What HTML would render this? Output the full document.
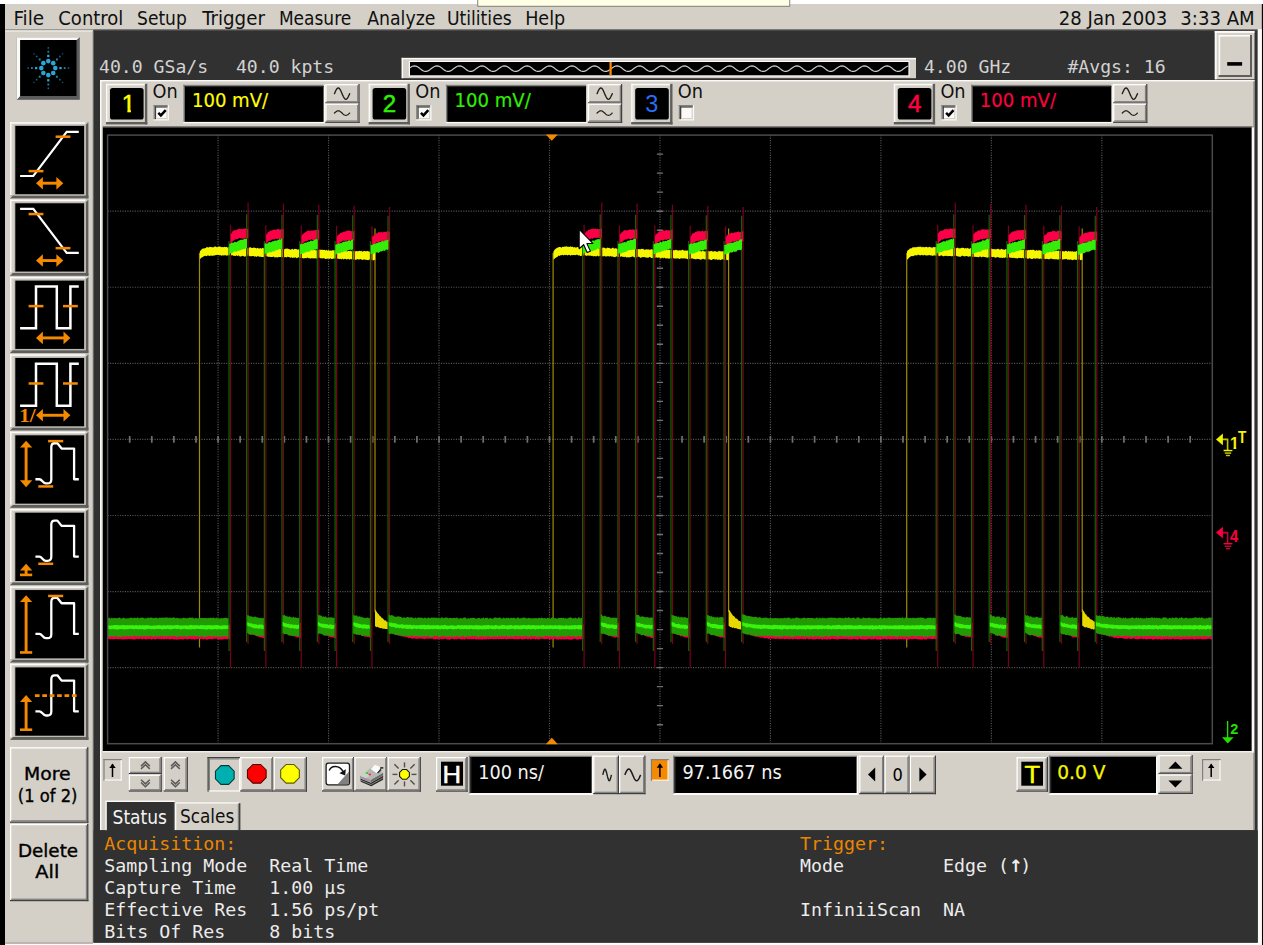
<!DOCTYPE html>
<html><head><meta charset="utf-8"><title>Infiniium</title>
<style>html,body{margin:0;padding:0;background:#fff;overflow:hidden}svg{display:block}</style>
</head><body>
<svg width="1263" height="945" viewBox="0 0 1263 945">
<g id="frame">
<rect x="0" y="0" width="1263" height="945" fill="#ffffff"/>
<rect x="0" y="4" width="5.2" height="941" fill="#000000"/>
<rect x="5.2" y="4" width="1256.6" height="25.3" fill="#d4d0c8"/>
<rect x="1261.8" y="4" width="1.2" height="941" fill="#000000"/>
<rect x="477.3" y="0" width="312.9" height="6.7" fill="#77776c"/>
<rect x="478.2" y="0" width="311.1" height="5.8" fill="#ffffe6"/>
<rect x="5.2" y="29.3" width="87.8" height="913.7" fill="#d4d0c8"/>
<rect x="5.2" y="30.1" width="87.8" height="1.5" fill="#f1f0ec"/>
<rect x="93" y="30.1" width="1164.8" height="912.6" fill="#313131"/>
<rect x="92.6" y="30.8" width="1" height="911.9" fill="#8c8a86"/>
<rect x="5.2" y="29.2" width="1252.6" height="1" fill="#8a8884"/>
<rect x="93.6" y="29.6" width="1164.2" height="1" fill="#454545"/>
<rect x="1257.8" y="29.3" width="4" height="915.7" fill="#fbfaf8"/>
<rect x="5.2" y="942.9" width="1252.6" height="2.1" fill="#ffffff"/>
<rect x="5.2" y="942.6" width="87.8" height="1" fill="#8c8a86"/>
</g>
<g id="menu">
<text x="13.44" y="25" font-family="'DejaVu Sans Condensed','Liberation Sans',sans-serif" font-size="20.1" fill="#101010" textLength="30.69" lengthAdjust="spacingAndGlyphs" xml:space="preserve">File</text>
<text x="58.29" y="25" font-family="'DejaVu Sans Condensed','Liberation Sans',sans-serif" font-size="20.1" fill="#101010" textLength="65.07" lengthAdjust="spacingAndGlyphs" xml:space="preserve">Control</text>
<text x="137.05" y="25" font-family="'DejaVu Sans Condensed','Liberation Sans',sans-serif" font-size="20.1" fill="#101010" textLength="49.73" lengthAdjust="spacingAndGlyphs" xml:space="preserve">Setup</text>
<text x="202.3" y="25" font-family="'DejaVu Sans Condensed','Liberation Sans',sans-serif" font-size="20.1" fill="#101010" textLength="62.61" lengthAdjust="spacingAndGlyphs" xml:space="preserve">Trigger</text>
<text x="278.88" y="25" font-family="'DejaVu Sans Condensed','Liberation Sans',sans-serif" font-size="20.1" fill="#101010" textLength="72.36" lengthAdjust="spacingAndGlyphs" xml:space="preserve">Measure</text>
<text x="367.21" y="25" font-family="'DejaVu Sans Condensed','Liberation Sans',sans-serif" font-size="20.1" fill="#101010" textLength="68.15" lengthAdjust="spacingAndGlyphs" xml:space="preserve">Analyze</text>
<text x="446.96" y="25" font-family="'DejaVu Sans Condensed','Liberation Sans',sans-serif" font-size="20.1" fill="#101010" textLength="64.73" lengthAdjust="spacingAndGlyphs" xml:space="preserve">Utilities</text>
<text x="525.13" y="25" font-family="'DejaVu Sans Condensed','Liberation Sans',sans-serif" font-size="20.1" fill="#101010" textLength="40.09" lengthAdjust="spacingAndGlyphs" xml:space="preserve">Help</text>
<text x="1167.2" y="25" font-family="'DejaVu Sans Condensed','Liberation Sans',sans-serif" font-size="20.1" fill="#101010" text-anchor="end" xml:space="preserve">28 Jan 2003</text>
<text x="1254.6" y="25" font-family="'DejaVu Sans Condensed','Liberation Sans',sans-serif" font-size="20.1" fill="#101010" text-anchor="end" xml:space="preserve">3:33 AM</text>
</g>
<g id="sidebar">
<rect x="16.8" y="37.2" width="63" height="62.6" fill="#5c5c5c"/>
<polygon points="16.8,37.2 79.8,37.2 76.5,40 20.2,40 20.2,96 16.8,99.8" fill="#fbfaf7"/>
<rect x="20.2" y="40" width="56.3" height="56" fill="#000"/>
<circle cx="55.3" cy="68.1" r="2.3" fill="#2aa6d6"/>
<rect x="59.35" y="66.95" width="2.3" height="2.3" fill="#2aa6d6" opacity="1"/>
<rect x="63.8" y="67.2" width="1.8" height="1.8" fill="#2aa6d6" opacity="0.8"/>
<rect x="67.75" y="67.35" width="1.5" height="1.5" fill="#2aa6d6" opacity="0.65"/>
<circle cx="53.25" cy="73.05" r="2.3" fill="#2aa6d6"/>
<rect x="55.95" y="75.75" width="1.95" height="1.95" fill="#2aa6d6" opacity="0.8"/>
<rect x="59.13" y="78.93" width="1.53" height="1.53" fill="#2aa6d6" opacity="0.6400000000000001"/>
<rect x="61.95" y="81.75" width="1.27" height="1.27" fill="#2aa6d6" opacity="0.52"/>
<circle cx="48.3" cy="75.1" r="2.3" fill="#2aa6d6"/>
<rect x="47.15" y="79.15" width="2.3" height="2.3" fill="#2aa6d6" opacity="1"/>
<rect x="47.4" y="83.6" width="1.8" height="1.8" fill="#2aa6d6" opacity="0.8"/>
<rect x="47.55" y="87.55" width="1.5" height="1.5" fill="#2aa6d6" opacity="0.65"/>
<circle cx="43.35" cy="73.05" r="2.3" fill="#2aa6d6"/>
<rect x="38.7" y="75.75" width="1.95" height="1.95" fill="#2aa6d6" opacity="0.8"/>
<rect x="35.94" y="78.93" width="1.53" height="1.53" fill="#2aa6d6" opacity="0.6400000000000001"/>
<rect x="33.38" y="81.75" width="1.27" height="1.27" fill="#2aa6d6" opacity="0.52"/>
<circle cx="41.3" cy="68.1" r="2.3" fill="#2aa6d6"/>
<rect x="34.95" y="66.95" width="2.3" height="2.3" fill="#2aa6d6" opacity="1"/>
<rect x="31" y="67.2" width="1.8" height="1.8" fill="#2aa6d6" opacity="0.8"/>
<rect x="27.35" y="67.35" width="1.5" height="1.5" fill="#2aa6d6" opacity="0.65"/>
<circle cx="43.35" cy="63.15" r="2.3" fill="#2aa6d6"/>
<rect x="38.7" y="58.5" width="1.95" height="1.95" fill="#2aa6d6" opacity="0.8"/>
<rect x="35.94" y="55.74" width="1.53" height="1.53" fill="#2aa6d6" opacity="0.6400000000000001"/>
<rect x="33.38" y="53.18" width="1.27" height="1.27" fill="#2aa6d6" opacity="0.52"/>
<circle cx="48.3" cy="61.1" r="2.3" fill="#2aa6d6"/>
<rect x="47.15" y="54.75" width="2.3" height="2.3" fill="#2aa6d6" opacity="1"/>
<rect x="47.4" y="50.8" width="1.8" height="1.8" fill="#2aa6d6" opacity="0.8"/>
<rect x="47.55" y="47.15" width="1.5" height="1.5" fill="#2aa6d6" opacity="0.65"/>
<circle cx="53.25" cy="63.15" r="2.3" fill="#2aa6d6"/>
<rect x="55.95" y="58.5" width="1.95" height="1.95" fill="#2aa6d6" opacity="0.8"/>
<rect x="59.13" y="55.74" width="1.53" height="1.53" fill="#2aa6d6" opacity="0.6400000000000001"/>
<rect x="61.95" y="53.18" width="1.27" height="1.27" fill="#2aa6d6" opacity="0.52"/>
<rect x="10" y="122.2" width="78.4" height="76.2" fill="#d4d0c8"/>
<rect x="10" y="122.2" width="77.2" height="1.5" fill="#fbfaf7"/>
<rect x="10" y="122.2" width="1.5" height="75" fill="#fbfaf7"/>
<rect x="10" y="195.5" width="78.4" height="2.9" fill="#5e5e5c"/>
<rect x="85.8" y="122.2" width="2.6" height="76.2" fill="#5e5e5c"/>
<polygon points="10,198.4 12.9,195.5 10,195.5" fill="#d4d0c8"/>
<polygon points="88.4,122.2 85.8,124.8 85.8,122.2" fill="#d4d0c8"/>
<rect x="14.1" y="124.7" width="71.2" height="70.7" fill="#bdb9b1"/>
<rect x="15.3" y="125.9" width="68.8" height="68.3" fill="#000"/>
<path d="M20.1,176 H33.3 L66.7,131.8 H78.8" stroke="#fff" fill="none" stroke-width="2.2"/>
<rect x="55.6" y="135.45" width="14.8" height="2.5" fill="#f58a00"/>
<rect x="28.6" y="169.85" width="14.8" height="2.5" fill="#f58a00"/>
<rect x="41.9" y="181.75" width="15.5" height="2.9" fill="#f58a00"/>
<polygon points="36,183.2 42.9,176.9 42.9,189.5" fill="#f58a00"/>
<polygon points="63.3,183.2 56.4,176.9 56.4,189.5" fill="#f58a00"/>
<rect x="10" y="199.56" width="78.4" height="76.2" fill="#d4d0c8"/>
<rect x="10" y="199.56" width="77.2" height="1.5" fill="#fbfaf7"/>
<rect x="10" y="199.56" width="1.5" height="75" fill="#fbfaf7"/>
<rect x="10" y="272.86" width="78.4" height="2.9" fill="#5e5e5c"/>
<rect x="85.8" y="199.56" width="2.6" height="76.2" fill="#5e5e5c"/>
<polygon points="10,275.76 12.9,272.86 10,272.86" fill="#d4d0c8"/>
<polygon points="88.4,199.56 85.8,202.16 85.8,199.56" fill="#d4d0c8"/>
<rect x="14.1" y="202.06" width="71.2" height="70.7" fill="#bdb9b1"/>
<rect x="15.3" y="203.26" width="68.8" height="68.3" fill="#000"/>
<path d="M20.1,208.86 H33.3 L66.7,252.96 H78.8" stroke="#fff" fill="none" stroke-width="2.2"/>
<rect x="28.6" y="212.81" width="14.8" height="2.5" fill="#f58a00"/>
<rect x="55.6" y="246.91" width="14.8" height="2.5" fill="#f58a00"/>
<rect x="41.9" y="259.11" width="15.5" height="2.9" fill="#f58a00"/>
<polygon points="36,260.56 42.9,254.26 42.9,266.86" fill="#f58a00"/>
<polygon points="63.3,260.56 56.4,254.26 56.4,266.86" fill="#f58a00"/>
<rect x="10" y="276.92" width="78.4" height="76.2" fill="#d4d0c8"/>
<rect x="10" y="276.92" width="77.2" height="1.5" fill="#fbfaf7"/>
<rect x="10" y="276.92" width="1.5" height="75" fill="#fbfaf7"/>
<rect x="10" y="350.22" width="78.4" height="2.9" fill="#5e5e5c"/>
<rect x="85.8" y="276.92" width="2.6" height="76.2" fill="#5e5e5c"/>
<polygon points="10,353.12 12.9,350.22 10,350.22" fill="#d4d0c8"/>
<polygon points="88.4,276.92 85.8,279.52 85.8,276.92" fill="#d4d0c8"/>
<rect x="14.1" y="279.42" width="71.2" height="70.7" fill="#bdb9b1"/>
<rect x="15.3" y="280.62" width="68.8" height="68.3" fill="#000"/>
<path d="M20.1,328.32 H36 V286.42 H56.8 V328.32 H70.4 V286.42 H78.8" stroke="#fff" fill="none" stroke-width="2.5"/>
<rect x="28.6" y="304.87" width="14.8" height="2.5" fill="#f58a00"/>
<rect x="63" y="304.87" width="14.8" height="2.5" fill="#f58a00"/>
<rect x="41.9" y="336.47" width="22.6" height="2.9" fill="#f58a00"/>
<polygon points="36,337.92 42.9,331.62 42.9,344.22" fill="#f58a00"/>
<polygon points="70.4,337.92 63.5,331.62 63.5,344.22" fill="#f58a00"/>
<rect x="10" y="354.28" width="78.4" height="76.2" fill="#d4d0c8"/>
<rect x="10" y="354.28" width="77.2" height="1.5" fill="#fbfaf7"/>
<rect x="10" y="354.28" width="1.5" height="75" fill="#fbfaf7"/>
<rect x="10" y="427.58" width="78.4" height="2.9" fill="#5e5e5c"/>
<rect x="85.8" y="354.28" width="2.6" height="76.2" fill="#5e5e5c"/>
<polygon points="10,430.48 12.9,427.58 10,427.58" fill="#d4d0c8"/>
<polygon points="88.4,354.28 85.8,356.88 85.8,354.28" fill="#d4d0c8"/>
<rect x="14.1" y="356.78" width="71.2" height="70.7" fill="#bdb9b1"/>
<rect x="15.3" y="357.98" width="68.8" height="68.3" fill="#000"/>
<path d="M20.1,405.68 H36 V363.78 H56.8 V405.68 H70.4 V363.78 H78.8" stroke="#fff" fill="none" stroke-width="2.5"/>
<rect x="28.6" y="382.23" width="14.8" height="2.5" fill="#f58a00"/>
<rect x="63" y="382.23" width="14.8" height="2.5" fill="#f58a00"/>
<rect x="41.9" y="413.83" width="22.6" height="2.9" fill="#f58a00"/>
<polygon points="36,415.28 42.9,408.98 42.9,421.58" fill="#f58a00"/>
<polygon points="70.4,415.28 63.5,408.98 63.5,421.58" fill="#f58a00"/>
<text x="19.2" y="421.58" font-family="'Liberation Serif',serif" font-size="19.5" fill="#f58a00" font-weight="bold" textLength="16.5" lengthAdjust="spacingAndGlyphs" xml:space="preserve">1/</text>
<rect x="10" y="431.64" width="78.4" height="76.2" fill="#d4d0c8"/>
<rect x="10" y="431.64" width="77.2" height="1.5" fill="#fbfaf7"/>
<rect x="10" y="431.64" width="1.5" height="75" fill="#fbfaf7"/>
<rect x="10" y="504.94" width="78.4" height="2.9" fill="#5e5e5c"/>
<rect x="85.8" y="431.64" width="2.6" height="76.2" fill="#5e5e5c"/>
<polygon points="10,507.84 12.9,504.94 10,504.94" fill="#d4d0c8"/>
<polygon points="88.4,431.64 85.8,434.24 85.8,431.64" fill="#d4d0c8"/>
<rect x="14.1" y="434.14" width="71.2" height="70.7" fill="#bdb9b1"/>
<rect x="15.3" y="435.34" width="68.8" height="68.3" fill="#000"/>
<path d="M35.4,479.24 H39.4 C42,479.24 43,483.44 45.8,483.44 H47.6 C50.2,483.44 51.3,482.24 51.3,479.44 V447.24 C51.3,444.44 52.4,443.24 54.6,443.24 H57.4 L61.6,448.54 H74.1 V479.24 H78.8" stroke="#fff" fill="none" stroke-width="2.3" stroke-linejoin="round"/>
<rect x="48.1" y="439.89" width="15.1" height="2.5" fill="#f58a00"/>
<rect x="38.3" y="485.19" width="14.9" height="2.5" fill="#f58a00"/>
<rect x="24.65" y="446.34" width="2.9" height="35" fill="#f58a00"/>
<polygon points="26.1,440.64 20,447.44 32.2,447.44" fill="#f58a00"/>
<polygon points="26.1,487.14 20,480.34 32.2,480.34" fill="#f58a00"/>
<rect x="10" y="509" width="78.4" height="76.2" fill="#d4d0c8"/>
<rect x="10" y="509" width="77.2" height="1.5" fill="#fbfaf7"/>
<rect x="10" y="509" width="1.5" height="75" fill="#fbfaf7"/>
<rect x="10" y="582.3" width="78.4" height="2.9" fill="#5e5e5c"/>
<rect x="85.8" y="509" width="2.6" height="76.2" fill="#5e5e5c"/>
<polygon points="10,585.2 12.9,582.3 10,582.3" fill="#d4d0c8"/>
<polygon points="88.4,509 85.8,511.6 85.8,509" fill="#d4d0c8"/>
<rect x="14.1" y="511.5" width="71.2" height="70.7" fill="#bdb9b1"/>
<rect x="15.3" y="512.7" width="68.8" height="68.3" fill="#000"/>
<path d="M35.4,556.6 H39.4 C42,556.6 43,560.8 45.8,560.8 H47.6 C50.2,560.8 51.3,559.6 51.3,556.8 V524.6 C51.3,521.8 52.4,520.6 54.6,520.6 H57.4 L61.6,525.9 H74.1 V556.6 H78.8" stroke="#fff" fill="none" stroke-width="2.3" stroke-linejoin="round"/>
<rect x="38.3" y="562.55" width="14.9" height="2.5" fill="#f58a00"/>
<rect x="24.65" y="569.6" width="2.9" height="5.3" fill="#f58a00"/>
<polygon points="26.1,563.8 20,570.6 32.2,570.6" fill="#f58a00"/>
<rect x="20" y="573.6" width="12.2" height="2.6" fill="#f58a00"/>
<rect x="10" y="586.36" width="78.4" height="76.2" fill="#d4d0c8"/>
<rect x="10" y="586.36" width="77.2" height="1.5" fill="#fbfaf7"/>
<rect x="10" y="586.36" width="1.5" height="75" fill="#fbfaf7"/>
<rect x="10" y="659.66" width="78.4" height="2.9" fill="#5e5e5c"/>
<rect x="85.8" y="586.36" width="2.6" height="76.2" fill="#5e5e5c"/>
<polygon points="10,662.56 12.9,659.66 10,659.66" fill="#d4d0c8"/>
<polygon points="88.4,586.36 85.8,588.96 85.8,586.36" fill="#d4d0c8"/>
<rect x="14.1" y="588.86" width="71.2" height="70.7" fill="#bdb9b1"/>
<rect x="15.3" y="590.06" width="68.8" height="68.3" fill="#000"/>
<path d="M35.4,633.96 H39.4 C42,633.96 43,638.16 45.8,638.16 H47.6 C50.2,638.16 51.3,636.96 51.3,634.16 V601.96 C51.3,599.16 52.4,597.96 54.6,597.96 H57.4 L61.6,603.26 H74.1 V633.96 H78.8" stroke="#fff" fill="none" stroke-width="2.3" stroke-linejoin="round"/>
<rect x="48.1" y="594.71" width="15.1" height="2.5" fill="#f58a00"/>
<rect x="24.65" y="601.06" width="2.9" height="51.4" fill="#f58a00"/>
<polygon points="26.1,595.26 20,602.06 32.2,602.06" fill="#f58a00"/>
<rect x="20" y="651.16" width="12.2" height="2.6" fill="#f58a00"/>
<rect x="10" y="663.72" width="78.4" height="76.2" fill="#d4d0c8"/>
<rect x="10" y="663.72" width="77.2" height="1.5" fill="#fbfaf7"/>
<rect x="10" y="663.72" width="1.5" height="75" fill="#fbfaf7"/>
<rect x="10" y="737.02" width="78.4" height="2.9" fill="#5e5e5c"/>
<rect x="85.8" y="663.72" width="2.6" height="76.2" fill="#5e5e5c"/>
<polygon points="10,739.92 12.9,737.02 10,737.02" fill="#d4d0c8"/>
<polygon points="88.4,663.72 85.8,666.32 85.8,663.72" fill="#d4d0c8"/>
<rect x="14.1" y="666.22" width="71.2" height="70.7" fill="#bdb9b1"/>
<rect x="15.3" y="667.42" width="68.8" height="68.3" fill="#000"/>
<path d="M35.4,711.32 H39.4 C42,711.32 43,715.52 45.8,715.52 H47.6 C50.2,715.52 51.3,714.32 51.3,711.52 V679.32 C51.3,676.52 52.4,675.32 54.6,675.32 H57.4 L61.6,680.62 H74.1 V711.32 H78.8" stroke="#fff" fill="none" stroke-width="2.3" stroke-linejoin="round"/>
<line x1="34.9" y1="695.62" x2="76.9" y2="695.62" stroke="#f58a00" stroke-width="2.7" stroke-dasharray="4.7 2.7"/>
<rect x="24.65" y="700.92" width="2.9" height="28.8" fill="#f58a00"/>
<polygon points="26.1,695.12 20,701.92 32.2,701.92" fill="#f58a00"/>
<rect x="20" y="728.42" width="12.2" height="2.6" fill="#f58a00"/>
<rect x="10" y="747.2" width="78.4" height="75.6" fill="#d4d0c8"/>
<rect x="10" y="747.2" width="77.1" height="1.3" fill="#ffffff"/>
<rect x="10" y="747.2" width="1.3" height="74.3" fill="#ffffff"/>
<rect x="10" y="821.5" width="78.4" height="1.3" fill="#404040"/>
<rect x="87.1" y="747.2" width="1.3" height="75.6" fill="#404040"/>
<rect x="11.3" y="820.2" width="75.8" height="1.3" fill="#808080"/>
<rect x="85.8" y="748.5" width="1.3" height="73" fill="#808080"/>
<rect x="10" y="823.9" width="78.4" height="77.3" fill="#d4d0c8"/>
<rect x="10" y="823.9" width="77.1" height="1.3" fill="#ffffff"/>
<rect x="10" y="823.9" width="1.3" height="76" fill="#ffffff"/>
<rect x="10" y="899.9" width="78.4" height="1.3" fill="#404040"/>
<rect x="87.1" y="823.9" width="1.3" height="77.3" fill="#404040"/>
<rect x="11.3" y="898.6" width="75.8" height="1.3" fill="#808080"/>
<rect x="85.8" y="825.2" width="1.3" height="74.7" fill="#808080"/>
<text x="47.4" y="779.8" font-family="'DejaVu Sans','Liberation Sans',sans-serif" font-size="18.3" fill="#000" text-anchor="middle" textLength="46.6" lengthAdjust="spacingAndGlyphs" stroke="#000" stroke-width="0.4" xml:space="preserve">More</text>
<text x="47.6" y="802" font-family="'DejaVu Sans','Liberation Sans',sans-serif" font-size="18.3" fill="#000" text-anchor="middle" textLength="59.6" lengthAdjust="spacingAndGlyphs" stroke="#000" stroke-width="0.4" xml:space="preserve">(1 of 2)</text>
<text x="48" y="856.8" font-family="'DejaVu Sans','Liberation Sans',sans-serif" font-size="18.3" fill="#000" text-anchor="middle" textLength="60.2" lengthAdjust="spacingAndGlyphs" stroke="#000" stroke-width="0.4" xml:space="preserve">Delete</text>
<text x="47.3" y="878.4" font-family="'DejaVu Sans','Liberation Sans',sans-serif" font-size="18.3" fill="#000" text-anchor="middle" textLength="24" lengthAdjust="spacingAndGlyphs" stroke="#000" stroke-width="0.4" xml:space="preserve">All</text>
</g>
<g id="toprow">
<text x="99" y="73" font-family="'DejaVu Sans Mono','Liberation Mono',monospace" font-size="18.15" fill="#d2d2d2" xml:space="preserve">40.0 GSa/s</text>
<text x="235.9" y="73" font-family="'DejaVu Sans Mono','Liberation Mono',monospace" font-size="18.15" fill="#d2d2d2" xml:space="preserve">40.0 kpts</text>
<text x="923.9" y="73" font-family="'DejaVu Sans Mono','Liberation Mono',monospace" font-size="18.15" fill="#d2d2d2" xml:space="preserve">4.00 GHz</text>
<text x="1067.4" y="73" font-family="'DejaVu Sans Mono','Liberation Mono',monospace" font-size="18.15" fill="#d2d2d2" xml:space="preserve">#Avgs: 16</text>
<rect x="401.7" y="57.9" width="514.3" height="20.3" fill="#d4d0c8"/>
<rect x="401.7" y="57.9" width="514.3" height="1.4" fill="#fbfaf7"/>
<rect x="401.7" y="57.9" width="1.4" height="20.3" fill="#fbfaf7"/>
<rect x="408.8" y="60.8" width="500.8" height="15.7" fill="#fbfaf7"/>
<rect x="410" y="62" width="498.4" height="13.3" fill="#000"/>
<path d="M410,67.69 L411.5,66.68 L413,66.02 L414.5,65.8 L416,66.08 L417.5,66.8 L419,67.85 L420.5,69.03 L422,70.14 L423.5,71 L425,71.45 L426.5,71.42 L428,70.91 L429.5,70.01 L431,68.87 L432.5,67.69 L434,66.68 L435.5,66.02 L437,65.8 L438.5,66.08 L440,66.8 L441.5,67.85 L443,69.03 L444.5,70.14 L446,71 L447.5,71.45 L449,71.42 L450.5,70.91 L452,70.01 L453.5,68.87 L455,67.69 L456.5,66.68 L458,66.02 L459.5,65.8 L461,66.08 L462.5,66.8 L464,67.85 L465.5,69.03 L467,70.14 L468.5,71 L470,71.45 L471.5,71.42 L473,70.91 L474.5,70.01 L476,68.87 L477.5,67.69 L479,66.68 L480.5,66.02 L482,65.8 L483.5,66.08 L485,66.8 L486.5,67.85 L488,69.03 L489.5,70.14 L491,71 L492.5,71.45 L494,71.42 L495.5,70.91 L497,70.01 L498.5,68.87 L500,67.69 L501.5,66.68 L503,66.02 L504.5,65.8 L506,66.08 L507.5,66.8 L509,67.85 L510.5,69.03 L512,70.14 L513.5,71 L515,71.45 L516.5,71.42 L518,70.91 L519.5,70.01 L521,68.87 L522.5,67.69 L524,66.68 L525.5,66.02 L527,65.8 L528.5,66.08 L530,66.8 L531.5,67.85 L533,69.03 L534.5,70.14 L536,71 L537.5,71.45 L539,71.42 L540.5,70.91 L542,70.01 L543.5,68.87 L545,67.69 L546.5,66.68 L548,66.02 L549.5,65.8 L551,66.08 L552.5,66.8 L554,67.85 L555.5,69.03 L557,70.14 L558.5,71 L560,71.45 L561.5,71.42 L563,70.91 L564.5,70.01 L566,68.87 L567.5,67.69 L569,66.68 L570.5,66.02 L572,65.8 L573.5,66.08 L575,66.8 L576.5,67.85 L578,69.03 L579.5,70.14 L581,71 L582.5,71.45 L584,71.42 L585.5,70.91 L587,70.01 L588.5,68.87 L590,67.69 L591.5,66.68 L593,66.02 L594.5,65.8 L596,66.08 L597.5,66.8 L599,67.85 L600.5,69.03 L602,70.14 L603.5,71 L605,71.45 L606.5,71.42 L608,70.91 L609.5,70.01 L611,68.87 L612.5,67.69 L614,66.68 L615.5,66.02 L617,65.8 L618.5,66.08 L620,66.8 L621.5,67.85 L623,69.03 L624.5,70.14 L626,71 L627.5,71.45 L629,71.42 L630.5,70.91 L632,70.01 L633.5,68.87 L635,67.69 L636.5,66.68 L638,66.02 L639.5,65.8 L641,66.08 L642.5,66.8 L644,67.85 L645.5,69.03 L647,70.14 L648.5,71 L650,71.45 L651.5,71.42 L653,70.91 L654.5,70.01 L656,68.87 L657.5,67.69 L659,66.68 L660.5,66.02 L662,65.8 L663.5,66.08 L665,66.8 L666.5,67.85 L668,69.03 L669.5,70.14 L671,71 L672.5,71.45 L674,71.42 L675.5,70.91 L677,70.01 L678.5,68.87 L680,67.69 L681.5,66.68 L683,66.02 L684.5,65.8 L686,66.08 L687.5,66.8 L689,67.85 L690.5,69.03 L692,70.14 L693.5,71 L695,71.45 L696.5,71.42 L698,70.91 L699.5,70.01 L701,68.87 L702.5,67.69 L704,66.68 L705.5,66.02 L707,65.8 L708.5,66.08 L710,66.8 L711.5,67.85 L713,69.03 L714.5,70.14 L716,71 L717.5,71.45 L719,71.42 L720.5,70.91 L722,70.01 L723.5,68.87 L725,67.69 L726.5,66.68 L728,66.02 L729.5,65.8 L731,66.08 L732.5,66.8 L734,67.85 L735.5,69.03 L737,70.14 L738.5,71 L740,71.45 L741.5,71.42 L743,70.91 L744.5,70.01 L746,68.87 L747.5,67.69 L749,66.68 L750.5,66.02 L752,65.8 L753.5,66.08 L755,66.8 L756.5,67.85 L758,69.03 L759.5,70.14 L761,71 L762.5,71.45 L764,71.42 L765.5,70.91 L767,70.01 L768.5,68.87 L770,67.69 L771.5,66.68 L773,66.02 L774.5,65.8 L776,66.08 L777.5,66.8 L779,67.85 L780.5,69.03 L782,70.14 L783.5,71 L785,71.45 L786.5,71.42 L788,70.91 L789.5,70.01 L791,68.87 L792.5,67.69 L794,66.68 L795.5,66.02 L797,65.8 L798.5,66.08 L800,66.8 L801.5,67.85 L803,69.03 L804.5,70.14 L806,71 L807.5,71.45 L809,71.42 L810.5,70.91 L812,70.01 L813.5,68.87 L815,67.69 L816.5,66.68 L818,66.02 L819.5,65.8 L821,66.08 L822.5,66.8 L824,67.85 L825.5,69.03 L827,70.14 L828.5,71 L830,71.45 L831.5,71.42 L833,70.91 L834.5,70.01 L836,68.87 L837.5,67.69 L839,66.68 L840.5,66.02 L842,65.8 L843.5,66.08 L845,66.8 L846.5,67.85 L848,69.03 L849.5,70.14 L851,71 L852.5,71.45 L854,71.42 L855.5,70.91 L857,70.01 L858.5,68.87 L860,67.69 L861.5,66.68 L863,66.02 L864.5,65.8 L866,66.08 L867.5,66.8 L869,67.85 L870.5,69.03 L872,70.14 L873.5,71 L875,71.45 L876.5,71.42 L878,70.91 L879.5,70.01 L881,68.87 L882.5,67.69 L884,66.68 L885.5,66.02 L887,65.8 L888.5,66.08 L890,66.8 L891.5,67.85 L893,69.03 L894.5,70.14 L896,71 L897.5,71.45 L899,71.42 L900.5,70.91 L902,70.01 L903.5,68.87 L905,67.69 L906.5,66.68 L908,66.02" stroke="#c6c6c6" fill="none" stroke-width="1.25"/>
<rect x="609.5" y="62" width="2.2" height="13.3" fill="#ff8a00"/>
<rect x="1214.8" y="31" width="39.7" height="48.3" fill="#d4d0c8"/>
<rect x="1214.8" y="31" width="39.7" height="1.9" fill="#fbfaf7"/>
<rect x="1214.8" y="31" width="1.9" height="48.3" fill="#fbfaf7"/>
<rect x="1218.6" y="35" width="33.4" height="42" fill="#d4d0c8"/>
<rect x="1218.6" y="35" width="31.4" height="1.6" fill="#fbfaf7"/>
<rect x="1218.6" y="35" width="1.6" height="40" fill="#fbfaf7"/>
<rect x="1218.6" y="75" width="33.4" height="2" fill="#5e5e5c"/>
<rect x="1250" y="35" width="2" height="42" fill="#5e5e5c"/>
<rect x="1227.2" y="62.1" width="14.9" height="3.6" fill="#000"/>
</g>
<g id="panel">
<rect x="100" y="80" width="1154.5" height="750.2" fill="#d4d0c8"/>
<rect x="100" y="80" width="1154.5" height="1.4" fill="#fbfaf7"/>
<rect x="100" y="80" width="1.5" height="750.2" fill="#fbfaf7"/>
<rect x="1253.3" y="81.4" width="1.2" height="748.8" fill="#8c8a86"/>
</g>
<g id="chanbar">
<rect x="106" y="83.8" width="41.3" height="40.6" fill="#d4d0c8"/>
<rect x="106" y="83.8" width="40.1" height="1.5" fill="#fbfaf7"/>
<rect x="106" y="83.8" width="1.5" height="39.4" fill="#fbfaf7"/>
<rect x="106" y="122" width="41.3" height="2.4" fill="#5e5e5c"/>
<rect x="144.9" y="83.8" width="2.4" height="40.6" fill="#5e5e5c"/>
<rect x="107.5" y="85.3" width="1.2" height="36.7" fill="#e6e3de"/>
<rect x="110" y="88" width="33.6" height="31.5" rx="2.6" fill="#000"/>
<text x="128.4" y="112.4" font-family="'Liberation Sans',sans-serif" font-size="24" fill="#ffff00" text-anchor="middle" stroke="#ffff00" stroke-width="0.5" xml:space="preserve">1</text>
<rect x="122" y="109.3" width="5.35" height="3.9" fill="#000"/>
<rect x="130.9" y="109.3" width="5.1" height="3.9" fill="#000"/>
<text x="152.6" y="98" font-family="'DejaVu Sans Condensed','Liberation Sans',sans-serif" font-size="19.7" fill="#101010" xml:space="preserve">On</text>
<rect x="153.5" y="105" width="15.4" height="15.5" fill="#fbfaf7"/>
<rect x="153.5" y="105" width="14.2" height="1.3" fill="#808080"/>
<rect x="153.5" y="105" width="1.3" height="14.3" fill="#808080"/>
<rect x="154.8" y="106.3" width="12.8" height="1.3" fill="#404040"/>
<rect x="154.8" y="106.3" width="1.3" height="12.9" fill="#404040"/>
<rect x="156.1" y="118" width="11.5" height="1.2" fill="#d4d0c8"/>
<rect x="166.4" y="107.6" width="1.2" height="11.6" fill="#d4d0c8"/>
<path d="M158.3,112.8 L160.9,115.4 L165.7,110.2" stroke="#000" fill="none" stroke-width="2.5"/>
<rect x="183.3" y="84.7" width="141.7" height="38.6" fill="#fbfaf7"/>
<rect x="183.3" y="84.7" width="140.3" height="1.3" fill="#808080"/>
<rect x="183.3" y="84.7" width="1.3" height="37.2" fill="#808080"/>
<rect x="184.6" y="86" width="139" height="35.9" fill="#000"/>
<rect x="184.6" y="86" width="139" height="1.1" fill="#2a2a2a"/>
<text x="191.9" y="107.3" font-family="'DejaVu Sans Condensed','Liberation Sans',sans-serif" font-size="19.7" fill="#ffff00" textLength="76.3" lengthAdjust="spacingAndGlyphs" stroke="#ffff00" stroke-width="0.15" xml:space="preserve">100 mV/</text>
<rect x="325.3" y="84.1" width="34.3" height="19.5" fill="#d4d0c8"/>
<rect x="325.3" y="84.1" width="33.05" height="1.25" fill="#ffffff"/>
<rect x="325.3" y="84.1" width="1.25" height="18.25" fill="#ffffff"/>
<rect x="325.3" y="102.35" width="34.3" height="1.25" fill="#404040"/>
<rect x="358.35" y="84.1" width="1.25" height="19.5" fill="#404040"/>
<rect x="326.55" y="101.1" width="31.8" height="1.25" fill="#808080"/>
<rect x="357.1" y="85.35" width="1.25" height="17" fill="#808080"/>
<path d="M334.45,93.65 L335.08,92.17 L335.72,90.8 L336.35,89.62 L336.98,88.71 L337.62,88.14 L338.25,87.95 L338.88,88.14 L339.52,88.71 L340.15,89.62 L340.78,90.8 L341.42,92.17 L342.05,93.65 L342.68,95.13 L343.32,96.5 L343.95,97.68 L344.58,98.59 L345.22,99.16 L345.85,99.35 L346.48,99.16 L347.12,98.59 L347.75,97.68 L348.38,96.5 L349.02,95.13 L349.65,93.65" stroke="#1c1c1c" fill="none" stroke-width="1.35" stroke-linecap="round"/>
<rect x="325.3" y="103.6" width="34.3" height="19.3" fill="#d4d0c8"/>
<rect x="325.3" y="103.6" width="33.05" height="1.25" fill="#ffffff"/>
<rect x="325.3" y="103.6" width="1.25" height="18.05" fill="#ffffff"/>
<rect x="325.3" y="121.65" width="34.3" height="1.25" fill="#404040"/>
<rect x="358.35" y="103.6" width="1.25" height="19.3" fill="#404040"/>
<rect x="326.55" y="120.4" width="31.8" height="1.25" fill="#808080"/>
<rect x="357.1" y="104.85" width="1.25" height="16.8" fill="#808080"/>
<path d="M334.45,113.05 L335.08,112.45 L335.72,111.9 L336.35,111.42 L336.98,111.06 L337.62,110.83 L338.25,110.75 L338.88,110.83 L339.52,111.06 L340.15,111.42 L340.78,111.9 L341.42,112.45 L342.05,113.05 L342.68,113.65 L343.32,114.2 L343.95,114.68 L344.58,115.04 L345.22,115.27 L345.85,115.35 L346.48,115.27 L347.12,115.04 L347.75,114.68 L348.38,114.2 L349.02,113.65 L349.65,113.05" stroke="#1c1c1c" fill="none" stroke-width="1.2" stroke-linecap="round"/>
<rect x="368.6" y="83.8" width="41.3" height="40.6" fill="#d4d0c8"/>
<rect x="368.6" y="83.8" width="40.1" height="1.5" fill="#fbfaf7"/>
<rect x="368.6" y="83.8" width="1.5" height="39.4" fill="#fbfaf7"/>
<rect x="368.6" y="122" width="41.3" height="2.4" fill="#5e5e5c"/>
<rect x="407.5" y="83.8" width="2.4" height="40.6" fill="#5e5e5c"/>
<rect x="370.1" y="85.3" width="1.2" height="36.7" fill="#e6e3de"/>
<rect x="372.6" y="88" width="33.6" height="31.5" rx="2.6" fill="#000"/>
<text x="389.4" y="112.4" font-family="'Liberation Sans',sans-serif" font-size="24" fill="#2ff000" text-anchor="middle" stroke="#2ff000" stroke-width="0.5" xml:space="preserve">2</text>
<text x="415.2" y="98" font-family="'DejaVu Sans Condensed','Liberation Sans',sans-serif" font-size="19.7" fill="#101010" xml:space="preserve">On</text>
<rect x="416.1" y="105" width="15.4" height="15.5" fill="#fbfaf7"/>
<rect x="416.1" y="105" width="14.2" height="1.3" fill="#808080"/>
<rect x="416.1" y="105" width="1.3" height="14.3" fill="#808080"/>
<rect x="417.4" y="106.3" width="12.8" height="1.3" fill="#404040"/>
<rect x="417.4" y="106.3" width="1.3" height="12.9" fill="#404040"/>
<rect x="418.7" y="118" width="11.5" height="1.2" fill="#d4d0c8"/>
<rect x="429" y="107.6" width="1.2" height="11.6" fill="#d4d0c8"/>
<path d="M420.9,112.8 L423.5,115.4 L428.3,110.2" stroke="#000" fill="none" stroke-width="2.5"/>
<rect x="445.9" y="84.7" width="141.7" height="38.6" fill="#fbfaf7"/>
<rect x="445.9" y="84.7" width="140.3" height="1.3" fill="#808080"/>
<rect x="445.9" y="84.7" width="1.3" height="37.2" fill="#808080"/>
<rect x="447.2" y="86" width="139" height="35.9" fill="#000"/>
<rect x="447.2" y="86" width="139" height="1.1" fill="#2a2a2a"/>
<text x="454.5" y="107.3" font-family="'DejaVu Sans Condensed','Liberation Sans',sans-serif" font-size="19.7" fill="#2ff000" textLength="76.3" lengthAdjust="spacingAndGlyphs" stroke="#2ff000" stroke-width="0.15" xml:space="preserve">100 mV/</text>
<rect x="587.9" y="84.1" width="34.3" height="19.5" fill="#d4d0c8"/>
<rect x="587.9" y="84.1" width="33.05" height="1.25" fill="#ffffff"/>
<rect x="587.9" y="84.1" width="1.25" height="18.25" fill="#ffffff"/>
<rect x="587.9" y="102.35" width="34.3" height="1.25" fill="#404040"/>
<rect x="620.95" y="84.1" width="1.25" height="19.5" fill="#404040"/>
<rect x="589.15" y="101.1" width="31.8" height="1.25" fill="#808080"/>
<rect x="619.7" y="85.35" width="1.25" height="17" fill="#808080"/>
<path d="M597.05,93.65 L597.68,92.17 L598.32,90.8 L598.95,89.62 L599.58,88.71 L600.22,88.14 L600.85,87.95 L601.48,88.14 L602.12,88.71 L602.75,89.62 L603.38,90.8 L604.02,92.17 L604.65,93.65 L605.28,95.13 L605.92,96.5 L606.55,97.68 L607.18,98.59 L607.82,99.16 L608.45,99.35 L609.08,99.16 L609.72,98.59 L610.35,97.68 L610.98,96.5 L611.62,95.13 L612.25,93.65" stroke="#1c1c1c" fill="none" stroke-width="1.35" stroke-linecap="round"/>
<rect x="587.9" y="103.6" width="34.3" height="19.3" fill="#d4d0c8"/>
<rect x="587.9" y="103.6" width="33.05" height="1.25" fill="#ffffff"/>
<rect x="587.9" y="103.6" width="1.25" height="18.05" fill="#ffffff"/>
<rect x="587.9" y="121.65" width="34.3" height="1.25" fill="#404040"/>
<rect x="620.95" y="103.6" width="1.25" height="19.3" fill="#404040"/>
<rect x="589.15" y="120.4" width="31.8" height="1.25" fill="#808080"/>
<rect x="619.7" y="104.85" width="1.25" height="16.8" fill="#808080"/>
<path d="M597.05,113.05 L597.68,112.45 L598.32,111.9 L598.95,111.42 L599.58,111.06 L600.22,110.83 L600.85,110.75 L601.48,110.83 L602.12,111.06 L602.75,111.42 L603.38,111.9 L604.02,112.45 L604.65,113.05 L605.28,113.65 L605.92,114.2 L606.55,114.68 L607.18,115.04 L607.82,115.27 L608.45,115.35 L609.08,115.27 L609.72,115.04 L610.35,114.68 L610.98,114.2 L611.62,113.65 L612.25,113.05" stroke="#1c1c1c" fill="none" stroke-width="1.2" stroke-linecap="round"/>
<rect x="631.2" y="83.8" width="41.3" height="40.6" fill="#d4d0c8"/>
<rect x="631.2" y="83.8" width="40.1" height="1.5" fill="#fbfaf7"/>
<rect x="631.2" y="83.8" width="1.5" height="39.4" fill="#fbfaf7"/>
<rect x="631.2" y="122" width="41.3" height="2.4" fill="#5e5e5c"/>
<rect x="670.1" y="83.8" width="2.4" height="40.6" fill="#5e5e5c"/>
<rect x="632.7" y="85.3" width="1.2" height="36.7" fill="#e6e3de"/>
<rect x="635.2" y="88" width="33.6" height="31.5" rx="2.6" fill="#000"/>
<text x="651.8" y="112.3" font-family="'Liberation Sans',sans-serif" font-size="23.5" fill="#2a6cf8" text-anchor="middle" xml:space="preserve">3</text>
<text x="677.8" y="98" font-family="'DejaVu Sans Condensed','Liberation Sans',sans-serif" font-size="19.7" fill="#101010" xml:space="preserve">On</text>
<rect x="678.7" y="105" width="15.4" height="15.5" fill="#fbfaf7"/>
<rect x="678.7" y="105" width="14.2" height="1.3" fill="#808080"/>
<rect x="678.7" y="105" width="1.3" height="14.3" fill="#808080"/>
<rect x="680" y="106.3" width="12.8" height="1.3" fill="#404040"/>
<rect x="680" y="106.3" width="1.3" height="12.9" fill="#404040"/>
<rect x="681.3" y="118" width="11.5" height="1.2" fill="#d4d0c8"/>
<rect x="691.6" y="107.6" width="1.2" height="11.6" fill="#d4d0c8"/>
<rect x="893.8" y="83.8" width="41.3" height="40.6" fill="#d4d0c8"/>
<rect x="893.8" y="83.8" width="40.1" height="1.5" fill="#fbfaf7"/>
<rect x="893.8" y="83.8" width="1.5" height="39.4" fill="#fbfaf7"/>
<rect x="893.8" y="122" width="41.3" height="2.4" fill="#5e5e5c"/>
<rect x="932.7" y="83.8" width="2.4" height="40.6" fill="#5e5e5c"/>
<rect x="895.3" y="85.3" width="1.2" height="36.7" fill="#e6e3de"/>
<rect x="897.8" y="88" width="33.6" height="31.5" rx="2.6" fill="#000"/>
<text x="914.6" y="112.4" font-family="'Liberation Sans',sans-serif" font-size="24" fill="#ff0040" text-anchor="middle" stroke="#ff0040" stroke-width="0.5" xml:space="preserve">4</text>
<text x="940.4" y="98" font-family="'DejaVu Sans Condensed','Liberation Sans',sans-serif" font-size="19.7" fill="#101010" xml:space="preserve">On</text>
<rect x="941.3" y="105" width="15.4" height="15.5" fill="#fbfaf7"/>
<rect x="941.3" y="105" width="14.2" height="1.3" fill="#808080"/>
<rect x="941.3" y="105" width="1.3" height="14.3" fill="#808080"/>
<rect x="942.6" y="106.3" width="12.8" height="1.3" fill="#404040"/>
<rect x="942.6" y="106.3" width="1.3" height="12.9" fill="#404040"/>
<rect x="943.9" y="118" width="11.5" height="1.2" fill="#d4d0c8"/>
<rect x="954.2" y="107.6" width="1.2" height="11.6" fill="#d4d0c8"/>
<path d="M946.1,112.8 L948.7,115.4 L953.5,110.2" stroke="#000" fill="none" stroke-width="2.5"/>
<rect x="971.1" y="84.7" width="141.7" height="38.6" fill="#fbfaf7"/>
<rect x="971.1" y="84.7" width="140.3" height="1.3" fill="#808080"/>
<rect x="971.1" y="84.7" width="1.3" height="37.2" fill="#808080"/>
<rect x="972.4" y="86" width="139" height="35.9" fill="#000"/>
<rect x="972.4" y="86" width="139" height="1.1" fill="#2a2a2a"/>
<text x="979.7" y="107.3" font-family="'DejaVu Sans Condensed','Liberation Sans',sans-serif" font-size="19.7" fill="#ff0040" textLength="76.3" lengthAdjust="spacingAndGlyphs" stroke="#ff0040" stroke-width="0.15" xml:space="preserve">100 mV/</text>
<rect x="1113.1" y="84.1" width="34.3" height="19.5" fill="#d4d0c8"/>
<rect x="1113.1" y="84.1" width="33.05" height="1.25" fill="#ffffff"/>
<rect x="1113.1" y="84.1" width="1.25" height="18.25" fill="#ffffff"/>
<rect x="1113.1" y="102.35" width="34.3" height="1.25" fill="#404040"/>
<rect x="1146.15" y="84.1" width="1.25" height="19.5" fill="#404040"/>
<rect x="1114.35" y="101.1" width="31.8" height="1.25" fill="#808080"/>
<rect x="1144.9" y="85.35" width="1.25" height="17" fill="#808080"/>
<path d="M1122.25,93.65 L1122.88,92.17 L1123.52,90.8 L1124.15,89.62 L1124.78,88.71 L1125.42,88.14 L1126.05,87.95 L1126.68,88.14 L1127.32,88.71 L1127.95,89.62 L1128.58,90.8 L1129.22,92.17 L1129.85,93.65 L1130.48,95.13 L1131.12,96.5 L1131.75,97.68 L1132.38,98.59 L1133.02,99.16 L1133.65,99.35 L1134.28,99.16 L1134.92,98.59 L1135.55,97.68 L1136.18,96.5 L1136.82,95.13 L1137.45,93.65" stroke="#1c1c1c" fill="none" stroke-width="1.35" stroke-linecap="round"/>
<rect x="1113.1" y="103.6" width="34.3" height="19.3" fill="#d4d0c8"/>
<rect x="1113.1" y="103.6" width="33.05" height="1.25" fill="#ffffff"/>
<rect x="1113.1" y="103.6" width="1.25" height="18.05" fill="#ffffff"/>
<rect x="1113.1" y="121.65" width="34.3" height="1.25" fill="#404040"/>
<rect x="1146.15" y="103.6" width="1.25" height="19.3" fill="#404040"/>
<rect x="1114.35" y="120.4" width="31.8" height="1.25" fill="#808080"/>
<rect x="1144.9" y="104.85" width="1.25" height="16.8" fill="#808080"/>
<path d="M1122.25,113.05 L1122.88,112.45 L1123.52,111.9 L1124.15,111.42 L1124.78,111.06 L1125.42,110.83 L1126.05,110.75 L1126.68,110.83 L1127.32,111.06 L1127.95,111.42 L1128.58,111.9 L1129.22,112.45 L1129.85,113.05 L1130.48,113.65 L1131.12,114.2 L1131.75,114.68 L1132.38,115.04 L1133.02,115.27 L1133.65,115.35 L1134.28,115.27 L1134.92,115.04 L1135.55,114.68 L1136.18,114.2 L1136.82,113.65 L1137.45,113.05" stroke="#1c1c1c" fill="none" stroke-width="1.2" stroke-linecap="round"/>
</g>
<g id="scope">
<rect x="1251.6" y="127.4" width="2.4" height="625.1" fill="#fbfaf7"/>
<rect x="102.8" y="751" width="1151.2" height="1.4" fill="#f1efeb"/>
<rect x="102.6" y="126.2" width="1150" height="1.2" fill="#6a6a68"/>
<rect x="102.8" y="127.4" width="1148.8" height="623.6" fill="#000"/>
<clipPath id="gclip"><rect x="107.6" y="135.1" width="1104.7" height="608.6"/></clipPath>
<path d="M218.07,135.1V743.7M328.54,135.1V743.7M439.01,135.1V743.7M549.48,135.1V743.7M659.95,135.1V743.7M770.42,135.1V743.7M880.89,135.1V743.7M991.36,135.1V743.7M1101.83,135.1V743.7M107.6,211.18H1212.3M107.6,287.25H1212.3M107.6,363.33H1212.3M107.6,439.4H1212.3M107.6,515.48H1212.3M107.6,591.55H1212.3M107.6,667.62H1212.3" stroke="#a4a4a4" fill="none" stroke-width="1.15" stroke-dasharray="1.1 1.37" opacity="0.52"/>
<path d="M656.85,154.12h6.2M656.85,173.14h6.2M656.85,192.16h6.2M656.85,211.18h6.2M656.85,230.19h6.2M656.85,249.21h6.2M656.85,268.23h6.2M656.85,287.25h6.2M656.85,306.27h6.2M656.85,325.29h6.2M656.85,344.31h6.2M656.85,363.33h6.2M656.85,382.34h6.2M656.85,401.36h6.2M656.85,420.38h6.2M656.85,458.42h6.2M656.85,477.44h6.2M656.85,496.46h6.2M656.85,515.48h6.2M656.85,534.49h6.2M656.85,553.51h6.2M656.85,572.53h6.2M656.85,591.55h6.2M656.85,610.57h6.2M656.85,629.59h6.2M656.85,648.61h6.2M656.85,667.62h6.2M656.85,686.64h6.2M656.85,705.66h6.2M656.85,724.68h6.2" stroke="#707070" fill="none" stroke-width="1.4"/>
<path d="M129.69,436.1v6.6M151.79,436.1v6.6M173.88,436.1v6.6M195.98,436.1v6.6M218.07,436.1v6.6M240.16,436.1v6.6M262.26,436.1v6.6M284.35,436.1v6.6M306.45,436.1v6.6M328.54,436.1v6.6M350.63,436.1v6.6M372.73,436.1v6.6M394.82,436.1v6.6M416.92,436.1v6.6M439.01,436.1v6.6M461.1,436.1v6.6M483.2,436.1v6.6M505.29,436.1v6.6M527.39,436.1v6.6M549.48,436.1v6.6M571.57,436.1v6.6M593.67,436.1v6.6M615.76,436.1v6.6M637.86,436.1v6.6M682.04,436.1v6.6M704.14,436.1v6.6M726.23,436.1v6.6M748.33,436.1v6.6M770.42,436.1v6.6M792.51,436.1v6.6M814.61,436.1v6.6M836.7,436.1v6.6M858.8,436.1v6.6M880.89,436.1v6.6M902.98,436.1v6.6M925.08,436.1v6.6M947.17,436.1v6.6M969.27,436.1v6.6M991.36,436.1v6.6M1013.45,436.1v6.6M1035.55,436.1v6.6M1057.64,436.1v6.6M1079.74,436.1v6.6M1101.83,436.1v6.6M1123.92,436.1v6.6M1146.02,436.1v6.6M1168.11,436.1v6.6M1190.21,436.1v6.6" stroke="#707070" fill="none" stroke-width="1.7"/>
<g clip-path="url(#gclip)">
<path d="M-154.1,647.6V253M21.4,228.5V612M199.5,647.6V253M375,228.5V612M553.1,647.6V253M728.6,228.5V612M906.7,647.6V253M1082.2,228.5V612M1260.3,647.6V253M1435.8,228.5V612" stroke="#a08c00" fill="none" stroke-width="1.2"/>
<path d="M-153.8,250.95 -152.8,250.57 -151.81,249.25 -150.81,248.91 -149.81,248.72 -148.81,247.82 -147.82,247.5 -146.82,246.79 -145.82,246.89 -144.83,247.07 -143.83,247.22 -142.83,247.32 -141.83,246.79 -140.84,246.4 -139.84,246.67 -138.84,247.42 -137.85,246.6 -136.85,246.9 -135.85,247.49 -134.85,246.43 -133.86,247.14 -132.86,247.59 -131.86,246.75 -130.87,247.16 -129.87,247.62 -128.87,246.72 -127.87,247.22 -126.88,247.52 -125.88,247.45 -124.88,247.24 -123.89,246.95 -122.89,247.33 -121.89,247.21 -120.89,247.37 -119.9,247.27 -118.9,247.86 -117.9,247.81 -116.91,247.29 -115.91,247.63 -114.91,247.31 -113.91,247.55 -112.92,247.46 -111.92,247.85 -110.92,247.54 -109.93,247.68 -108.93,248.02 -107.93,247.68 -106.93,248.3 -105.94,247.46 -104.94,248.16 -103.94,247.81 -102.94,247.85 -101.95,248.13 -100.95,248.02 -99.95,247.92 -98.96,247.46 -97.96,247.59 -96.96,248.37 -95.96,248.17 -94.97,248.41 -93.97,248.75 -92.97,248.45 -91.98,247.73 -90.98,248.06 -89.98,248.43 -88.98,248.04 -87.99,248.94 -86.99,248.95 -85.99,248.86 -85,248.44 -84,248.91 -83,248.09 -82,248.33 -81.01,248.55 -80.01,248.91 -79.01,248.64 -78.02,248.25 -77.02,248.52 -76.02,248.53 -75.02,248.53 -74.03,248.4 -73.03,248.73 -72.03,248.8 -71.04,249.22 -70.04,249.28 -69.04,248.98 -68.04,248.93 -67.05,249.35 -66.05,249.51 -65.05,249.28 -64.06,249.46 -63.06,249.66 -62.06,248.61 -61.06,249.64 -60.07,248.95 -59.07,249.22 -58.07,249.64 -57.08,249.57 -56.08,248.92 -55.08,249.56 -54.08,248.88 -53.09,249.26 -52.09,249.84 -51.09,249.4 -50.1,249.64 -49.1,249.82 -48.1,249.97 -47.1,249.92 -46.11,249.05 -45.11,249.57 -44.11,249.66 -43.12,249.2 -42.12,249.81 -41.12,249.92 -40.12,250.21 -39.13,250.38 -38.13,249.43 -37.13,249.59 -36.14,250.13 -35.14,249.53 -34.14,249.67 -33.14,250.12 -32.15,249.66 -31.15,250.43 -30.15,250.55 -29.16,249.59 -28.16,250.22 -27.16,250.56 -26.16,250.81 -25.17,250 -24.17,249.9 -23.17,250.78 -22.18,250.85 -21.18,250.02 -20.18,250.35 -19.18,250.71 -18.19,250.89 -17.19,250.11 -16.19,250.74 -15.19,250.94 -14.2,250.66 -13.2,250.22 -12.2,250.1 -11.21,250.42 -10.21,251.09 -9.21,250.2 -8.21,250.19 -7.22,250.64 -6.22,250.31 -5.22,250.45 -4.23,250.32 -3.23,250.96 -2.23,251.19 -1.23,250.9 -0.24,250.58 0.76,250.84 1.76,251.18 2.75,251.63 3.75,251.73 4.75,250.86 5.75,250.61 6.74,251.62 7.74,251.77 8.74,251.24 9.73,251.64 10.73,251.78 11.73,251.51 12.73,251.85 13.72,250.86 14.72,251.19 15.72,251.23 16.71,251.07 17.71,252.05 18.71,251.02 19.71,251.82 20.7,251.13 21.7,251.51 21.7,260.33 20.7,259.96 19.71,259.35 18.71,260.17 17.71,259.59 16.71,259.88 15.72,259.38 14.72,260.26 13.72,260.14 12.73,259.24 11.73,259.96 10.73,259.83 9.73,259.6 8.74,260.13 7.74,259.37 6.74,259.12 5.75,259.7 4.75,258.88 3.75,259.83 2.75,258.87 1.76,259.73 0.76,258.79 -0.24,259.35 -1.23,259.76 -2.23,259.04 -3.23,259.75 -4.23,258.85 -5.22,258.69 -6.22,259.11 -7.22,258.74 -8.21,259.41 -9.21,258.9 -10.21,259.21 -11.21,258.67 -12.2,259.36 -13.2,258.93 -14.2,258.88 -15.19,258.63 -16.19,258.35 -17.19,259.07 -18.19,259.22 -19.18,259.19 -20.18,259.12 -21.18,258.57 -22.18,258.79 -23.17,259.02 -24.17,259.07 -25.17,258.61 -26.16,258.41 -27.16,257.97 -28.16,259.08 -29.16,257.86 -30.15,258.38 -31.15,258.91 -32.15,258.67 -33.14,257.99 -34.14,257.84 -35.14,258.28 -36.14,257.75 -37.13,258.75 -38.13,257.64 -39.13,257.61 -40.12,257.71 -41.12,257.67 -42.12,257.59 -43.12,257.54 -44.11,258.03 -45.11,258.25 -46.11,257.77 -47.1,258.43 -48.1,257.33 -49.1,257.89 -50.1,258.37 -51.09,257.35 -52.09,258.09 -53.09,257.33 -54.08,258.18 -55.08,257.43 -56.08,257.23 -57.08,257.5 -58.07,258.14 -59.07,257.25 -60.07,256.99 -61.06,257.29 -62.06,257.63 -63.06,257.9 -64.06,257.19 -65.05,257.82 -66.05,257.18 -67.05,257.16 -68.04,257.56 -69.04,256.71 -70.04,256.76 -71.04,257.77 -72.03,256.97 -73.03,257.25 -74.03,257.58 -75.02,257.15 -76.02,257.35 -77.02,256.45 -78.02,256.78 -79.01,257.02 -80.01,256.39 -81.01,257.37 -82,256.81 -83,256.88 -84,257.11 -85,256.55 -85.99,256.92 -86.99,256.23 -87.99,257.09 -88.98,257.12 -89.98,256.53 -90.98,257.01 -91.98,256.27 -92.97,256.69 -93.97,256.52 -94.97,256.22 -95.96,256.54 -96.96,256.81 -97.96,255.96 -98.96,256.7 -99.95,256.01 -100.95,256.45 -101.95,256.64 -102.94,256.46 -103.94,255.73 -104.94,256.11 -105.94,256.1 -106.93,256.59 -107.93,255.6 -108.93,256.17 -109.93,255.72 -110.92,255.76 -111.92,255.59 -112.92,256.25 -113.91,256.07 -114.91,256.26 -115.91,256.43 -116.91,255.26 -117.9,255.9 -118.9,255.67 -119.9,256.27 -120.89,256.26 -121.89,255.24 -122.89,255.82 -123.89,255.86 -124.88,255.78 -125.88,255.29 -126.88,255.64 -127.87,256.03 -128.87,255.75 -129.87,254.91 -130.87,255.71 -131.86,255.49 -132.86,255.53 -133.86,255.18 -134.85,255.81 -135.85,255.28 -136.85,254.99 -137.85,255.18 -138.84,254.91 -139.84,255.06 -140.84,254.75 -141.83,255.63 -142.83,255.76 -143.83,254.95 -144.83,255.22 -145.82,255.29 -146.82,255.24 -147.82,255.39 -148.81,256.36 -149.81,256.22 -150.81,256.99 -151.81,257.65 -152.8,258.15 -153.8,259.66ZM199.8,251.49 200.8,250.27 201.79,249.14 202.79,248.57 203.79,248.59 204.79,248.28 205.78,247.98 206.78,246.99 207.78,247.33 208.77,247.39 209.77,246.79 210.77,246.93 211.77,247.36 212.76,247.17 213.76,247.19 214.76,246.42 215.75,246.4 216.75,247.18 217.75,247.06 218.75,246.61 219.74,246.43 220.74,246.73 221.74,247.22 222.73,246.94 223.73,247.31 224.73,246.74 225.73,247.37 226.72,246.75 227.72,247.72 228.72,246.99 229.71,246.71 230.71,247.7 231.71,247.15 232.71,247.29 233.7,247 234.7,247.1 235.7,247.36 236.69,247.27 237.69,247.55 238.69,247.3 239.69,247.53 240.68,247.07 241.68,247.67 242.68,247.82 243.68,248.2 244.67,248.01 245.67,247.28 246.67,247.65 247.66,248.16 248.66,248.14 249.66,247.37 250.66,247.37 251.65,247.96 252.65,247.93 253.65,247.59 254.64,247.77 255.64,247.9 256.64,248.46 257.64,247.86 258.63,248.54 259.63,248.61 260.63,247.93 261.62,248.69 262.62,247.79 263.62,248.18 264.62,247.87 265.61,248.17 266.61,248.15 267.61,248.76 268.6,248.87 269.6,248.3 270.6,248.34 271.6,249.12 272.59,248.19 273.59,248.59 274.59,248.76 275.58,248.87 276.58,248.3 277.58,248.52 278.58,248.35 279.57,249.11 280.57,249.11 281.57,249.25 282.56,248.81 283.56,248.34 284.56,249.43 285.56,248.51 286.55,248.68 287.55,248.48 288.55,248.95 289.54,249.33 290.54,249.65 291.54,249.22 292.54,248.7 293.53,249.68 294.53,248.77 295.53,248.93 296.52,248.97 297.52,249.8 298.52,249.26 299.52,249.81 300.51,249.5 301.51,249.43 302.51,249.83 303.5,249.17 304.5,249.28 305.5,250.07 306.5,249.73 307.49,249.5 308.49,249.82 309.49,250 310.48,249.98 311.48,249.77 312.48,249.94 313.48,249.5 314.47,249.83 315.47,250.34 316.47,250.41 317.46,249.37 318.46,249.67 319.46,249.71 320.46,249.82 321.45,249.82 322.45,249.83 323.45,250.09 324.44,249.84 325.44,250.45 326.44,249.64 327.44,250.79 328.43,249.89 329.43,250.77 330.43,250.54 331.43,250.82 332.42,250.31 333.42,250.21 334.42,250.58 335.41,250.11 336.41,250.41 337.41,250.59 338.41,250.12 339.4,250.96 340.4,250.58 341.4,250.7 342.39,250.9 343.39,251.19 344.39,250.31 345.39,250.41 346.38,250.35 347.38,251.39 348.38,250.78 349.37,251.16 350.37,250.53 351.37,251.47 352.37,250.54 353.36,251.23 354.36,250.48 355.36,251.51 356.35,250.97 357.35,251.29 358.35,251.28 359.35,250.84 360.34,251.17 361.34,250.66 362.34,251.63 363.33,251.26 364.33,251.08 365.33,251.25 366.33,251.29 367.32,251.03 368.32,251.3 369.32,251.71 370.31,251.6 371.31,252.14 372.31,251.88 373.31,252.01 374.3,251.22 375.3,251.7 375.3,260.37 374.3,259.75 373.31,260.39 372.31,260.32 371.31,259.63 370.31,259.54 369.32,259.54 368.32,260.19 367.32,260.05 366.33,259.78 365.33,259.65 364.33,259.52 363.33,259.55 362.34,259.92 361.34,259.48 360.34,259.09 359.35,259.49 358.35,259.53 357.35,259.06 356.35,259.73 355.36,259.77 354.36,259.61 353.36,259.61 352.37,259.5 351.37,259.34 350.37,258.95 349.37,259.64 348.38,258.68 347.38,259.2 346.38,259.56 345.39,258.74 344.39,259.1 343.39,259.41 342.39,258.56 341.4,259.42 340.4,258.74 339.4,258.92 338.41,258.67 337.41,258.64 336.41,258.21 335.41,258.36 334.42,258.74 333.42,258.57 332.42,258.94 331.43,258.99 330.43,258.14 329.43,259.06 328.43,258.59 327.44,258.78 326.44,258.81 325.44,259.03 324.44,258.51 323.45,257.9 322.45,258.46 321.45,258.31 320.46,258.17 319.46,257.75 318.46,257.79 317.46,258.23 316.47,258.78 315.47,258.16 314.47,258.27 313.48,258.45 312.48,258.23 311.48,258.37 310.48,258.56 309.49,258.28 308.49,258.32 307.49,257.41 306.5,258.23 305.5,258.08 304.5,258.34 303.5,258.38 302.51,258.03 301.51,258.16 300.51,257.69 299.52,258.07 298.52,257.17 297.52,257.82 296.52,258.18 295.53,257.34 294.53,257.79 293.53,257.62 292.54,257.88 291.54,257.16 290.54,257.82 289.54,257.28 288.55,257.02 287.55,256.83 286.55,257.58 285.56,256.89 284.56,257.36 283.56,257.37 282.56,257.21 281.57,256.98 280.57,257.1 279.57,257.01 278.58,256.95 277.58,257.56 276.58,257.32 275.58,257.31 274.59,257.38 273.59,256.55 272.59,256.96 271.6,256.98 270.6,257.08 269.6,256.85 268.6,257.03 267.61,256.38 266.61,256.27 265.61,256.18 264.62,256.12 263.62,257.01 262.62,256.9 261.62,256.93 260.63,256.76 259.63,256.67 258.63,256.51 257.64,256.04 256.64,256.98 255.64,256.22 254.64,256.82 253.65,256.09 252.65,255.92 251.65,256.25 250.66,256.19 249.66,256.36 248.66,255.62 247.66,255.58 246.67,256.31 245.67,256.35 244.67,256.65 243.68,256.2 242.68,255.77 241.68,256.33 240.68,256.46 239.69,256.45 238.69,255.33 237.69,256.18 236.69,255.31 235.7,255.97 234.7,255.75 233.7,255.88 232.71,255.17 231.71,255.28 230.71,255.82 229.71,255.31 228.72,255.6 227.72,255.3 226.72,255.85 225.73,255.16 224.73,255.29 223.73,255.58 222.73,255.17 221.74,255.68 220.74,255.27 219.74,255.36 218.75,254.96 217.75,254.74 216.75,254.88 215.75,254.91 214.76,255.49 213.76,255.6 212.76,255.82 211.77,255.81 210.77,255.4 209.77,255.89 208.77,255.87 207.78,255.37 206.78,256.19 205.78,255.64 204.79,255.95 203.79,256.34 202.79,257.03 201.79,257.42 200.8,258.22 199.8,259.45ZM553.4,251.7 554.4,250.06 555.39,249.05 556.39,248.3 557.39,247.65 558.39,247.32 559.38,247.11 560.38,247.06 561.38,247.71 562.37,246.65 563.37,246.93 564.37,246.59 565.37,246.84 566.36,246.36 567.36,246.65 568.36,246.63 569.35,246.98 570.35,246.37 571.35,246.97 572.35,246.51 573.34,247.47 574.34,246.96 575.34,247.39 576.33,247.5 577.33,246.91 578.33,247.53 579.33,247.24 580.32,247.6 581.32,247.61 582.32,246.87 583.31,247.49 584.31,247.23 585.31,246.8 586.31,247.08 587.3,247.08 588.3,247.52 589.3,247.31 590.29,247.13 591.29,247.89 592.29,247.17 593.29,247.9 594.28,247.89 595.28,247.27 596.28,247.93 597.27,247.95 598.27,247.96 599.27,248.34 600.27,248.33 601.26,247.78 602.26,247.65 603.26,247.44 604.26,247.73 605.25,248.14 606.25,248.4 607.25,247.6 608.24,248.08 609.24,247.67 610.24,248.56 611.24,248.64 612.23,247.68 613.23,247.7 614.23,248.64 615.22,248.19 616.22,248.13 617.22,248.9 618.22,248.84 619.21,248.07 620.21,248.13 621.21,248.95 622.2,248.99 623.2,248.43 624.2,248.44 625.2,248.9 626.19,248.15 627.19,248.4 628.19,248.15 629.18,248.27 630.18,248.28 631.18,248.54 632.18,249.08 633.17,249.32 634.17,248.47 635.17,248.47 636.16,248.95 637.16,249.12 638.16,249.28 639.16,249.03 640.15,249.49 641.15,248.64 642.15,249.03 643.14,248.66 644.14,249.71 645.14,249.75 646.14,249.34 647.13,249.59 648.13,249.33 649.13,249.83 650.12,249.64 651.12,249.37 652.12,249.33 653.12,249.64 654.11,249.01 655.11,249.36 656.11,248.99 657.1,249.4 658.1,250.05 659.1,249.59 660.1,249.89 661.09,249.15 662.09,249.12 663.09,249.36 664.08,250.09 665.08,249.42 666.08,249.36 667.08,250.1 668.07,249.93 669.07,249.47 670.07,249.92 671.06,249.62 672.06,249.83 673.06,250.03 674.06,250.6 675.05,249.92 676.05,249.67 677.05,250.32 678.04,250.56 679.04,250.56 680.04,249.91 681.04,250.72 682.03,249.83 683.03,249.86 684.03,250.64 685.03,250.62 686.02,250.41 687.02,250.66 688.02,250.19 689.01,251.01 690.01,250.39 691.01,250.86 692.01,251.03 693,250.61 694,250.03 695,250.98 695.99,251.23 696.99,250.39 697.99,251.33 698.99,250.24 699.98,251.08 700.98,251.33 701.98,251.41 702.97,250.34 703.97,251.44 704.97,251.24 705.97,251.41 706.96,251.12 707.96,250.72 708.96,251.26 709.95,251.38 710.95,250.87 711.95,251.2 712.95,251.57 713.94,251.56 714.94,251.1 715.94,251.53 716.93,251.77 717.93,251.77 718.93,250.87 719.93,251.18 720.92,251.15 721.92,251.42 722.92,251.13 723.91,251.12 724.91,251.86 725.91,251.51 726.91,251.31 727.9,251.22 728.9,251.49 728.9,259.84 727.9,259.9 726.91,260.34 725.91,259.49 724.91,259.39 723.91,259.96 722.92,259.25 721.92,259.2 720.92,260.04 719.93,259.95 718.93,259.34 717.93,260.13 716.93,259.32 715.94,259.61 714.94,259.55 713.94,259.05 712.95,259.03 711.95,259.99 710.95,259.88 709.95,259.45 708.96,258.93 707.96,259.71 706.96,259.81 705.97,259.13 704.97,259.62 703.97,259.16 702.97,258.82 701.98,259.13 700.98,259.63 699.98,259.57 698.99,258.93 697.99,259.09 696.99,258.86 695.99,259.52 695,258.96 694,259.07 693,258.8 692.01,258.35 691.01,258.82 690.01,258.94 689.01,258.71 688.02,259.01 687.02,259.22 686.02,258.33 685.03,258.69 684.03,258.05 683.03,258.87 682.03,258.2 681.04,258.33 680.04,258.65 679.04,258.95 678.04,258.14 677.05,258.61 676.05,258.59 675.05,258.61 674.06,258.59 673.06,258.04 672.06,258.78 671.06,258.36 670.07,258.27 669.07,258.7 668.07,258.52 667.08,258.13 666.08,258.49 665.08,258.33 664.08,257.51 663.09,258.44 662.09,257.53 661.09,258.45 660.1,258.21 659.1,257.37 658.1,257.79 657.1,257.85 656.11,257.29 655.11,257.88 654.11,257.41 653.12,257.89 652.12,258.08 651.12,257.99 650.12,257.05 649.13,257.05 648.13,257.95 647.13,257.42 646.14,257.63 645.14,257.24 644.14,257.04 643.14,257.15 642.15,256.94 641.15,257.63 640.15,257.83 639.16,256.81 638.16,256.84 637.16,257.14 636.16,257.49 635.17,257.29 634.17,257.48 633.17,256.61 632.18,256.49 631.18,257.05 630.18,257.03 629.18,257.5 628.19,257.23 627.19,257.17 626.19,257.4 625.2,256.6 624.2,257.15 623.2,256.71 622.2,256.7 621.21,256.17 620.21,256.95 619.21,256.68 618.22,257.01 617.22,256.87 616.22,256.26 615.22,257.13 614.23,257.06 613.23,256.66 612.23,256.58 611.24,256.59 610.24,255.88 609.24,256.87 608.24,255.9 607.25,256.16 606.25,256.54 605.25,256.4 604.26,255.86 603.26,256.62 602.26,256.32 601.26,256.24 600.27,256.1 599.27,255.99 598.27,256.4 597.27,255.53 596.28,256.54 595.28,256.33 594.28,256.07 593.29,256.44 592.29,255.68 591.29,256.04 590.29,255.41 589.3,255.75 588.3,255.49 587.3,255.61 586.31,255.98 585.31,255.16 584.31,255.35 583.31,255.74 582.32,254.99 581.32,256.1 580.32,256.06 579.33,255.33 578.33,255.57 577.33,254.84 576.33,254.86 575.34,255.32 574.34,255 573.34,254.94 572.35,255.2 571.35,254.96 570.35,255.78 569.35,254.72 568.36,255.02 567.36,255.54 566.36,254.84 565.37,255.31 564.37,254.71 563.37,255.61 562.37,254.86 561.38,255.15 560.38,255.25 559.38,256.05 558.39,255.52 557.39,257.03 556.39,257.3 555.39,258.01 554.4,258.68 553.4,260.12ZM907,251.52 908,250.1 908.99,249.67 909.99,248.32 910.99,248.6 911.99,248.01 912.98,246.97 913.98,247.56 914.98,247.05 915.97,247.5 916.97,246.82 917.97,247.31 918.97,246.42 919.96,247.03 920.96,246.46 921.96,247.39 922.95,246.69 923.95,247.31 924.95,247.29 925.95,246.73 926.94,246.89 927.94,247.62 928.94,247.05 929.93,246.63 930.93,247.58 931.93,247.43 932.93,247.48 933.92,246.81 934.92,247.26 935.92,247.02 936.91,247.57 937.91,246.99 938.91,247.91 939.91,247.07 940.9,247.59 941.9,247.43 942.9,248.01 943.89,247.76 944.89,247.49 945.89,247.48 946.89,247.37 947.88,247.98 948.88,247.45 949.88,248.03 950.88,247.35 951.87,248.03 952.87,248.22 953.87,248.09 954.86,247.56 955.86,248.21 956.86,248.05 957.86,247.59 958.85,248.48 959.85,248.16 960.85,248.21 961.84,247.74 962.84,247.64 963.84,248.04 964.84,248.56 965.83,247.96 966.83,248.55 967.83,247.67 968.82,248.66 969.82,248.74 970.82,247.76 971.82,248.46 972.81,248.39 973.81,248.83 974.81,248.29 975.8,248.32 976.8,248.2 977.8,248.09 978.8,248.46 979.79,248.62 980.79,248.94 981.79,248.86 982.78,249.05 983.78,248.57 984.78,249.15 985.78,248.29 986.77,249.26 987.77,248.42 988.77,248.72 989.76,248.3 990.76,248.79 991.76,248.44 992.76,249.27 993.75,248.92 994.75,249.27 995.75,249.31 996.74,249.14 997.74,248.7 998.74,248.88 999.74,249.74 1000.73,249.28 1001.73,248.82 1002.73,249.61 1003.72,249.44 1004.72,249.85 1005.72,249.07 1006.72,248.95 1007.71,249.37 1008.71,249.14 1009.71,250.05 1010.7,249.67 1011.7,250.13 1012.7,249.65 1013.7,249.9 1014.69,250.17 1015.69,250.15 1016.69,250.27 1017.68,249.29 1018.68,249.21 1019.68,249.34 1020.68,249.97 1021.67,250.11 1022.67,249.72 1023.67,249.58 1024.66,250.29 1025.66,250.25 1026.66,250.01 1027.66,250.56 1028.65,249.76 1029.65,250.35 1030.65,249.7 1031.64,250.06 1032.64,249.66 1033.64,249.81 1034.64,250.4 1035.63,250.69 1036.63,250.12 1037.63,250.82 1038.62,250.33 1039.62,250.29 1040.62,250.62 1041.62,251.01 1042.61,250.75 1043.61,250.73 1044.61,250.93 1045.61,250.29 1046.6,250.69 1047.6,250.39 1048.6,250.7 1049.59,250.51 1050.59,250.75 1051.59,250.6 1052.59,250.74 1053.58,251.12 1054.58,251.17 1055.58,251.07 1056.57,250.87 1057.57,250.89 1058.57,250.51 1059.57,250.99 1060.56,251.1 1061.56,251.03 1062.56,251.15 1063.55,251.32 1064.55,251.45 1065.55,250.79 1066.55,250.98 1067.54,251.76 1068.54,250.67 1069.54,251.6 1070.53,251.23 1071.53,251.42 1072.53,251.3 1073.53,251.7 1074.52,251.4 1075.52,251.84 1076.52,251.11 1077.51,251.2 1078.51,252.01 1079.51,251.92 1080.51,251.63 1081.5,251.67 1082.5,251.26 1082.5,259.79 1081.5,259.87 1080.51,260.36 1079.51,259.59 1078.51,259.49 1077.51,259.28 1076.52,260.01 1075.52,259.83 1074.52,259.62 1073.53,259.81 1072.53,260.21 1071.53,259.71 1070.53,259.56 1069.54,259.79 1068.54,259.62 1067.54,259.76 1066.55,259.07 1065.55,259.05 1064.55,259.27 1063.55,259.18 1062.56,259.53 1061.56,259.69 1060.56,258.75 1059.57,259.18 1058.57,259.5 1057.57,259.54 1056.57,259.24 1055.58,259.33 1054.58,259.17 1053.58,259.25 1052.59,259.09 1051.59,258.71 1050.59,258.46 1049.59,259.28 1048.6,259.36 1047.6,259.12 1046.6,258.86 1045.61,259.31 1044.61,258.83 1043.61,258.93 1042.61,258.33 1041.62,259.08 1040.62,258.61 1039.62,258.89 1038.62,258.46 1037.63,258.38 1036.63,258.19 1035.63,258.69 1034.64,258.59 1033.64,258.2 1032.64,258.91 1031.64,258.94 1030.65,258.71 1029.65,257.97 1028.65,258.82 1027.66,258.64 1026.66,258.13 1025.66,258.05 1024.66,257.72 1023.67,258.45 1022.67,257.75 1021.67,258.29 1020.68,257.9 1019.68,257.9 1018.68,257.78 1017.68,258.53 1016.69,258.3 1015.69,258.2 1014.69,257.93 1013.7,257.86 1012.7,257.99 1011.7,257.67 1010.7,257.82 1009.71,257.4 1008.71,257.52 1007.71,258.28 1006.72,257.61 1005.72,257.34 1004.72,257.9 1003.72,257.5 1002.73,257.96 1001.73,257.63 1000.73,257.82 999.74,257.81 998.74,257.53 997.74,256.91 996.74,257.22 995.75,257.87 994.75,257.58 993.75,256.74 992.76,257.26 991.76,256.85 990.76,256.95 989.76,257.55 988.77,256.96 987.77,257.72 986.77,257.41 985.78,257.27 984.78,257.05 983.78,256.99 982.78,256.42 981.79,257.42 980.79,256.7 979.79,256.44 978.8,257.21 977.8,256.92 976.8,257.07 975.8,256.81 974.81,256.95 973.81,256.56 972.81,257.04 971.82,256.95 970.82,256.48 969.82,256.34 968.82,256.66 967.83,256.6 966.83,256.12 965.83,256.04 964.84,256.56 963.84,256.15 962.84,255.8 961.84,255.79 960.85,256.63 959.85,256.66 958.85,256.62 957.86,256.39 956.86,255.96 955.86,255.86 954.86,255.63 953.87,255.63 952.87,256.05 951.87,256.59 950.88,255.9 949.88,256.09 948.88,256.05 947.88,256.28 946.89,255.7 945.89,256.1 944.89,255.66 943.89,256.21 942.9,256.15 941.9,255.47 940.9,255.3 939.91,256.13 938.91,256.03 937.91,255.17 936.91,255.71 935.92,255.76 934.92,255.44 933.92,255.37 932.93,255.98 931.93,255.58 930.93,255.42 929.93,255.2 928.94,254.97 927.94,255.53 926.94,255.34 925.95,255.71 924.95,254.7 923.95,255.18 922.95,255.57 921.96,254.86 920.96,255.29 919.96,255.62 918.97,254.7 917.97,254.74 916.97,255.59 915.97,255.34 914.98,255.22 913.98,255.73 912.98,256.15 911.99,255.96 910.99,256.15 909.99,256.95 908.99,257.73 908,259.07 907,259.75ZM1260.6,251.02 1261.6,250.37 1262.59,249.32 1263.59,248.59 1264.59,248.12 1265.59,247.28 1266.58,247.63 1267.58,246.85 1268.58,247.24 1269.57,246.66 1270.57,247.46 1271.57,246.82 1272.57,247.31 1273.56,246.35 1274.56,247.44 1275.56,246.77 1276.55,247.54 1277.55,247.39 1278.55,246.64 1279.55,246.53 1280.54,246.73 1281.54,246.89 1282.54,246.86 1283.53,247.66 1284.53,247.22 1285.53,247.47 1286.53,247.27 1287.52,247.29 1288.52,246.81 1289.52,247.38 1290.51,247.75 1291.51,247.23 1292.51,247.81 1293.51,247.37 1294.5,247.56 1295.5,246.89 1296.5,247.74 1297.49,247.87 1298.49,247.89 1299.49,248.04 1300.49,247.53 1301.48,248.18 1302.48,247.45 1303.48,248.07 1304.48,247.86 1305.47,248.35 1306.47,247.79 1307.47,247.88 1308.46,247.61 1309.46,247.75 1310.46,248.49 1311.46,248.23 1312.45,248.14 1313.45,248.57 1314.45,248.21 1315.44,247.62 1316.44,247.56 1317.44,247.54 1318.44,248.65 1319.43,248.64 1320.43,248.7 1321.43,247.77 1322.42,248.64 1323.42,248.14 1324.42,247.9 1325.42,248.21 1326.41,247.92 1327.41,248.14 1328.41,248.02 1329.4,248.4 1330.4,248.26 1331.4,248.51 1332.4,248.12 1333.39,248.98 1334.39,249.03 1335.39,248.16 1336.38,249.16 1337.38,248.21 1338.38,248.25 1339.38,248.67 1340.37,249.36 1341.37,248.64 1342.37,248.97 1343.36,248.7 1344.36,249.46 1345.36,248.77 1346.36,248.84 1347.35,249.19 1348.35,248.78 1349.35,248.81 1350.34,248.64 1351.34,249.15 1352.34,249.37 1353.34,249.09 1354.33,249.7 1355.33,248.96 1356.33,249.5 1357.32,249.47 1358.32,249.43 1359.32,249.04 1360.32,249.71 1361.31,249.64 1362.31,250.05 1363.31,249.74 1364.3,249.24 1365.3,249.12 1366.3,249.75 1367.3,250.18 1368.29,249.17 1369.29,249.42 1370.29,249.15 1371.28,249.31 1372.28,249.22 1373.28,249.57 1374.28,249.45 1375.27,249.27 1376.27,249.38 1377.27,250.12 1378.26,249.76 1379.26,249.57 1380.26,250.44 1381.26,249.95 1382.25,250.62 1383.25,250.37 1384.25,249.93 1385.24,250.11 1386.24,250.24 1387.24,250.31 1388.24,250.61 1389.23,249.77 1390.23,250.81 1391.23,249.82 1392.23,250.68 1393.22,250.79 1394.22,249.98 1395.22,250.94 1396.21,250.75 1397.21,250.52 1398.21,250.73 1399.21,250.26 1400.2,250.71 1401.2,250.66 1402.2,250.98 1403.19,250.67 1404.19,250.31 1405.19,250.94 1406.19,251.01 1407.18,250.61 1408.18,250.74 1409.18,250.46 1410.17,251.48 1411.17,250.35 1412.17,250.85 1413.17,251.19 1414.16,251.21 1415.16,251.1 1416.16,251.2 1417.15,251.34 1418.15,251.34 1419.15,251.09 1420.15,251.29 1421.14,251.77 1422.14,251.74 1423.14,250.8 1424.13,251.19 1425.13,251.28 1426.13,250.99 1427.13,251.79 1428.12,250.97 1429.12,251.03 1430.12,251.61 1431.11,251.32 1432.11,251.07 1433.11,251.82 1434.11,252.06 1435.1,251.36 1436.1,252.2 1436.1,259.67 1435.1,260.4 1434.11,260.29 1433.11,259.58 1432.11,259.44 1431.11,260.13 1430.12,259.45 1429.12,260.17 1428.12,260.04 1427.13,259.21 1426.13,259.09 1425.13,259.13 1424.13,259.06 1423.14,259.8 1422.14,259.43 1421.14,259.73 1420.15,259.71 1419.15,259.77 1418.15,259.92 1417.15,259.44 1416.16,259.03 1415.16,259.94 1414.16,259.85 1413.17,259.16 1412.17,259.18 1411.17,259.62 1410.17,259.5 1409.18,259.73 1408.18,259.19 1407.18,258.81 1406.19,259.18 1405.19,258.45 1404.19,258.94 1403.19,258.84 1402.2,258.72 1401.2,259.01 1400.2,259.21 1399.21,259.1 1398.21,259.33 1397.21,258.29 1396.21,258.36 1395.22,258.86 1394.22,258.48 1393.22,259.03 1392.23,258.65 1391.23,258.29 1390.23,258.19 1389.23,258.82 1388.24,258.16 1387.24,258.09 1386.24,258.51 1385.24,258.54 1384.25,258.45 1383.25,258.07 1382.25,258.55 1381.26,258.47 1380.26,258.15 1379.26,258.1 1378.26,258.17 1377.27,258.59 1376.27,257.86 1375.27,258.43 1374.28,258.06 1373.28,258.11 1372.28,258.43 1371.28,257.89 1370.29,258.2 1369.29,257.9 1368.29,258.23 1367.3,258.02 1366.3,257.46 1365.3,257.43 1364.3,257.94 1363.31,257.91 1362.31,257.24 1361.31,257.45 1360.32,257.22 1359.32,257.18 1358.32,257.95 1357.32,257.2 1356.33,257.74 1355.33,257.33 1354.33,257.31 1353.34,258.02 1352.34,256.91 1351.34,257.41 1350.34,257.06 1349.35,257.77 1348.35,257.9 1347.35,257.65 1346.36,256.81 1345.36,257 1344.36,257.69 1343.36,257.29 1342.37,257.45 1341.37,256.99 1340.37,256.78 1339.38,256.6 1338.38,257.53 1337.38,256.5 1336.38,257.43 1335.39,256.4 1334.39,257.13 1333.39,257.05 1332.4,256.67 1331.4,257.12 1330.4,257.36 1329.4,256.26 1328.41,256.26 1327.41,257.22 1326.41,256.87 1325.42,256.74 1324.42,256.97 1323.42,256.73 1322.42,256.83 1321.43,256.19 1320.43,255.94 1319.43,256.69 1318.44,256.85 1317.44,256.68 1316.44,256.72 1315.44,256.4 1314.45,255.99 1313.45,256.62 1312.45,256.47 1311.46,256.67 1310.46,255.77 1309.46,256.1 1308.46,256.44 1307.47,255.65 1306.47,256.6 1305.47,256.6 1304.48,255.5 1303.48,255.46 1302.48,255.43 1301.48,255.41 1300.49,255.98 1299.49,255.78 1298.49,255.27 1297.49,255.82 1296.5,256.29 1295.5,256.33 1294.5,255.77 1293.51,256.26 1292.51,256 1291.51,255.47 1290.51,255.75 1289.52,256.13 1288.52,255.26 1287.52,256.01 1286.53,255.85 1285.53,255.28 1284.53,255.34 1283.53,255.45 1282.54,255.3 1281.54,255.62 1280.54,255.48 1279.55,254.85 1278.55,254.89 1277.55,255.77 1276.55,254.95 1275.56,255.43 1274.56,255.27 1273.56,255.08 1272.57,255.26 1271.57,255.67 1270.57,254.71 1269.57,255.58 1268.58,254.9 1267.58,255.04 1266.58,255.33 1265.59,256.03 1264.59,256.91 1263.59,256.87 1262.59,257.87 1261.6,258.15 1260.6,259.44Z" stroke="none" fill="#f6f600" stroke-width="1"/>
<path d="M21.4,609.23 22.19,609.93 22.99,611.89 23.78,612.44 24.58,614.07 25.37,614.75 26.16,615.34 26.96,616.77 27.75,617.64 28.55,618.28 29.34,619.23 30.14,619.17 30.93,619.75 31.72,620.21 32.52,621.12 33.31,621.47 34.11,621.87 34.9,622.39 34.9,629.66 34.11,629.91 33.31,629.17 32.52,629.52 31.72,629.26 30.93,628.74 30.14,629.21 29.34,628.54 28.55,628.17 27.75,628.34 26.96,628.12 26.16,627.44 25.37,627.94 24.58,627.2 23.78,626.75 22.99,626.64 22.19,625.85 21.4,625.77ZM375,609.04 375.79,610.78 376.59,611.62 377.38,613.1 378.18,613.82 378.97,614.61 379.76,616.03 380.56,616.37 381.35,617.62 382.15,618.11 382.94,618.59 383.74,619.39 384.53,620.42 385.32,620.36 386.12,620.67 386.91,621.97 387.71,621.63 388.5,622.16 388.5,629.21 387.71,629.21 386.91,628.97 386.12,629.02 385.32,628.91 384.53,628.66 383.74,628.45 382.94,628.95 382.15,628.18 381.35,628.06 380.56,628.35 379.76,627.82 378.97,628.01 378.18,626.99 377.38,626.66 376.59,627.15 375.79,626.63 375,625.98ZM728.6,609.43 729.39,610.26 730.19,611.26 730.98,612.63 731.78,613.75 732.57,615.07 733.36,616.01 734.16,616.24 734.95,617.27 735.75,618.52 736.54,618.48 737.34,619.11 738.13,619.93 738.92,620.99 739.72,620.9 740.51,621.61 741.31,621.74 742.1,622.08 742.1,629.32 741.31,629.35 740.51,629.62 739.72,629.38 738.92,628.87 738.13,629.25 737.34,628.84 736.54,628.16 735.75,628.26 734.95,627.96 734.16,628.19 733.36,627.35 732.57,627.94 731.78,627.55 730.98,626.9 730.19,626.92 729.39,626.3 728.6,625.83ZM1082.2,608.87 1082.99,610.19 1083.79,611.34 1084.58,612.38 1085.38,614.25 1086.17,614.34 1086.96,615.95 1087.76,616.65 1088.55,616.96 1089.35,617.69 1090.14,619.17 1090.94,619.32 1091.73,619.7 1092.52,620.21 1093.32,620.71 1094.11,621.79 1094.91,621.61 1095.7,622.65 1095.7,629.95 1094.91,629.17 1094.11,629.13 1093.32,629.66 1092.52,628.87 1091.73,629.34 1090.94,629.1 1090.14,628.17 1089.35,628.34 1088.55,627.97 1087.76,627.64 1086.96,627.54 1086.17,627.08 1085.38,627.43 1084.58,627.24 1083.79,626.72 1082.99,626.06 1082.2,625.78ZM1435.8,608.54 1436.59,610.71 1437.39,612.01 1438.18,612.67 1438.98,613.29 1439.77,614.66 1440.56,615.25 1441.36,616.22 1442.15,617.71 1442.95,617.78 1443.74,619.14 1444.54,618.91 1445.33,620.49 1446.12,620.35 1446.92,620.68 1447.71,621.16 1448.51,621.87 1449.3,622.53 1449.3,629.83 1448.51,629.77 1447.71,629.2 1446.92,628.93 1446.12,629.46 1445.33,628.57 1444.54,628.95 1443.74,628.75 1442.95,628.88 1442.15,628.34 1441.36,628.34 1440.56,628.19 1439.77,627.03 1438.98,627.49 1438.18,626.63 1437.39,626.47 1436.59,626 1435.8,625.72Z" stroke="none" fill="#e6d800" stroke-width="1"/>
<path d="M-105.4,615.91 -104.38,616.62 -103.37,617.61 -102.35,618.67 -101.34,619.58 -100.32,619.22 -99.31,620.54 -98.29,620.93 -97.28,621.26 -96.26,621.05 -95.25,621.29 -94.23,622.26 -93.22,622.42 -92.2,622.37 -91.19,622.55 -90.17,622.42 -89.16,623.54 -88.14,623.53 -88.14,637.72 -89.16,638.19 -90.17,637.76 -91.19,637.01 -92.2,637.06 -93.22,636.87 -94.23,636.92 -95.25,636.93 -96.26,636.15 -97.28,636.24 -98.29,635.36 -99.31,634.76 -100.32,634.7 -101.34,633.66 -102.35,633.68 -103.37,632.6 -104.38,632.17 -105.4,631.45ZM-70.04,615.87 -69.02,616.84 -68.01,617.93 -66.99,618.59 -65.98,619.47 -64.96,619.94 -63.95,619.93 -62.93,620.56 -61.92,621.34 -60.9,621.38 -59.89,621.46 -58.87,622.46 -57.86,622.23 -56.84,622.31 -55.83,622.72 -54.81,622.69 -53.8,622.82 -52.78,623.35 -52.78,638.03 -53.8,637.6 -54.81,638.11 -55.83,637.59 -56.84,636.98 -57.86,636.82 -58.87,637.07 -59.89,636.74 -60.9,635.76 -61.92,635.57 -62.93,635.74 -63.95,634.76 -64.96,634.46 -65.98,633.87 -66.99,633.31 -68.01,632.3 -69.02,631.76 -70.04,631.27ZM-34.68,616.57 -33.66,616.7 -32.65,617.46 -31.63,618.29 -30.62,619.18 -29.6,620.17 -28.59,620.58 -27.57,620.49 -26.56,620.6 -25.54,621.52 -24.53,621.81 -23.51,621.76 -22.5,622.38 -21.48,622.98 -20.47,622.35 -19.45,622.7 -18.44,623.4 -17.42,622.85 -17.42,637.79 -18.44,638.33 -19.45,637.33 -20.47,637.2 -21.48,637.35 -22.5,636.95 -23.51,636.76 -24.53,636.19 -25.54,636.64 -26.56,635.8 -27.57,635.72 -28.59,635.29 -29.6,634.65 -30.62,633.56 -31.63,632.97 -32.65,632.91 -33.66,631.53 -34.68,630.61ZM0.68,616.39 1.7,617.15 2.71,617.68 3.73,618.28 4.74,618.73 5.76,620.04 6.77,620.28 7.79,620.46 8.8,620.69 9.82,621.21 10.83,622 11.85,621.74 12.86,621.83 13.88,622.38 14.89,622.54 15.91,623.08 16.92,623.1 17.94,623.16 17.94,637.91 16.92,638.26 15.91,638.16 14.89,637.72 13.88,637.48 12.86,637.2 11.85,636.55 10.83,636.59 9.82,636.63 8.8,635.66 7.79,635.74 6.77,635.28 5.76,634.09 4.74,633.88 3.73,633.09 2.71,632.27 1.7,632.2 0.68,631.45ZM36.04,615.78 37.04,616.83 38.04,617.81 39.04,618.46 40.04,618.67 41.04,618.75 42.04,619.33 43.04,619.55 44.04,620.07 45.04,620.31 46.04,621.27 47.04,621.56 48.04,621.57 49.04,622.24 50.04,621.73 51.04,621.98 52.04,622.58 53.05,622.67 54.05,622.41 55.05,623.34 56.05,623.18 57.05,623.28 58.05,623.15 59.05,623.48 60.05,623.04 61.05,623.35 62.05,623.76 63.05,623.79 64.05,623.78 65.05,623.36 66.05,623.68 67.05,624.39 68.05,624.39 69.05,624.31 70.05,623.59 71.05,623.63 72.05,623.8 73.05,624.44 74.05,623.84 75.05,623.89 76.05,623.94 77.05,624.43 78.05,624.25 79.05,624.59 80.05,623.82 81.05,623.81 82.05,624.62 83.05,623.89 84.05,624.51 85.06,624.41 86.06,624.02 87.06,624.08 88.06,624.57 89.06,623.85 90.06,624.79 91.06,623.89 92.06,624.01 93.06,624.49 94.06,623.97 95.06,624.86 96.06,624.3 97.06,623.94 98.06,624.04 99.06,624.42 100.06,624.75 101.06,624.13 102.06,624.28 103.06,624.45 104.06,624.53 105.06,624.61 106.06,624.21 107.06,624.26 108.06,624.76 109.06,624.8 110.06,624.31 111.06,624.89 112.06,624.07 113.06,624.72 114.06,624.8 115.06,624.46 116.06,624.59 117.07,623.95 118.07,624.74 119.07,624.58 120.07,624.47 121.07,624.48 122.07,624.06 123.07,624.74 124.07,624.43 125.07,624.51 126.07,624.07 127.07,624.53 128.07,624.14 129.07,624.66 130.07,623.93 131.07,624.02 132.07,624.11 133.07,624.3 134.07,624.77 135.07,623.91 136.07,624.46 137.07,623.94 138.07,624.28 139.07,624.2 140.07,624.06 141.07,624.38 142.07,624.24 143.07,624.16 144.07,624.51 145.07,624.14 146.07,624.87 147.07,624.15 148.07,624.89 149.07,624.06 150.08,624.85 151.08,623.96 152.08,623.91 153.08,624 154.08,624.61 155.08,624.13 156.08,624.18 157.08,624.57 158.08,623.93 159.08,624.44 160.08,624.3 161.08,624.06 162.08,624.81 163.08,624.26 164.08,624.19 165.08,624.59 166.08,624.76 167.08,624.13 168.08,624.03 169.08,624.86 170.08,624.33 171.08,624.43 172.08,624.36 173.08,624.73 174.08,624.33 175.08,624.66 176.08,624.42 177.08,623.98 178.08,624.41 179.08,624.76 180.08,624.43 181.08,624.29 182.09,623.93 183.09,624.6 184.09,624.29 185.09,624.22 186.09,624.27 187.09,624.32 188.09,624.24 189.09,624.19 190.09,624.36 191.09,623.95 192.09,624.13 193.09,624.34 194.09,624.78 195.09,624.33 196.09,624.46 197.09,624.79 198.09,624.71 199.09,624.61 200.09,624.52 201.09,624.5 202.09,624.09 203.09,624.04 204.09,623.96 205.09,623.99 206.09,624.51 207.09,624.51 208.09,623.94 209.09,624.74 210.09,624.34 211.09,624.44 212.09,623.97 213.09,624.76 214.1,623.98 215.1,624.11 216.1,624.37 217.1,624.4 218.1,624.43 219.1,624.84 220.1,623.93 221.1,624.58 222.1,624.33 223.1,624.71 224.1,624.57 225.1,624.71 226.1,624.76 227.1,624.68 228.1,624.03 229.1,624.44 230.1,624.67 230.1,638.98 229.1,639.15 228.1,638.98 227.1,639.54 226.1,639.32 225.1,638.99 224.1,638.86 223.1,639.41 222.1,639.32 221.1,639.64 220.1,639.28 219.1,639.38 218.1,639.61 217.1,638.79 216.1,638.87 215.1,638.72 214.1,638.83 213.09,638.99 212.09,639.59 211.09,639.11 210.09,639.3 209.09,639.01 208.09,639.16 207.09,639.67 206.09,639.57 205.09,639.05 204.09,639.15 203.09,639.39 202.09,638.72 201.09,639.06 200.09,638.92 199.09,638.84 198.09,639.1 197.09,639.42 196.09,638.79 195.09,639.68 194.09,639.6 193.09,638.93 192.09,639.55 191.09,639.26 190.09,638.95 189.09,638.77 188.09,639.39 187.09,639.32 186.09,639.3 185.09,638.87 184.09,639.21 183.09,639.41 182.09,639.53 181.08,639.03 180.08,639.55 179.08,639.01 178.08,639.49 177.08,639.47 176.08,639.64 175.08,639.37 174.08,639.64 173.08,639.01 172.08,639.13 171.08,638.9 170.08,639.4 169.08,639.5 168.08,638.8 167.08,639.21 166.08,639.21 165.08,638.91 164.08,639.47 163.08,639.02 162.08,639.22 161.08,639.54 160.08,638.75 159.08,639.16 158.08,638.77 157.08,638.85 156.08,639.34 155.08,639.53 154.08,639.27 153.08,638.74 152.08,639.64 151.08,639.43 150.08,638.77 149.07,639.21 148.07,638.83 147.07,639.16 146.07,639.4 145.07,639.21 144.07,638.76 143.07,639.05 142.07,639.7 141.07,638.8 140.07,638.82 139.07,639.27 138.07,638.9 137.07,638.73 136.07,638.91 135.07,639.49 134.07,639.5 133.07,639.59 132.07,639.36 131.07,638.94 130.07,639.23 129.07,638.94 128.07,639.11 127.07,639.25 126.07,639.31 125.07,639.24 124.07,639.23 123.07,639.67 122.07,639.36 121.07,639.23 120.07,639.29 119.07,639.12 118.07,639.31 117.07,638.98 116.06,639.05 115.06,638.91 114.06,639.21 113.06,639.16 112.06,639.3 111.06,638.95 110.06,639.64 109.06,638.78 108.06,639.36 107.06,638.8 106.06,639.51 105.06,639.55 104.06,639.03 103.06,638.77 102.06,639.63 101.06,639.26 100.06,639.1 99.06,638.98 98.06,638.68 97.06,638.76 96.06,639.05 95.06,639.03 94.06,639.22 93.06,639.06 92.06,638.78 91.06,639.47 90.06,639.6 89.06,639.38 88.06,638.74 87.06,639.56 86.06,639.57 85.06,638.92 84.05,639.55 83.05,639.55 82.05,638.72 81.05,639.4 80.05,639.25 79.05,638.69 78.05,639.21 77.05,639.14 76.05,639.2 75.05,638.74 74.05,639.27 73.05,638.89 72.05,638.48 71.05,639.28 70.05,638.42 69.05,638.61 68.05,639.24 67.05,638.43 66.05,639.15 65.05,638.78 64.05,638.72 63.05,638.67 62.05,638.91 61.05,638.13 60.05,638.68 59.05,637.69 58.05,637.78 57.05,638.1 56.05,637.44 55.05,637.94 54.05,637.35 53.05,637.91 52.04,637.29 51.04,637.22 50.04,637.16 49.04,637.06 48.04,636.07 47.04,635.98 46.04,635.49 45.04,635.68 44.04,635.06 43.04,634.37 42.04,634.56 41.04,633.73 40.04,633.68 39.04,632.41 38.04,632.22 37.04,632.07 36.04,631.2ZM248.2,616.24 249.22,617.28 250.23,617.37 251.25,618.22 252.26,619.23 253.28,620.02 254.29,620.08 255.31,620.92 256.32,620.57 257.34,620.97 258.35,621.93 259.37,622.51 260.38,622.09 261.4,622.34 262.41,622.55 263.43,622.97 264.44,622.94 265.46,623.06 265.46,638.08 264.44,638.25 263.43,638.07 262.41,637.73 261.4,637.79 260.38,637.07 259.37,637.13 258.35,636.39 257.34,636.32 256.32,636.15 255.31,635.26 254.29,635.32 253.28,634.86 252.26,634.42 251.25,633.58 250.23,633.01 249.22,631.36 248.2,631.25ZM283.56,615.78 284.58,617.2 285.59,617.39 286.61,618.53 287.62,619.5 288.64,619.41 289.65,620.37 290.67,620.57 291.68,620.68 292.7,621.81 293.71,621.96 294.73,621.79 295.74,621.98 296.76,622.36 297.77,622.92 298.79,623.3 299.8,623.06 300.82,622.7 300.82,637.98 299.8,637.58 298.79,637.29 297.77,637.79 296.76,637.16 295.74,636.83 294.73,636.55 293.71,636.22 292.7,635.74 291.68,636.05 290.67,635.63 289.65,634.84 288.64,634.05 287.62,634.04 286.61,633.01 285.59,632.92 284.58,631.6 283.56,630.49ZM318.92,616.25 319.94,616.93 320.95,618 321.97,618.47 322.98,619.11 324,619.62 325.01,620.3 326.03,620.17 327.04,621.17 328.06,621.04 329.07,621.47 330.09,622.34 331.1,622 332.12,622.62 333.13,622.46 334.15,623.38 335.16,623.53 336.18,623.02 336.18,638.41 335.16,637.92 334.15,637.94 333.13,637.24 332.12,637.49 331.1,636.94 330.09,637.27 329.07,636.57 328.06,635.92 327.04,635.82 326.03,635.47 325.01,635.05 324,634.25 322.98,633.65 321.97,633.21 320.95,632.34 319.94,632.27 318.92,631.39ZM354.28,616.66 355.3,617 356.31,618.16 357.33,618.59 358.34,619.44 359.36,619.29 360.37,620.22 361.39,620.92 362.4,620.98 363.42,621.64 364.43,622.07 365.45,622.34 366.46,621.98 367.48,622.91 368.49,622.79 369.51,622.57 370.52,623.34 371.54,622.95 371.54,637.5 370.52,637.99 369.51,637.26 368.49,637.33 367.48,636.83 366.46,636.79 365.45,636.57 364.43,636.81 363.42,635.84 362.4,635.42 361.39,635.94 360.37,634.83 359.36,634.84 358.34,634.31 357.33,633.01 356.31,632.64 355.3,631.77 354.28,630.81ZM389.64,616.56 390.64,616.51 391.64,617.73 392.64,617.86 393.64,618.74 394.64,619.1 395.64,619.67 396.64,619.66 397.64,620.77 398.64,621.24 399.64,621.07 400.64,621.26 401.64,621.91 402.64,621.53 403.64,621.65 404.64,622.5 405.64,622.52 406.65,622.77 407.65,622.32 408.65,623.29 409.65,623.23 410.65,622.79 411.65,623.44 412.65,623.86 413.65,623.22 414.65,623.99 415.65,624.08 416.65,624.03 417.65,623.74 418.65,623.75 419.65,623.72 420.65,624.19 421.65,623.6 422.65,624.02 423.65,624.07 424.65,624.49 425.65,624.5 426.65,624.1 427.65,624.24 428.65,624.37 429.65,624.23 430.65,623.98 431.65,623.88 432.65,624.3 433.65,624.19 434.65,624.03 435.65,624.12 436.65,623.83 437.65,624.35 438.66,623.88 439.66,623.92 440.66,624.59 441.66,623.94 442.66,624.53 443.66,624.33 444.66,624.09 445.66,624.42 446.66,624.38 447.66,624.77 448.66,624.83 449.66,624.33 450.66,624.23 451.66,624.46 452.66,623.99 453.66,624.4 454.66,623.98 455.66,624.15 456.66,624.64 457.66,624.65 458.66,624.36 459.66,624.85 460.66,624.04 461.66,624.2 462.66,624.48 463.66,624.34 464.66,624.54 465.66,623.98 466.66,624.61 467.66,624.06 468.66,624.16 469.66,624.07 470.67,624.62 471.67,623.93 472.67,624.87 473.67,624.27 474.67,624.13 475.67,624.22 476.67,624.39 477.67,624.13 478.67,624.66 479.67,624.65 480.67,624.53 481.67,624.8 482.67,624.62 483.67,624.06 484.67,624.16 485.67,624.38 486.67,624.21 487.67,624.3 488.67,624.37 489.67,624.68 490.67,624.44 491.67,624.74 492.67,624.51 493.67,623.91 494.67,624.89 495.67,624.05 496.67,624.3 497.67,623.92 498.67,624.42 499.67,624.58 500.67,624.19 501.67,624.83 502.67,624.05 503.68,624.85 504.68,624.69 505.68,624.05 506.68,624 507.68,623.97 508.68,624.48 509.68,624.15 510.68,624.87 511.68,624.02 512.68,624.71 513.68,624.28 514.68,623.91 515.68,624.64 516.68,624.49 517.68,624.13 518.68,624.26 519.68,624.05 520.68,624.03 521.68,624.47 522.68,624.44 523.68,624.1 524.68,624.2 525.68,624.9 526.68,624.25 527.68,624.39 528.68,624.06 529.68,623.92 530.68,624.51 531.68,624.14 532.68,624.64 533.68,624.13 534.68,624.27 535.69,624.55 536.69,624.59 537.69,624.24 538.69,624.63 539.69,624.46 540.69,624.72 541.69,624.66 542.69,624.72 543.69,624.16 544.69,623.98 545.69,623.9 546.69,624.23 547.69,624.31 548.69,624.17 549.69,624.06 550.69,624.33 551.69,624.21 552.69,623.93 553.69,624.74 554.69,624.42 555.69,624.08 556.69,624.23 557.69,624.48 558.69,624 559.69,624.42 560.69,624.64 561.69,624.06 562.69,624.41 563.69,624.8 564.69,624.6 565.69,624.35 566.69,623.93 567.7,624.83 568.7,624.88 569.7,624.68 570.7,624.13 571.7,624.48 572.7,624.7 573.7,624.43 574.7,624.87 575.7,624.5 576.7,623.91 577.7,624.2 578.7,624.9 579.7,624.88 580.7,624.82 581.7,624.11 582.7,624.15 583.7,624.51 583.7,639.17 582.7,638.87 581.7,639.25 580.7,639.38 579.7,638.83 578.7,639.54 577.7,639.51 576.7,639.42 575.7,639.12 574.7,638.79 573.7,638.82 572.7,639.62 571.7,639.46 570.7,639.64 569.7,639.61 568.7,639.53 567.7,639.11 566.69,639.43 565.69,638.9 564.69,639.66 563.69,639.52 562.69,639.37 561.69,639.44 560.69,639.43 559.69,639.01 558.69,639.68 557.69,639.57 556.69,639.5 555.69,638.7 554.69,638.75 553.69,639.15 552.69,639.39 551.69,639.2 550.69,639.5 549.69,639.34 548.69,638.77 547.69,638.78 546.69,639.01 545.69,639.06 544.69,639.32 543.69,639.37 542.69,638.87 541.69,638.77 540.69,638.75 539.69,639.27 538.69,639.54 537.69,639.2 536.69,639.09 535.69,639.58 534.68,638.85 533.68,639.07 532.68,638.77 531.68,639.26 530.68,639.67 529.68,638.84 528.68,639.29 527.68,639.57 526.68,639.11 525.68,638.81 524.68,639.14 523.68,638.88 522.68,639.67 521.68,639.61 520.68,638.76 519.68,639.35 518.68,639 517.68,639.51 516.68,639 515.68,639.15 514.68,639.16 513.68,639.37 512.68,639.06 511.68,639 510.68,639.34 509.68,638.83 508.68,639.3 507.68,638.89 506.68,639.46 505.68,639.33 504.68,638.86 503.68,638.96 502.67,639.08 501.67,639.21 500.67,639.12 499.67,638.98 498.67,639.39 497.67,638.81 496.67,639.35 495.67,639.36 494.67,639.11 493.67,639.39 492.67,639.04 491.67,638.88 490.67,639.37 489.67,638.94 488.67,639.44 487.67,638.72 486.67,639.69 485.67,639.17 484.67,639.4 483.67,639.28 482.67,639.67 481.67,639.38 480.67,639.55 479.67,639.5 478.67,639.53 477.67,639.28 476.67,639.52 475.67,639.61 474.67,638.71 473.67,639.49 472.67,638.98 471.67,639.58 470.67,638.72 469.66,639.56 468.66,639.03 467.66,639.17 466.66,638.75 465.66,638.75 464.66,639.68 463.66,639.01 462.66,639.55 461.66,639.59 460.66,639.13 459.66,638.93 458.66,638.86 457.66,638.75 456.66,639.42 455.66,638.7 454.66,639.63 453.66,639.09 452.66,638.96 451.66,638.74 450.66,639.52 449.66,639.66 448.66,639.46 447.66,639.43 446.66,639.54 445.66,638.72 444.66,638.83 443.66,639.2 442.66,638.88 441.66,639.38 440.66,638.87 439.66,638.98 438.66,638.74 437.65,639.56 436.65,639.07 435.65,639.47 434.65,638.93 433.65,639.49 432.65,638.56 431.65,638.69 430.65,638.81 429.65,638.51 428.65,639.08 427.65,638.61 426.65,638.54 425.65,638.64 424.65,639.15 423.65,638.78 422.65,638.79 421.65,638.77 420.65,638.5 419.65,638.43 418.65,638.58 417.65,638.7 416.65,638.78 415.65,638.81 414.65,638.15 413.65,638.54 412.65,638.67 411.65,638.53 410.65,637.89 409.65,638.01 408.65,638.2 407.65,637.44 406.65,636.94 405.64,637.21 404.64,636.63 403.64,636.59 402.64,636.49 401.64,636.37 400.64,636.37 399.64,636.09 398.64,635.47 397.64,635.22 396.64,634.57 395.64,634.81 394.64,633.81 393.64,633.56 392.64,633.13 391.64,632.29 390.64,632.04 389.64,630.46ZM601.8,616.33 602.82,617.33 603.83,617.67 604.85,619.01 605.86,618.73 606.88,619.23 607.89,620.37 608.91,621.06 609.92,620.93 610.94,621.54 611.95,622.11 612.97,621.97 613.98,622.32 615,622.92 616.01,623.09 617.03,622.75 618.04,622.68 619.06,623.14 619.06,638.39 618.04,637.37 617.03,637.23 616.01,637.19 615,637.66 613.98,637.55 612.97,636.54 611.95,636.87 610.94,636.26 609.92,635.81 608.91,635.38 607.89,635.04 606.88,635.02 605.86,634.23 604.85,633.37 603.83,632.38 602.82,632.18 601.8,630.88ZM637.16,615.74 638.18,617.05 639.19,617.51 640.21,618.42 641.22,619.26 642.24,620.14 643.25,620.61 644.27,620.81 645.28,620.6 646.3,621.69 647.31,621.74 648.33,621.89 649.34,622.69 650.36,622.36 651.37,623.02 652.39,623.19 653.4,622.94 654.42,623.27 654.42,637.71 653.4,637.71 652.39,638.06 651.37,637.91 650.36,637.6 649.34,636.86 648.33,637.01 647.31,636.6 646.3,636.7 645.28,635.78 644.27,635.21 643.25,634.91 642.24,634.76 641.22,634.15 640.21,633.56 639.19,632.52 638.18,631.69 637.16,631.17ZM672.52,616.03 673.54,616.8 674.55,618.19 675.57,618.36 676.58,618.73 677.6,619.9 678.61,620.38 679.63,620.46 680.64,621.45 681.66,620.96 682.67,622.22 683.69,622.05 684.7,621.84 685.72,622.34 686.73,622.88 687.75,623.29 688.76,623.11 689.78,623.55 689.78,637.75 688.76,638 687.75,637.66 686.73,637.31 685.72,637.66 684.7,637.37 683.69,636.81 682.67,636.14 681.66,636.4 680.64,636.28 679.63,635.58 678.61,634.59 677.6,634.49 676.58,633.95 675.57,633.43 674.55,632.16 673.54,631.63 672.52,631.1ZM707.88,616.64 708.9,616.84 709.91,618.31 710.93,618.26 711.94,618.88 712.96,620.19 713.97,620.4 714.99,621.07 716,621.51 717.02,620.99 718.03,621.44 719.05,621.66 720.06,622.07 721.08,622.19 722.09,622.46 723.11,622.72 724.12,622.7 725.14,623.03 725.14,637.71 724.12,638.22 723.11,637.22 722.09,637.48 721.08,637.51 720.06,637.44 719.05,636.74 718.03,636.5 717.02,635.76 716,635.58 714.99,635.49 713.97,635 712.96,634.96 711.94,633.84 710.93,633.12 709.91,632.22 708.9,632.05 707.88,631.27ZM743.24,616.2 744.24,617.28 745.24,617.92 746.24,617.91 747.24,618.34 748.24,619.36 749.24,619.51 750.24,620.4 751.24,619.91 752.24,620.43 753.24,620.71 754.24,620.93 755.24,621.15 756.24,621.37 757.24,621.67 758.24,621.82 759.24,622.39 760.25,622.64 761.25,622.59 762.25,622.93 763.25,622.65 764.25,623.65 765.25,623.05 766.25,623.65 767.25,623.27 768.25,624.03 769.25,623.34 770.25,623.22 771.25,623.58 772.25,623.37 773.25,624.36 774.25,624.39 775.25,623.7 776.25,623.54 777.25,624.34 778.25,624.49 779.25,624.53 780.25,624.48 781.25,624.15 782.25,623.84 783.25,624.13 784.25,623.86 785.25,624.44 786.25,624.39 787.25,624.21 788.25,624.55 789.25,624.45 790.25,623.95 791.25,624.19 792.26,624.5 793.26,624.28 794.26,624.63 795.26,624.79 796.26,624.81 797.26,624.34 798.26,624.26 799.26,624.41 800.26,624.52 801.26,624.84 802.26,624.5 803.26,624.66 804.26,624.84 805.26,624.5 806.26,624.71 807.26,624.32 808.26,624.34 809.26,624.26 810.26,624.04 811.26,624.12 812.26,624.85 813.26,624.18 814.26,624.13 815.26,624.61 816.26,624.51 817.26,624.29 818.26,624.23 819.26,624.06 820.26,623.97 821.26,623.95 822.26,624.18 823.26,624.41 824.27,624.39 825.27,624.59 826.27,624.77 827.27,624.43 828.27,624.21 829.27,624.85 830.27,624.07 831.27,624.53 832.27,624.09 833.27,624.47 834.27,624.88 835.27,624.03 836.27,624.78 837.27,624.05 838.27,624.66 839.27,624.28 840.27,624.41 841.27,624.3 842.27,624.82 843.27,624.4 844.27,624.5 845.27,624.44 846.27,624.34 847.27,624.13 848.27,624.23 849.27,624.73 850.27,624.39 851.27,624.36 852.27,624.58 853.27,624.83 854.27,624.14 855.27,624.75 856.27,624.74 857.28,624.14 858.28,624.07 859.28,624.86 860.28,624.18 861.28,623.96 862.28,624.04 863.28,624.21 864.28,623.94 865.28,624.27 866.28,624.47 867.28,624.68 868.28,624.76 869.28,624.77 870.28,624.83 871.28,624.32 872.28,624.69 873.28,624.53 874.28,623.94 875.28,624.09 876.28,624.11 877.28,624.12 878.28,624.12 879.28,624.22 880.28,624.1 881.28,624.14 882.28,624.13 883.28,624.54 884.28,624.19 885.28,624.02 886.28,624.81 887.28,624.3 888.28,624.88 889.29,624.57 890.29,624.11 891.29,624.03 892.29,624.76 893.29,624.19 894.29,623.96 895.29,624.57 896.29,623.92 897.29,623.97 898.29,624.66 899.29,624.19 900.29,624.66 901.29,624.49 902.29,623.96 903.29,624.83 904.29,624.23 905.29,624.61 906.29,624.54 907.29,624.29 908.29,624.77 909.29,623.96 910.29,624.2 911.29,624.82 912.29,624.1 913.29,624.33 914.29,624.75 915.29,624.16 916.29,624.2 917.29,624.13 918.29,624.63 919.29,624.42 920.29,624.33 921.3,624.79 922.3,624.57 923.3,624.03 924.3,624.87 925.3,624.57 926.3,624.73 927.3,624.46 928.3,624.88 929.3,624.27 930.3,624.35 931.3,624.43 932.3,624.22 933.3,624.42 934.3,624.82 935.3,624.65 936.3,624.1 937.3,624.68 937.3,639.69 936.3,638.84 935.3,639.46 934.3,638.83 933.3,639.11 932.3,639.27 931.3,638.94 930.3,638.7 929.3,638.71 928.3,638.8 927.3,638.74 926.3,639.64 925.3,639.45 924.3,639.57 923.3,638.86 922.3,639.64 921.3,639.41 920.29,639.61 919.29,639.24 918.29,639.56 917.29,639.32 916.29,639.03 915.29,638.9 914.29,639.06 913.29,638.72 912.29,639.61 911.29,638.99 910.29,638.79 909.29,639.41 908.29,639.18 907.29,639.66 906.29,638.92 905.29,639.34 904.29,639.22 903.29,639.43 902.29,638.75 901.29,639.64 900.29,639.04 899.29,639.26 898.29,639.07 897.29,639.48 896.29,639.24 895.29,639.05 894.29,639.48 893.29,639.37 892.29,639.2 891.29,639.2 890.29,639.66 889.29,638.7 888.28,638.88 887.28,639.52 886.28,639.5 885.28,639.03 884.28,638.73 883.28,639.45 882.28,638.96 881.28,638.94 880.28,639.64 879.28,639.46 878.28,639.28 877.28,639.67 876.28,639.14 875.28,638.79 874.28,639.14 873.28,639.3 872.28,639.57 871.28,639.39 870.28,639.25 869.28,638.73 868.28,639.06 867.28,639.38 866.28,639.46 865.28,639.55 864.28,639.67 863.28,639.3 862.28,639.55 861.28,639.38 860.28,638.89 859.28,638.71 858.28,639.28 857.28,639.68 856.27,639.13 855.27,639.27 854.27,638.91 853.27,639.14 852.27,639.05 851.27,639.67 850.27,639.31 849.27,639.54 848.27,639.5 847.27,638.79 846.27,639.36 845.27,638.8 844.27,639.35 843.27,638.86 842.27,639.14 841.27,638.91 840.27,638.98 839.27,639.06 838.27,639.5 837.27,639.41 836.27,639.25 835.27,639.24 834.27,638.97 833.27,638.71 832.27,639.12 831.27,639.1 830.27,639.53 829.27,639.5 828.27,638.89 827.27,639.66 826.27,639.52 825.27,639.13 824.27,639.13 823.26,639.22 822.26,639.64 821.26,639.62 820.26,638.81 819.26,639.5 818.26,638.96 817.26,639.07 816.26,639.08 815.26,639.6 814.26,639.36 813.26,639.44 812.26,639.38 811.26,638.82 810.26,639.18 809.26,639.23 808.26,639.2 807.26,638.87 806.26,638.7 805.26,639.67 804.26,638.77 803.26,639.55 802.26,639.12 801.26,638.96 800.26,638.74 799.26,639.46 798.26,639.08 797.26,639.41 796.26,638.83 795.26,639.25 794.26,638.86 793.26,639.28 792.26,639.44 791.25,638.79 790.25,639.06 789.25,639.48 788.25,638.76 787.25,639 786.25,638.67 785.25,639.06 784.25,639.36 783.25,638.5 782.25,638.89 781.25,639.08 780.25,638.79 779.25,639.17 778.25,638.48 777.25,638.87 776.25,638.88 775.25,639.02 774.25,638.47 773.25,638.71 772.25,638.68 771.25,638.61 770.25,638.24 769.25,638.92 768.25,638.74 767.25,638.29 766.25,638.12 765.25,638.44 764.25,638.36 763.25,637.84 762.25,637.29 761.25,637.69 760.25,637.4 759.24,637.22 758.24,636.69 757.24,636.8 756.24,636.8 755.24,636.59 754.24,636.51 753.24,635.65 752.24,636 751.24,635.04 750.24,635.26 749.24,634.49 748.24,634.04 747.24,633.1 746.24,633.04 745.24,632.2 744.24,631.32 743.24,630.51ZM955.4,616.1 956.42,617.46 957.43,618.04 958.45,618.28 959.46,619.37 960.48,620.06 961.49,620.11 962.51,620.63 963.52,621.26 964.54,621.24 965.55,621.55 966.57,622.22 967.58,622.61 968.6,622.56 969.61,622.55 970.63,623.1 971.64,622.84 972.66,622.75 972.66,637.51 971.64,637.6 970.63,637.23 969.61,637.28 968.6,637.36 967.58,636.77 966.57,636.86 965.55,637.03 964.54,636.26 963.52,635.75 962.51,635.81 961.49,635.17 960.48,634.31 959.46,634.01 958.45,633.24 957.43,632.79 956.42,631.36 955.4,631.1ZM990.76,615.98 991.78,617.32 992.79,617.64 993.81,618.39 994.82,619.22 995.84,619.67 996.85,620.15 997.87,620.67 998.88,620.77 999.9,621.85 1000.91,621.55 1001.93,621.93 1002.94,622.05 1003.96,622.8 1004.97,622.96 1005.99,622.59 1007,622.95 1008.02,623.4 1008.02,637.64 1007,637.78 1005.99,637.86 1004.97,637.69 1003.96,637.65 1002.94,637.55 1001.93,637.1 1000.91,636.48 999.9,636.28 998.88,635.45 997.87,635.92 996.85,635.45 995.84,634.91 994.82,634.06 993.81,633.31 992.79,632.25 991.78,631.55 990.76,630.52ZM1026.12,615.69 1027.14,617.15 1028.15,618.12 1029.17,618.32 1030.18,618.75 1031.2,619.8 1032.21,620.64 1033.23,620.5 1034.24,621.46 1035.26,621.03 1036.27,622.09 1037.29,622.06 1038.3,622.38 1039.32,622.55 1040.33,622.68 1041.35,622.44 1042.36,622.7 1043.38,622.85 1043.38,638.12 1042.36,638.09 1041.35,638.13 1040.33,637.37 1039.32,637.78 1038.3,637.19 1037.29,637.21 1036.27,636.54 1035.26,636.27 1034.24,636.31 1033.23,635.64 1032.21,634.8 1031.2,634.77 1030.18,633.47 1029.17,633.11 1028.15,633.09 1027.14,631.97 1026.12,630.51ZM1061.48,616.25 1062.5,617.07 1063.51,618.11 1064.53,618.06 1065.54,618.72 1066.56,619.7 1067.57,620.13 1068.59,620.55 1069.6,620.81 1070.62,621.54 1071.63,621.74 1072.65,621.84 1073.66,622.53 1074.68,622.49 1075.69,622.84 1076.71,622.7 1077.72,623.09 1078.74,623.11 1078.74,637.73 1077.72,638.1 1076.71,637.44 1075.69,637.28 1074.68,637.59 1073.66,637.24 1072.65,637.28 1071.63,636.57 1070.62,635.75 1069.6,635.54 1068.59,635.11 1067.57,634.53 1066.56,634.86 1065.54,634.01 1064.53,633.45 1063.51,632.26 1062.5,631.41 1061.48,630.51ZM1096.84,615.8 1097.84,617.31 1098.84,617.17 1099.84,618.26 1100.84,619.01 1101.84,618.67 1102.84,619.35 1103.84,619.65 1104.84,619.94 1105.84,620.87 1106.84,620.62 1107.84,621.21 1108.84,622.01 1109.84,622.14 1110.84,622.18 1111.84,622.54 1112.84,622.78 1113.85,622.34 1114.85,622.6 1115.85,623.25 1116.85,623.4 1117.85,623.58 1118.85,623.15 1119.85,623.35 1120.85,623.5 1121.85,623.83 1122.85,623.49 1123.85,623.81 1124.85,623.31 1125.85,623.35 1126.85,624.11 1127.85,623.46 1128.85,624.44 1129.85,623.7 1130.85,624.04 1131.85,623.93 1132.85,624.18 1133.85,623.7 1134.85,624.41 1135.85,623.92 1136.85,623.91 1137.85,624.64 1138.85,624.02 1139.85,623.79 1140.85,623.96 1141.85,624.61 1142.85,624.65 1143.85,624.62 1144.85,624.58 1145.86,623.83 1146.86,624.63 1147.86,624.23 1148.86,624.8 1149.86,624.22 1150.86,624.46 1151.86,624.79 1152.86,624.53 1153.86,624.4 1154.86,624.18 1155.86,624.51 1156.86,624.32 1157.86,624.24 1158.86,624.35 1159.86,624.36 1160.86,624.16 1161.86,624.15 1162.86,624.81 1163.86,624.57 1164.86,624.34 1165.86,624.51 1166.86,624.74 1167.86,623.92 1168.86,624.05 1169.86,623.92 1170.86,624.57 1171.86,623.97 1172.86,624.32 1173.86,624.75 1174.86,624.32 1175.86,624.37 1176.86,624.89 1177.87,624.44 1178.87,624.3 1179.87,624.8 1180.87,624.87 1181.87,624.13 1182.87,624.49 1183.87,624.47 1184.87,624.44 1185.87,624.58 1186.87,624.18 1187.87,624.55 1188.87,624.12 1189.87,624.77 1190.87,623.91 1191.87,624.62 1192.87,624.24 1193.87,624.72 1194.87,623.99 1195.87,624.29 1196.87,623.97 1197.87,624.04 1198.87,624.41 1199.87,624.62 1200.87,624.26 1201.87,624.04 1202.87,624.56 1203.87,624.23 1204.87,624.45 1205.87,624.74 1206.87,624.11 1207.87,624.46 1208.87,624.39 1209.87,624.67 1210.88,624.36 1211.88,624.56 1212.88,624.74 1213.88,624.59 1214.88,624.35 1215.88,624.82 1216.88,624.52 1217.88,624.74 1218.88,624.01 1219.88,624.41 1220.88,624.41 1221.88,624.73 1222.88,624.35 1223.88,624.87 1224.88,623.96 1225.88,624.82 1226.88,624.83 1227.88,624.69 1228.88,624.07 1229.88,624.73 1230.88,624.42 1231.88,624.44 1232.88,624.57 1233.88,624.8 1234.88,624.11 1235.88,624.85 1236.88,624.11 1237.88,624.64 1238.88,624.34 1239.88,624.85 1240.88,624.03 1241.88,624.18 1242.89,624.01 1243.89,624.04 1244.89,624.65 1245.89,624.06 1246.89,624.88 1247.89,624.7 1248.89,623.97 1249.89,624.42 1250.89,624.56 1251.89,624.85 1252.89,624.7 1253.89,624.38 1254.89,624.08 1255.89,624.34 1256.89,624.87 1257.89,624.08 1258.89,624.01 1259.89,624.46 1260.89,624.62 1261.89,624.72 1262.89,624.79 1263.89,624.17 1264.89,624.05 1265.89,624.1 1266.89,623.98 1267.89,624.85 1268.89,624 1269.89,624.89 1270.89,624.34 1271.89,624.35 1272.89,624.62 1273.89,624.35 1274.9,624.38 1275.9,624.05 1276.9,624.66 1277.9,624.07 1278.9,624.35 1279.9,623.98 1280.9,624.45 1281.9,624.9 1282.9,624.05 1283.9,624.68 1284.9,624.88 1285.9,623.92 1286.9,624 1287.9,624.12 1288.9,624.73 1289.9,624.67 1290.9,624.61 1290.9,639.46 1289.9,638.84 1288.9,638.88 1287.9,639.08 1286.9,639.48 1285.9,638.86 1284.9,639.2 1283.9,639.23 1282.9,638.95 1281.9,639.35 1280.9,639.68 1279.9,639.61 1278.9,638.9 1277.9,638.83 1276.9,639.46 1275.9,639.22 1274.9,638.82 1273.89,638.9 1272.89,638.73 1271.89,639.17 1270.89,639.44 1269.89,639.05 1268.89,639.63 1267.89,639.47 1266.89,638.72 1265.89,639.42 1264.89,638.95 1263.89,639.61 1262.89,639.33 1261.89,639.26 1260.89,639.48 1259.89,639.23 1258.89,638.7 1257.89,639.61 1256.89,639.6 1255.89,639.69 1254.89,638.91 1253.89,638.85 1252.89,639.5 1251.89,638.72 1250.89,639.41 1249.89,638.94 1248.89,639.34 1247.89,638.94 1246.89,639.7 1245.89,639.56 1244.89,638.93 1243.89,639.59 1242.89,639.53 1241.88,638.8 1240.88,639.11 1239.88,639 1238.88,638.83 1237.88,638.78 1236.88,639.26 1235.88,638.88 1234.88,639.55 1233.88,638.72 1232.88,639.56 1231.88,638.95 1230.88,639.03 1229.88,639.66 1228.88,639.69 1227.88,639.28 1226.88,639.45 1225.88,639.62 1224.88,639.57 1223.88,639.46 1222.88,639.05 1221.88,638.71 1220.88,638.98 1219.88,639.49 1218.88,638.74 1217.88,638.75 1216.88,639.05 1215.88,639.32 1214.88,639.62 1213.88,639.24 1212.88,639.55 1211.88,639.47 1210.88,639.55 1209.87,638.74 1208.87,638.79 1207.87,638.81 1206.87,639.35 1205.87,639.61 1204.87,638.82 1203.87,639.7 1202.87,638.97 1201.87,639.41 1200.87,638.87 1199.87,639.29 1198.87,638.74 1197.87,639.6 1196.87,638.72 1195.87,639.16 1194.87,639.43 1193.87,639.43 1192.87,638.84 1191.87,639.4 1190.87,638.75 1189.87,639.5 1188.87,639.34 1187.87,639.45 1186.87,639.21 1185.87,639.26 1184.87,639.27 1183.87,639.36 1182.87,639.09 1181.87,639.64 1180.87,639.48 1179.87,639.66 1178.87,638.95 1177.87,639.14 1176.86,639.18 1175.86,639.12 1174.86,639.48 1173.86,639.1 1172.86,638.75 1171.86,639.29 1170.86,639.43 1169.86,639.34 1168.86,639.39 1167.86,639.1 1166.86,638.94 1165.86,639.38 1164.86,639.09 1163.86,639.47 1162.86,639.46 1161.86,639.55 1160.86,639.65 1159.86,638.93 1158.86,639.1 1157.86,639.55 1156.86,639.37 1155.86,638.94 1154.86,638.95 1153.86,639.39 1152.86,639.64 1151.86,639.1 1150.86,638.68 1149.86,639.18 1148.86,638.84 1147.86,638.99 1146.86,639.39 1145.86,639.32 1144.85,638.81 1143.85,638.95 1142.85,639.21 1141.85,638.76 1140.85,638.58 1139.85,639.04 1138.85,639.23 1137.85,639.26 1136.85,639.2 1135.85,639.24 1134.85,638.76 1133.85,638.44 1132.85,638.61 1131.85,639 1130.85,638.97 1129.85,638.63 1128.85,638.29 1127.85,638.69 1126.85,638.64 1125.85,639 1124.85,638.46 1123.85,638.93 1122.85,638.02 1121.85,638.15 1120.85,637.89 1119.85,637.84 1118.85,638.37 1117.85,638.31 1116.85,638.32 1115.85,637.6 1114.85,637.9 1113.85,637.84 1112.84,637.14 1111.84,636.75 1110.84,636.51 1109.84,636.8 1108.84,636.61 1107.84,635.75 1106.84,636.28 1105.84,635.1 1104.84,634.95 1103.84,634.58 1102.84,634.57 1101.84,633.71 1100.84,633.92 1099.84,632.94 1098.84,631.95 1097.84,631.5 1096.84,631.29ZM1309,616.38 1310.02,616.91 1311.03,617.93 1312.05,618.95 1313.06,619.54 1314.08,619.57 1315.09,620.41 1316.11,620.4 1317.12,621.14 1318.14,621.45 1319.15,622.21 1320.17,621.62 1321.18,622.59 1322.2,622.49 1323.21,622.48 1324.23,622.98 1325.24,623.45 1326.26,623.51 1326.26,637.88 1325.24,637.8 1324.23,637.31 1323.21,637.12 1322.2,637.44 1321.18,637.25 1320.17,636.83 1319.15,636.43 1318.14,635.76 1317.12,635.47 1316.11,635.25 1315.09,635.44 1314.08,634.65 1313.06,634.13 1312.05,633.05 1311.03,632.52 1310.02,632.28 1309,630.6ZM1344.36,616.03 1345.38,616.95 1346.39,618.25 1347.41,618.49 1348.42,618.98 1349.44,619.77 1350.45,619.8 1351.47,620.31 1352.48,621.49 1353.5,621.7 1354.51,622.2 1355.53,621.53 1356.54,622.7 1357.56,622.84 1358.57,622.79 1359.59,623.35 1360.6,623.5 1361.62,623.59 1361.62,638.21 1360.6,637.61 1359.59,637.86 1358.57,637.36 1357.56,636.84 1356.54,636.65 1355.53,637.14 1354.51,636.27 1353.5,635.74 1352.48,635.52 1351.47,635.54 1350.45,635.13 1349.44,634.64 1348.42,634.22 1347.41,633.14 1346.39,633.09 1345.38,631.9 1344.36,630.48ZM1379.72,616.04 1380.74,616.88 1381.75,617.64 1382.77,618.89 1383.78,618.87 1384.8,619.55 1385.81,619.9 1386.83,620.79 1387.84,621.12 1388.86,621.76 1389.87,622.04 1390.89,622.44 1391.9,622.21 1392.92,622.29 1393.93,622.88 1394.95,622.56 1395.96,622.74 1396.98,623.51 1396.98,638.17 1395.96,637.38 1394.95,637.32 1393.93,637.13 1392.92,636.89 1391.9,637.24 1390.89,636.64 1389.87,636.57 1388.86,635.83 1387.84,636.06 1386.83,635.34 1385.81,635.29 1384.8,634.93 1383.78,634.4 1382.77,633.78 1381.75,632.27 1380.74,631.49 1379.72,631.22ZM1415.08,615.73 1416.1,617.52 1417.11,617.49 1418.13,618.65 1419.14,619.06 1420.16,619.88 1421.17,619.82 1422.19,620.35 1423.2,620.57 1424.22,621.23 1425.23,621.82 1426.25,622.22 1427.26,622.43 1428.28,622.68 1429.29,622.44 1430.31,623.27 1431.32,623.03 1432.34,623.31 1432.34,637.91 1431.32,637.65 1430.31,638.07 1429.29,637.09 1428.28,637.53 1427.26,637.39 1426.25,636.52 1425.23,636.18 1424.22,635.79 1423.2,635.94 1422.19,635.03 1421.17,635.35 1420.16,634.5 1419.14,634.43 1418.13,632.89 1417.11,632.2 1416.1,631.89 1415.08,630.66ZM1450.44,615.9 1451.44,616.45 1452.44,617.53 1453.44,617.69 1454.44,619.07 1455.44,618.81 1456.44,619.57 1457.44,620.49 1458.44,620.37 1459.44,620.27 1460.44,621.24 1461.44,621.6 1462.44,621.27 1463.44,622.1 1464.44,622.37 1465.44,621.94 1466.44,622.11 1467.45,622.42 1468.45,622.8 1469.45,623.26 1470.45,622.56 1471.45,623.21 1472.45,622.85 1473.45,623.5 1474.45,623.95 1475.45,623.09 1476.45,624.03 1477.45,623.81 1478.45,623.47 1479.45,623.85 1480.45,624.15 1481.45,623.58 1482.45,624.34 1483.45,624.06 1484.45,623.88 1485.45,623.6 1486.45,623.64 1487.45,623.64 1488.45,624.08 1489.45,624.58 1490.45,624 1491.45,624.28 1492.45,624.43 1493.45,623.98 1494.45,624.52 1495.45,624.55 1496.45,624.52 1497.45,624.53 1498.45,624.46 1499.46,624.18 1500.46,623.88 1501.46,624.79 1502.46,624.75 1503.46,623.85 1504.46,623.9 1505.46,624.65 1506.46,624.1 1507.46,624.51 1508.46,624.43 1509.46,624.06 1510.46,624.57 1511.46,624.01 1512.46,623.91 1513.46,624.06 1514.46,624.12 1515.46,624.32 1516.46,624.21 1517.46,624.04 1518.46,624.82 1519.46,624.32 1520.46,624.58 1521.46,624.01 1522.46,624.11 1523.46,623.99 1524.46,624.36 1525.46,624.28 1526.46,624.48 1527.46,624.15 1528.46,624.85 1529.46,624.86 1530.46,624.52 1531.47,624.76 1532.47,624.41 1533.47,624.59 1534.47,624.19 1535.47,624.76 1536.47,624.04 1537.47,624.48 1538.47,624.02 1539.47,624.87 1540.47,624.76 1541.47,624.25 1542.47,623.93 1543.47,624.29 1544.47,624.82 1545.47,624.18 1546.47,623.95 1547.47,623.97 1548.47,624.06 1549.47,623.91 1550.47,624.26 1551.47,624.51 1552.47,623.96 1553.47,624.18 1554.47,624.24 1555.47,623.94 1556.47,624.74 1557.47,624.53 1558.47,624.31 1559.47,624.28 1560.47,624.12 1561.47,624.4 1562.47,624.04 1563.47,624.54 1564.48,624.07 1565.48,624.34 1566.48,624.47 1567.48,624.37 1568.48,624.69 1569.48,624.3 1570.48,624.85 1571.48,624.27 1572.48,624.55 1573.48,624.04 1574.48,624.35 1575.48,624.39 1576.48,624.39 1577.48,624.32 1578.48,624.07 1579.48,624.6 1580.48,624.06 1581.48,624.81 1582.48,624.24 1583.48,624.13 1584.48,624.31 1585.48,624.47 1586.48,624.07 1587.48,624.89 1588.48,624.72 1589.48,624.57 1590.48,624.27 1591.48,624.22 1592.48,623.93 1593.48,624.87 1594.48,624.07 1595.48,624.18 1596.49,624.37 1597.49,624.82 1598.49,624.54 1599.49,623.98 1600.49,624.25 1601.49,624.72 1602.49,624.62 1603.49,624.14 1604.49,624.51 1605.49,624.52 1606.49,624.24 1607.49,624.81 1608.49,624.63 1609.49,624.75 1610.49,624.84 1611.49,624.64 1612.49,624.31 1613.49,624.86 1614.49,624.62 1615.49,624.66 1616.49,624.53 1617.49,624.14 1618.49,624.42 1619.49,624.02 1620.49,624.83 1621.49,624.21 1622.49,623.94 1623.49,624.09 1624.49,624.13 1625.49,624.04 1626.49,624.1 1627.49,624.09 1628.5,624.49 1629.5,624.13 1630.5,624.6 1631.5,624 1632.5,624.88 1633.5,624.35 1634.5,624.12 1635.5,624.52 1636.5,624.77 1637.5,624.07 1638.5,624.13 1639.5,624.11 1640.5,624.72 1641.5,624.49 1642.5,624.73 1643.5,624.66 1644.5,623.92 1644.5,638.89 1643.5,638.89 1642.5,638.81 1641.5,639.61 1640.5,639.14 1639.5,639.16 1638.5,639.19 1637.5,639.23 1636.5,639.45 1635.5,639.59 1634.5,639.13 1633.5,638.89 1632.5,639.68 1631.5,638.72 1630.5,639.63 1629.5,638.86 1628.5,639.04 1627.49,639.66 1626.49,638.92 1625.49,638.8 1624.49,639.01 1623.49,639.09 1622.49,638.94 1621.49,638.88 1620.49,639.3 1619.49,639.5 1618.49,638.76 1617.49,639.36 1616.49,639.59 1615.49,638.83 1614.49,638.74 1613.49,639.7 1612.49,639.65 1611.49,639.48 1610.49,639 1609.49,639.02 1608.49,639.64 1607.49,639.18 1606.49,638.81 1605.49,639.26 1604.49,639.52 1603.49,639.14 1602.49,639.21 1601.49,639.36 1600.49,639.52 1599.49,639.17 1598.49,639.5 1597.49,639.53 1596.49,638.83 1595.48,639.6 1594.48,639.64 1593.48,639.08 1592.48,638.79 1591.48,639.25 1590.48,639.24 1589.48,639.27 1588.48,639.47 1587.48,638.94 1586.48,639.35 1585.48,639.37 1584.48,639.47 1583.48,639.54 1582.48,638.93 1581.48,639.25 1580.48,638.99 1579.48,638.73 1578.48,639.29 1577.48,639.42 1576.48,639.56 1575.48,638.99 1574.48,639.07 1573.48,639.12 1572.48,638.95 1571.48,639.07 1570.48,638.99 1569.48,639.66 1568.48,639.33 1567.48,639.38 1566.48,638.83 1565.48,639.08 1564.48,639.53 1563.47,639.37 1562.47,639.39 1561.47,639.36 1560.47,639.54 1559.47,639.26 1558.47,639.64 1557.47,638.93 1556.47,639.25 1555.47,639.45 1554.47,638.75 1553.47,638.83 1552.47,639.25 1551.47,639.55 1550.47,639.33 1549.47,639.5 1548.47,639.46 1547.47,639.4 1546.47,638.77 1545.47,639.35 1544.47,638.95 1543.47,639.49 1542.47,638.92 1541.47,639.63 1540.47,639.1 1539.47,639.04 1538.47,639.18 1537.47,639.39 1536.47,639.51 1535.47,639.33 1534.47,639.51 1533.47,639.46 1532.47,639.1 1531.47,639.49 1530.46,638.75 1529.46,639.5 1528.46,639.17 1527.46,639.3 1526.46,638.82 1525.46,639.24 1524.46,639.23 1523.46,639.34 1522.46,639.19 1521.46,639.68 1520.46,638.82 1519.46,639.53 1518.46,639.56 1517.46,639.29 1516.46,639.37 1515.46,639.56 1514.46,639.34 1513.46,639.27 1512.46,638.79 1511.46,638.95 1510.46,638.75 1509.46,639.2 1508.46,639.57 1507.46,639.1 1506.46,639.29 1505.46,639.48 1504.46,638.98 1503.46,639.42 1502.46,638.93 1501.46,639.53 1500.46,639.01 1499.46,639.3 1498.45,639.58 1497.45,639.01 1496.45,638.86 1495.45,639.29 1494.45,638.72 1493.45,639.18 1492.45,639.01 1491.45,638.53 1490.45,638.88 1489.45,639.43 1488.45,638.6 1487.45,639.32 1486.45,638.56 1485.45,639.04 1484.45,639.18 1483.45,638.51 1482.45,638.61 1481.45,638.41 1480.45,638.45 1479.45,638.46 1478.45,638.56 1477.45,638.81 1476.45,638.89 1475.45,638.39 1474.45,638.36 1473.45,638.43 1472.45,638.07 1471.45,637.53 1470.45,637.72 1469.45,637.42 1468.45,637.61 1467.45,637.03 1466.44,637.22 1465.44,637.15 1464.44,636.88 1463.44,636.39 1462.44,635.99 1461.44,635.83 1460.44,635.9 1459.44,635.55 1458.44,635.22 1457.44,635.23 1456.44,634.04 1455.44,633.6 1454.44,633.48 1453.44,633.11 1452.44,631.98 1451.44,632.14 1450.44,631.24Z" stroke="none" fill="#f20043" stroke-width="1"/>
<path d="M-123.1,667.4V224.79M-105.5,202.44V644M-87.74,667.4V225.15M-70.14,203.58V644M-52.38,667.4V225.5M-34.78,204.71V644M-17.02,667.4V225.86M0.58,205.84V644M18.34,667.4V226.21M35.94,206.97V644M230.5,667.4V224.79M248.1,202.44V644M265.86,667.4V225.15M283.46,203.58V644M301.22,667.4V225.5M318.82,204.71V644M336.58,667.4V225.86M354.18,205.84V644M371.94,667.4V226.21M389.54,206.97V644M584.1,667.4V224.79M601.7,202.44V644M619.46,667.4V225.15M637.06,203.58V644M654.82,667.4V225.5M672.42,204.71V644M690.18,667.4V225.86M707.78,205.84V644M725.54,667.4V226.21M743.14,206.97V644M937.7,667.4V224.79M955.3,202.44V644M973.06,667.4V225.15M990.66,203.58V644M1008.42,667.4V225.5M1026.02,204.71V644M1043.78,667.4V225.86M1061.38,205.84V644M1079.14,667.4V226.21M1096.74,206.97V644M1291.3,667.4V224.79M1308.9,202.44V644M1326.66,667.4V225.15M1344.26,203.58V644M1362.02,667.4V225.5M1379.62,204.71V644M1397.38,667.4V225.86M1414.98,205.84V644M1432.74,667.4V226.21M1450.34,206.97V644" stroke="#78001d" fill="none" stroke-width="1.2"/>
<path d="M-122.9,234.34 -121.98,232.73 -121.06,231.75 -120.14,231.61 -119.22,230.91 -118.29,229.63 -117.37,229.42 -116.45,229.29 -115.53,228.9 -114.61,229.16 -113.69,228.63 -112.77,228.95 -111.85,229.31 -110.93,229.15 -110.01,228.21 -109.08,228.31 -108.16,228.53 -107.24,228.79 -106.32,228.46 -105.4,228.29 -105.4,237.67 -106.32,237.49 -107.24,237.89 -108.16,237.54 -109.08,237.9 -110.01,238.1 -110.93,237.68 -111.85,238.58 -112.77,238.6 -113.69,238.94 -114.61,238.47 -115.53,238.48 -116.45,238.88 -117.37,239.14 -118.29,239.71 -119.22,239.82 -120.14,240.76 -121.06,241.73 -121.98,241.95 -122.9,243.43ZM-87.54,235.49 -86.62,233.78 -85.7,233.19 -84.78,232.34 -83.86,231.16 -82.93,230.39 -82.01,230.62 -81.09,230.01 -80.17,229.43 -79.25,230.43 -78.33,230.3 -77.41,229.68 -76.49,229.71 -75.57,229.71 -74.65,229.98 -73.72,229.4 -72.8,229.51 -71.88,229.06 -70.96,229.07 -70.04,229.39 -70.04,238.63 -70.96,238.53 -71.88,238.32 -72.8,238.37 -73.72,238.25 -74.65,239.2 -75.57,238.41 -76.49,239.46 -77.41,239.53 -78.33,238.75 -79.25,238.75 -80.17,239.89 -81.09,239.81 -82.01,240.14 -82.93,240.68 -83.86,240.44 -84.78,241.6 -85.7,241.92 -86.62,242.52 -87.54,244.07ZM-52.18,235.35 -51.26,233.92 -50.34,232.93 -49.42,232.6 -48.5,232.43 -47.57,231.29 -46.65,231.25 -45.73,231.02 -44.81,231.2 -43.89,230.23 -42.97,229.93 -42.05,230.43 -41.13,230.17 -40.21,230.04 -39.29,230.57 -38.36,230.43 -37.44,229.69 -36.52,230.23 -35.6,230.51 -34.68,230.63 -34.68,239.44 -35.6,240 -36.52,239.85 -37.44,239.83 -38.36,239.79 -39.29,239.23 -40.21,239.9 -41.13,239.53 -42.05,239.26 -42.97,240.31 -43.89,239.74 -44.81,240.4 -45.73,239.89 -46.65,240.83 -47.57,241.57 -48.5,241.6 -49.42,242.3 -50.34,242.3 -51.26,244.23 -52.18,244.57ZM-16.82,236.32 -15.9,235.05 -14.98,234.1 -14.06,233.04 -13.14,233.02 -12.21,232.28 -11.29,232.55 -10.37,232.17 -9.45,231.25 -8.53,231.1 -7.61,231.63 -6.69,231.27 -5.77,230.54 -4.85,231.22 -3.93,230.9 -3,231.33 -2.08,231.26 -1.16,231.45 -0.24,231.17 0.68,231.42 0.68,239.89 -0.24,240.73 -1.16,240.11 -2.08,240.41 -3,240.98 -3.93,239.89 -4.85,240.62 -5.77,240.29 -6.69,240.05 -7.61,240.55 -8.53,240.38 -9.45,240.84 -10.37,241.56 -11.29,241.46 -12.21,241.86 -13.14,241.85 -14.06,243.3 -14.98,243.1 -15.9,244.44 -16.82,245.69ZM18.54,237.68 19.46,235.85 20.38,235.1 21.3,234.5 22.22,234.09 23.15,233.17 24.07,233.28 24.99,232.34 25.91,232.01 26.83,231.94 27.75,232.34 28.67,232.44 29.59,231.87 30.51,232.08 31.43,231.37 32.36,231.78 33.28,231.67 34.2,231.64 35.12,231.34 36.04,231.85 36.04,241.05 35.12,241.63 34.2,241.71 33.28,241.47 32.36,241.69 31.43,241.35 30.51,240.7 29.59,241.15 28.67,241.89 27.75,240.97 26.83,241.23 25.91,241.99 24.99,241.85 24.07,242.69 23.15,242.67 22.22,243.46 21.3,243.58 20.38,244.7 19.46,245.58 18.54,246.93ZM230.7,234.24 231.62,233.35 232.54,231.35 233.46,230.64 234.38,230.08 235.31,230.51 236.23,229.73 237.15,229.75 238.07,228.73 238.99,229.37 239.91,228.45 240.83,229.35 241.75,228.8 242.67,229.29 243.59,228.85 244.52,228.78 245.44,228.23 246.36,228.77 247.28,228.9 248.2,228.72 248.2,237.56 247.28,238.42 246.36,238.28 245.44,238.16 244.52,238.53 243.59,238.67 242.67,238.64 241.75,238.27 240.83,238.4 239.91,238.06 238.99,238 238.07,238.91 237.15,239.24 236.23,239.37 235.31,239.42 234.38,239.96 233.46,240.69 232.54,241.53 231.62,242.77 230.7,243.84ZM266.06,234.8 266.98,233.97 267.9,232.24 268.82,231.68 269.74,231.37 270.67,230.66 271.59,230.61 272.51,230.35 273.43,229.59 274.35,229.42 275.27,230.08 276.19,229.54 277.11,229.15 278.03,229 278.95,229.37 279.88,229.85 280.8,229.06 281.72,229.99 282.64,228.8 283.56,229.48 283.56,238.27 282.64,239.2 281.72,238.57 280.8,239.36 279.88,238.99 278.95,239.28 278.03,238.46 277.11,239.44 276.19,238.65 275.27,238.85 274.35,239.86 273.43,239.3 272.51,239.44 271.59,239.8 270.67,240.72 269.74,240.77 268.82,241.08 267.9,241.79 266.98,243.12 266.06,244.63ZM301.42,236.29 302.34,234.5 303.26,233.68 304.18,232.89 305.1,232.56 306.03,231.43 306.95,231.33 307.87,230.66 308.79,230.59 309.71,231.02 310.63,231.07 311.55,230.21 312.47,230.66 313.39,230.34 314.31,230.48 315.24,230.05 316.16,230.01 317.08,229.82 318,230.16 318.92,229.61 318.92,239.12 318,239.92 317.08,239.22 316.16,239.02 315.24,239.62 314.31,240.19 313.39,240.07 312.47,239.98 311.55,239.33 310.63,240.09 309.71,239.99 308.79,239.74 307.87,240.69 306.95,241.09 306.03,241.56 305.1,241.3 304.18,242.09 303.26,243.01 302.34,243.55 301.42,245.6ZM336.78,236.67 337.7,235.45 338.62,234.66 339.54,233.92 340.46,232.77 341.39,232.71 342.31,232.62 343.23,231.82 344.15,231.85 345.07,231.4 345.99,231.15 346.91,230.84 347.83,230.63 348.75,230.86 349.67,230.85 350.6,231.08 351.52,231.17 352.44,231.2 353.36,231.26 354.28,231.01 354.28,240.85 353.36,240.53 352.44,240 351.52,240.9 350.6,239.86 349.67,240.74 348.75,240.91 347.83,240.35 346.91,240.42 345.99,241.1 345.07,240.49 344.15,241.33 343.23,240.6 342.31,241.09 341.39,242.23 340.46,241.96 339.54,243.27 338.62,243.87 337.7,244.77 336.78,245.96ZM372.14,236.88 373.06,235.71 373.98,235.47 374.9,234.76 375.82,234.16 376.75,232.96 377.67,233.32 378.59,232.03 379.51,232.33 380.43,232.25 381.35,232.01 382.27,232.55 383.19,232.21 384.11,231.82 385.03,232.08 385.96,232.09 386.88,231.28 387.8,231.51 388.72,231.5 389.64,232.23 389.64,241.47 388.72,240.73 387.8,241.22 386.88,241.4 385.96,241.41 385.03,241.35 384.11,241.63 383.19,241.04 382.27,241.71 381.35,241.17 380.43,241.04 379.51,242.1 378.59,242.44 377.67,242.25 376.75,242.22 375.82,242.84 374.9,243.12 373.98,244.99 373.06,245.18 372.14,247.15ZM584.3,234.34 585.22,233.12 586.14,231.31 587.06,231.56 587.98,230.16 588.91,229.57 589.83,230.09 590.75,229.11 591.67,228.97 592.59,228.86 593.51,228.63 594.43,229.09 595.35,228.4 596.27,229.18 597.19,228.75 598.12,228.98 599.04,229.13 599.96,229.11 600.88,228.73 601.8,228.84 601.8,238.32 600.88,238.19 599.96,237.77 599.04,237.8 598.12,238.25 597.19,237.53 596.27,238.18 595.35,237.86 594.43,237.87 593.51,238.03 592.59,238.73 591.67,238.28 590.75,238.73 589.83,239.09 588.91,239.41 587.98,239.91 587.06,240.33 586.14,241.3 585.22,242.11 584.3,243.32ZM619.66,235.28 620.58,233.54 621.5,232.43 622.42,231.92 623.34,230.92 624.27,230.33 625.19,230.11 626.11,230.44 627.03,230.52 627.95,230.05 628.87,230 629.79,229.13 630.71,229.39 631.63,229.67 632.55,229.45 633.48,229.21 634.4,229.93 635.32,229.08 636.24,229.59 637.16,229.33 637.16,239.15 636.24,238.28 635.32,239.26 634.4,239.35 633.48,238.43 632.55,238.61 631.63,238.93 630.71,239.51 629.79,239.15 628.87,238.58 627.95,238.92 627.03,239.32 626.11,239.61 625.19,239.68 624.27,239.68 623.34,241.04 622.42,241.72 621.5,242.28 620.58,242.48 619.66,244.95ZM655.02,235.95 655.94,234.36 656.86,233.67 657.78,232.67 658.7,231.85 659.63,231.18 660.55,231.16 661.47,231.34 662.39,230.34 663.31,230.11 664.23,230.94 665.15,230.55 666.07,229.93 666.99,230.04 667.91,230.69 668.84,230.04 669.76,230.59 670.68,230.28 671.6,229.7 672.52,229.86 672.52,239.13 671.6,239.18 670.68,239.77 669.76,239.85 668.84,239.34 667.91,239.22 666.99,239.48 666.07,240.18 665.15,239.51 664.23,239.67 663.31,240.43 662.39,240.65 661.47,239.9 660.55,240.51 659.63,241.56 658.7,241.84 657.78,242.49 656.86,243.33 655.94,243.49 655.02,245.05ZM690.38,236.88 691.3,235.78 692.22,233.8 693.14,233.11 694.06,233.3 694.99,232.15 695.91,231.86 696.83,231.64 697.75,231.06 698.67,231.17 699.59,230.91 700.51,231.58 701.43,231.26 702.35,230.56 703.27,231.47 704.2,231.15 705.12,230.73 706.04,230.94 706.96,231.44 707.88,230.37 707.88,240.91 706.96,240.45 706.04,240.81 705.12,240.84 704.2,240.57 703.27,239.9 702.35,239.97 701.43,240.23 700.51,240.57 699.59,240.75 698.67,240.77 697.75,240.89 696.83,241.07 695.91,241.81 694.99,241.65 694.06,242.68 693.14,242.63 692.22,244.15 691.3,244.13 690.38,245.64ZM725.74,237.32 726.66,235.81 727.58,234.68 728.5,234.42 729.42,233.52 730.35,233.45 731.27,232.75 732.19,232.96 733.11,232.9 734.03,232.63 734.95,231.98 735.87,232.51 736.79,231.92 737.71,231.99 738.63,231.27 739.56,232.25 740.48,231.98 741.4,232.07 742.32,231.21 743.24,231.26 743.24,241.27 742.32,241.49 741.4,240.86 740.48,241.36 739.56,241.13 738.63,240.85 737.71,240.81 736.79,240.85 735.87,241.2 734.95,241.41 734.03,241.13 733.11,241.73 732.19,241.84 731.27,242.75 730.35,242.98 729.42,243.27 728.5,243.8 727.58,244.84 726.66,245.69 725.74,246.21ZM937.9,233.92 938.82,232.55 939.74,231.44 940.66,230.82 941.58,230.96 942.51,230.32 943.43,230.26 944.35,228.91 945.27,229.47 946.19,228.87 947.11,228.9 948.03,229.45 948.95,228.72 949.87,229.23 950.79,228.12 951.72,228.97 952.64,228.47 953.56,228.8 954.48,228.45 955.4,228.95 955.4,238 954.48,237.9 953.56,237.5 952.64,238.47 951.72,237.73 950.79,237.8 949.87,237.85 948.95,238.59 948.03,238.15 947.11,238.48 946.19,238.82 945.27,238.67 944.35,238.51 943.43,239.17 942.51,239.69 941.58,239.6 940.66,240.81 939.74,241.36 938.82,242.72 937.9,243.34ZM973.26,234.83 974.18,233.49 975.1,232.15 976.02,232.29 976.94,231.53 977.87,230.55 978.79,230.23 979.71,230.69 980.63,230.27 981.55,229.35 982.47,229.58 983.39,229.21 984.31,229.26 985.23,229.76 986.15,229.25 987.08,229.95 988,228.9 988.92,229.89 989.84,228.8 990.76,229.5 990.76,238.19 989.84,238.36 988.92,238.4 988,239.35 987.08,238.31 986.15,238.66 985.23,238.55 984.31,239.02 983.39,238.81 982.47,239.6 981.55,239.13 980.63,239.23 979.71,239.63 978.79,240.35 977.87,240.31 976.94,240.44 976.02,241.81 975.1,241.61 974.18,243.4 973.26,244.72ZM1008.62,235.52 1009.54,234.32 1010.46,233.17 1011.38,232.38 1012.3,231.57 1013.23,231.7 1014.15,231.29 1015.07,230.74 1015.99,231.39 1016.91,230.1 1017.83,230.48 1018.75,230.23 1019.67,230.07 1020.59,230.39 1021.51,230.21 1022.44,229.82 1023.36,230.12 1024.28,230.57 1025.2,230.34 1026.12,229.62 1026.12,239.53 1025.2,239.14 1024.28,240.06 1023.36,239.65 1022.44,240.03 1021.51,239.1 1020.59,240.28 1019.67,239.97 1018.75,239.44 1017.83,239.76 1016.91,240.09 1015.99,239.95 1015.07,240.96 1014.15,240.73 1013.23,241.34 1012.3,241.85 1011.38,241.97 1010.46,242.76 1009.54,243.44 1008.62,245.75ZM1043.98,236.28 1044.9,234.74 1045.82,234.69 1046.74,233.65 1047.66,232.29 1048.59,232.32 1049.51,231.94 1050.43,231.38 1051.35,232 1052.27,231.02 1053.19,230.74 1054.11,231.13 1055.03,230.89 1055.95,231.65 1056.87,231.55 1057.8,230.85 1058.72,230.47 1059.64,230.62 1060.56,231.19 1061.48,231.5 1061.48,240.81 1060.56,239.77 1059.64,240.6 1058.72,240.75 1057.8,240.79 1056.87,240.16 1055.95,240.64 1055.03,240.35 1054.11,240.13 1053.19,241.29 1052.27,241.04 1051.35,241.44 1050.43,240.71 1049.51,241.12 1048.59,242.05 1047.66,242.74 1046.74,242.63 1045.82,244.19 1044.9,244.29 1043.98,245.5ZM1079.34,237.43 1080.26,236.52 1081.18,235.11 1082.1,234.19 1083.02,233.96 1083.95,232.97 1084.87,233.37 1085.79,232.57 1086.71,232.75 1087.63,232.47 1088.55,232.3 1089.47,232.08 1090.39,231.6 1091.31,231.69 1092.23,231.72 1093.16,231.7 1094.08,231.49 1095,231.79 1095.92,231.75 1096.84,231.39 1096.84,240.77 1095.92,241.48 1095,241.13 1094.08,241.17 1093.16,241.01 1092.23,241.76 1091.31,240.77 1090.39,240.74 1089.47,240.98 1088.55,241.93 1087.63,241.18 1086.71,242.28 1085.79,241.64 1084.87,242.21 1083.95,242.52 1083.02,243.01 1082.1,243.06 1081.18,244.5 1080.26,245.93 1079.34,246.35ZM1291.5,234.23 1292.42,232.85 1293.34,232.32 1294.26,231.6 1295.18,229.95 1296.11,230.11 1297.03,229.61 1297.95,230.02 1298.87,229.48 1299.79,229.15 1300.71,228.55 1301.63,229.43 1302.55,228.4 1303.47,228.83 1304.39,228.2 1305.32,228.23 1306.24,228.3 1307.16,229.16 1308.08,228.77 1309,228.8 1309,238.26 1308.08,237.66 1307.16,238.3 1306.24,237.96 1305.32,238.26 1304.39,237.62 1303.47,237.67 1302.55,238.49 1301.63,238.63 1300.71,238.19 1299.79,238.82 1298.87,238.56 1297.95,238.78 1297.03,238.58 1296.11,239.55 1295.18,240.1 1294.26,240.86 1293.34,241.39 1292.42,242.64 1291.5,243.05ZM1326.86,235.27 1327.78,233.78 1328.7,233.23 1329.62,231.58 1330.54,231.28 1331.47,230.45 1332.39,230.73 1333.31,230.82 1334.23,230.3 1335.15,229.57 1336.07,230.22 1336.99,229.09 1337.91,229.87 1338.83,229.56 1339.75,228.96 1340.68,228.92 1341.6,229 1342.52,229.82 1343.44,228.86 1344.36,229.26 1344.36,238.45 1343.44,238.85 1342.52,238.45 1341.6,238.34 1340.68,239.2 1339.75,239.43 1338.83,238.47 1337.91,239.09 1336.99,238.6 1336.07,239.18 1335.15,238.88 1334.23,239.02 1333.31,239.99 1332.39,240.42 1331.47,239.68 1330.54,241.03 1329.62,240.79 1328.7,241.49 1327.78,242.86 1326.86,244.39ZM1362.22,236.25 1363.14,234.84 1364.06,233.02 1364.98,232.16 1365.9,232.3 1366.83,232 1367.75,231.2 1368.67,231.42 1369.59,230.88 1370.51,230.77 1371.43,230.42 1372.35,230.32 1373.27,230.91 1374.19,229.77 1375.11,229.88 1376.04,230.29 1376.96,229.73 1377.88,229.79 1378.8,230.48 1379.72,230.08 1379.72,239.26 1378.8,239.95 1377.88,239.41 1376.96,239.53 1376.04,239.53 1375.11,239.66 1374.19,239.34 1373.27,239.91 1372.35,239.72 1371.43,239.78 1370.51,239.5 1369.59,239.94 1368.67,240.7 1367.75,240.29 1366.83,241.33 1365.9,241.32 1364.98,242.08 1364.06,242.92 1363.14,244.19 1362.22,245.54ZM1397.58,236.42 1398.5,234.9 1399.42,234.47 1400.34,233.07 1401.26,232.58 1402.19,232.3 1403.11,231.98 1404.03,232.32 1404.95,232.1 1405.87,231.64 1406.79,231.05 1407.71,231.47 1408.63,231.18 1409.55,231.61 1410.47,230.48 1411.4,231.24 1412.32,231.19 1413.24,230.43 1414.16,230.37 1415.08,230.39 1415.08,240.16 1414.16,240 1413.24,239.94 1412.32,240.23 1411.4,240.28 1410.47,240.63 1409.55,240.46 1408.63,240.95 1407.71,240.01 1406.79,241.13 1405.87,240.39 1404.95,240.92 1404.03,241.34 1403.11,241.54 1402.19,241.31 1401.26,242.64 1400.34,243.08 1399.42,243.48 1398.5,244.65 1397.58,246.49ZM1432.94,237.24 1433.86,235.49 1434.78,235.43 1435.7,234.42 1436.62,233.07 1437.55,232.66 1438.47,232.68 1439.39,233.04 1440.31,232.91 1441.23,232.78 1442.15,231.93 1443.07,231.94 1443.99,232.25 1444.91,231.71 1445.83,232.09 1446.76,231.4 1447.68,231.87 1448.6,232.24 1449.52,232.3 1450.44,232.11 1450.44,241.22 1449.52,241.63 1448.6,241.42 1447.68,241.49 1446.76,241.47 1445.83,241.13 1444.91,241.65 1443.99,241.38 1443.07,241.03 1442.15,241.92 1441.23,241.24 1440.31,241.4 1439.39,242.18 1438.47,242.06 1437.55,242.1 1436.62,243.49 1435.7,243.63 1434.78,244.13 1433.86,245.05 1432.94,246.36Z" stroke="none" fill="#fa0046" stroke-width="1"/>
<path d="M-106.7,614.52 -105.68,615.69 -104.67,615.27 -103.65,616.38 -102.64,616.53 -101.62,616.32 -100.61,616.74 -99.59,616.14 -98.58,616.94 -97.56,617.43 -96.55,616.81 -95.53,616.67 -94.52,616.74 -93.5,617 -92.49,617.18 -91.47,618.04 -90.46,617.6 -89.44,617.76 -89.44,636.13 -90.46,635.53 -91.47,635.98 -92.49,635.63 -93.5,636.54 -94.52,635.95 -95.53,635.2 -96.55,635.69 -97.56,635.32 -98.58,635 -99.59,635.79 -100.61,635.16 -101.62,634.64 -102.64,634.02 -103.65,634.51 -104.67,633.89 -105.68,633.14 -106.7,632.69ZM-71.34,614.22 -70.32,615.35 -69.31,615.37 -68.29,615.6 -67.28,616.29 -66.26,616.37 -65.25,616.14 -64.23,616.63 -63.22,617.56 -62.2,617.49 -61.19,617.21 -60.17,617.53 -59.16,616.89 -58.14,617.36 -57.13,618.1 -56.11,617.17 -55.1,618.34 -54.08,618.19 -54.08,636.47 -55.1,636.05 -56.11,636.34 -57.13,635.32 -58.14,635.27 -59.16,635.41 -60.17,635.29 -61.19,635.9 -62.2,635.97 -63.22,635.77 -64.23,634.75 -65.25,635.38 -66.26,634.62 -67.28,634.81 -68.29,633.88 -69.31,633.25 -70.32,633.24 -71.34,633.21ZM-35.98,614.55 -34.96,615.6 -33.95,615.14 -32.93,615.58 -31.92,616.16 -30.9,615.73 -29.89,615.89 -28.87,616.94 -27.86,616.74 -26.84,616.48 -25.83,616.89 -24.81,617.57 -23.8,617.76 -22.78,617.48 -21.77,617.16 -20.75,618.08 -19.74,617.25 -18.72,618.07 -18.72,636 -19.74,636.61 -20.75,635.74 -21.77,635.99 -22.78,636.54 -23.8,635.71 -24.81,636.06 -25.83,635.48 -26.84,634.89 -27.86,635.59 -28.87,635.23 -29.89,635.18 -30.9,634.83 -31.92,634.38 -32.93,634.17 -33.95,634.2 -34.96,634.03 -35.98,632.47ZM-0.62,614.46 0.4,614.35 1.41,615.3 2.43,615.32 3.44,615.54 4.46,616.77 5.47,615.89 6.49,616.23 7.5,617.15 8.52,617.16 9.53,617.09 10.55,617.73 11.56,617.03 12.58,617.07 13.59,617.57 14.61,617.06 15.62,617.93 16.64,618.32 16.64,635.47 15.62,636.1 14.61,636.43 13.59,635.26 12.58,636.57 11.56,635.5 10.55,636.26 9.53,634.98 8.52,635.14 7.5,634.99 6.49,635.37 5.47,635.09 4.46,635.21 3.44,635.03 2.43,634.06 1.41,633.22 0.4,633.95 -0.62,633.39ZM34.74,614.22 35.74,614.99 36.74,615.8 37.74,616.17 38.74,615.86 39.74,615.34 40.74,615.9 41.74,616.62 42.74,617.16 43.74,616.22 44.74,617.31 45.74,617.51 46.74,616.51 47.74,617.75 48.74,617.4 49.74,617.83 50.74,617.65 51.75,617.72 52.75,618.05 53.75,617.95 54.75,617.5 55.75,617.5 56.75,618.35 57.75,617.4 58.75,617.59 59.75,617.29 60.75,617.58 61.75,617.94 62.75,617.42 63.75,617.76 64.75,618.03 65.75,617.73 66.75,618.26 67.75,617.93 68.75,617.68 69.75,618.24 70.75,618.01 71.75,617.88 72.75,617.47 73.75,618.64 74.75,617.5 75.75,617.8 76.75,618.09 77.75,618.58 78.75,617.7 79.75,617.44 80.75,618.27 81.75,618.61 82.75,617.92 83.76,618.68 84.76,617.74 85.76,618.52 86.76,617.29 87.76,618.24 88.76,618.53 89.76,617.68 90.76,618.48 91.76,618.13 92.76,617.74 93.76,617.36 94.76,618.22 95.76,617.82 96.76,618.06 97.76,617.57 98.76,617.32 99.76,617.43 100.76,618.2 101.76,617.48 102.76,617.71 103.76,618.13 104.76,617.68 105.76,617.96 106.76,617.88 107.76,618.39 108.76,617.86 109.76,617.7 110.76,618.68 111.76,617.54 112.76,618.2 113.76,618.17 114.76,617.79 115.77,618.34 116.77,618.35 117.77,617.97 118.77,617.75 119.77,617.46 120.77,618.52 121.77,618.68 122.77,617.69 123.77,617.75 124.77,618.2 125.77,618.39 126.77,618.48 127.77,618.37 128.77,618.25 129.77,618.17 130.77,617.32 131.77,617.99 132.77,618.29 133.77,617.72 134.77,617.65 135.77,617.88 136.77,618.06 137.77,617.32 138.77,618.35 139.77,618.29 140.77,617.61 141.77,617.65 142.77,617.54 143.77,617.88 144.77,618.64 145.77,617.85 146.77,618.6 147.77,617.55 148.78,617.64 149.78,618.01 150.78,617.51 151.78,617.46 152.78,618.24 153.78,617.78 154.78,618.28 155.78,617.62 156.78,617.72 157.78,618.55 158.78,618.11 159.78,617.47 160.78,617.89 161.78,617.44 162.78,617.39 163.78,618.09 164.78,617.46 165.78,617.6 166.78,617.4 167.78,617.46 168.78,617.93 169.78,617.53 170.78,617.74 171.78,617.91 172.78,617.57 173.78,617.49 174.78,617.51 175.78,618.62 176.78,617.79 177.78,617.94 178.78,618.35 179.78,618.4 180.79,618.27 181.79,618.55 182.79,618.05 183.79,617.53 184.79,618.16 185.79,617.93 186.79,618.46 187.79,617.64 188.79,618.25 189.79,617.31 190.79,617.84 191.79,617.78 192.79,617.43 193.79,618.45 194.79,618.46 195.79,617.65 196.79,618.3 197.79,618.56 198.79,618.11 199.79,617.82 200.79,618.26 201.79,617.85 202.79,618.1 203.79,618.23 204.79,617.71 205.79,618.23 206.79,618.01 207.79,618.13 208.79,617.7 209.79,618.34 210.79,617.51 211.79,617.97 212.8,618.04 213.8,617.31 214.8,618.42 215.8,618.08 216.8,617.41 217.8,618.49 218.8,618.29 219.8,618.58 220.8,618.25 221.8,618 222.8,618.41 223.8,617.8 224.8,617.91 225.8,617.8 226.8,617.76 227.8,618.62 228.8,618.01 228.8,636.63 227.8,636.94 226.8,636.79 225.8,636.1 224.8,635.89 223.8,636.82 222.8,636.31 221.8,636.47 220.8,636.64 219.8,636.74 218.8,636.72 217.8,636.54 216.8,636.61 215.8,635.76 214.8,637.01 213.8,635.92 212.8,636.32 211.79,636.52 210.79,637.04 209.79,635.81 208.79,635.72 207.79,636.14 206.79,636.24 205.79,637.06 204.79,636.89 203.79,637.07 202.79,636.23 201.79,636.42 200.79,636.24 199.79,637.09 198.79,636.67 197.79,635.82 196.79,636.42 195.79,636.34 194.79,635.82 193.79,636.56 192.79,635.77 191.79,636.15 190.79,635.78 189.79,635.91 188.79,635.92 187.79,637.06 186.79,636.61 185.79,636.81 184.79,635.93 183.79,636 182.79,636.91 181.79,636.5 180.79,635.75 179.78,636.87 178.78,636.1 177.78,636.93 176.78,637.06 175.78,636.09 174.78,636.14 173.78,635.96 172.78,636.2 171.78,636.05 170.78,636.08 169.78,636.91 168.78,635.72 167.78,636.17 166.78,636.16 165.78,636.57 164.78,636.27 163.78,637.02 162.78,635.85 161.78,636.51 160.78,635.72 159.78,636.19 158.78,635.77 157.78,636.97 156.78,636.55 155.78,635.77 154.78,636.38 153.78,636.82 152.78,636.63 151.78,636.16 150.78,635.88 149.78,635.79 148.78,636.13 147.77,636.43 146.77,635.9 145.77,636.28 144.77,636.15 143.77,635.79 142.77,636.45 141.77,636.19 140.77,636.22 139.77,636.41 138.77,636.48 137.77,635.77 136.77,636.7 135.77,635.96 134.77,635.81 133.77,635.97 132.77,636.77 131.77,636.23 130.77,636.18 129.77,636.02 128.77,636.69 127.77,636.05 126.77,636 125.77,636.42 124.77,636.63 123.77,635.8 122.77,636.63 121.77,636.38 120.77,636.98 119.77,636.87 118.77,636.83 117.77,636.77 116.77,636.4 115.77,635.85 114.76,636.59 113.76,636.94 112.76,636.03 111.76,635.96 110.76,636.33 109.76,636.74 108.76,637 107.76,636.63 106.76,636.77 105.76,636.03 104.76,636.37 103.76,636.09 102.76,636.03 101.76,636.25 100.76,636.81 99.76,636.38 98.76,636.25 97.76,637.02 96.76,636.95 95.76,636.42 94.76,636.08 93.76,636.45 92.76,637.05 91.76,636.88 90.76,636.91 89.76,636.28 88.76,636.97 87.76,635.93 86.76,635.79 85.76,635.87 84.76,636.69 83.76,636.97 82.75,636.08 81.75,635.95 80.75,635.82 79.75,637.03 78.75,636.53 77.75,636.32 76.75,636.97 75.75,636.06 74.75,635.9 73.75,635.78 72.75,636.52 71.75,636.49 70.75,636.42 69.75,636.49 68.75,636.62 67.75,636.51 66.75,636.41 65.75,635.65 64.75,636.8 63.75,636.89 62.75,635.76 61.75,635.84 60.75,636.85 59.75,636.29 58.75,635.88 57.75,636.69 56.75,636.45 55.75,636.1 54.75,636.52 53.75,636.58 52.75,635.47 51.75,635.91 50.74,636.08 49.74,636.25 48.74,636.22 47.74,636.04 46.74,635.43 45.74,635.34 44.74,634.95 43.74,634.94 42.74,635.44 41.74,634.94 40.74,634.59 39.74,634.73 38.74,634.8 37.74,633.53 36.74,633.37 35.74,633.11 34.74,632.93ZM246.9,615.1 247.92,615.15 248.93,615.44 249.95,616.46 250.96,616.34 251.98,616.6 252.99,617.24 254.01,616.93 255.02,616.22 256.04,617.31 257.05,617.37 258.07,617.62 259.08,618.06 260.1,617.81 261.11,618.24 262.13,618.01 263.14,618.33 264.16,617.62 264.16,636.4 263.14,636.28 262.13,635.71 261.11,635.27 260.1,635.83 259.08,635.9 258.07,635.8 257.05,636.27 256.04,635.47 255.02,635.2 254.01,634.49 252.99,634.64 251.98,634.59 250.96,634.71 249.95,634.67 248.93,634.36 247.92,633.49 246.9,632.6ZM282.26,614.94 283.28,615.4 284.29,614.87 285.31,615.82 286.32,616.28 287.34,616.24 288.35,617.05 289.37,616.2 290.38,617 291.4,617.37 292.41,617.86 293.43,616.61 294.44,617.71 295.46,617.25 296.47,617.89 297.49,617.65 298.5,618.05 299.52,617.24 299.52,635.75 298.5,635.92 297.49,636.01 296.47,635.6 295.46,636.09 294.44,635.73 293.43,636.04 292.41,636.2 291.4,635.23 290.38,635.31 289.37,635.74 288.35,635.2 287.34,634.51 286.32,633.96 285.31,633.88 284.29,634.24 283.28,633.26 282.26,633.53ZM317.62,613.96 318.64,615.24 319.65,615.31 320.67,615.59 321.68,615.84 322.7,616.89 323.71,616.21 324.73,616.93 325.74,616.26 326.76,617.71 327.77,617.61 328.79,617.57 329.8,617.42 330.82,617.28 331.83,617.46 332.85,617.83 333.86,617.67 334.88,618.26 334.88,636.31 333.86,636.42 332.85,635.82 331.83,635.99 330.82,635.4 329.8,636.03 328.79,635.51 327.77,635.19 326.76,635.19 325.74,635.65 324.73,635.57 323.71,635.54 322.7,634.4 321.68,633.95 320.67,633.67 319.65,633.54 318.64,633.93 317.62,632.71ZM352.98,614.46 354,615.56 355.01,615.51 356.03,615.53 357.04,615.52 358.06,616.97 359.07,615.88 360.09,616.75 361.1,616.74 362.12,617.44 363.13,617.32 364.15,617.91 365.16,618.03 366.18,617.79 367.19,617.51 368.21,617.66 369.22,618.25 370.24,618.04 370.24,636.55 369.22,636.27 368.21,635.67 367.19,636.56 366.18,635.49 365.16,635.64 364.15,635.61 363.13,636.26 362.12,635.99 361.1,634.64 360.09,634.6 359.07,635.31 358.06,634.57 357.04,634.82 356.03,634.63 355.01,633.64 354,634.03 352.98,633.3ZM388.34,614.9 389.34,614.42 390.34,615.77 391.34,615.04 392.34,615.18 393.34,615.81 394.34,616.6 395.34,616.79 396.34,617.08 397.34,616.27 398.34,616.46 399.34,616.56 400.34,616.67 401.34,617.07 402.34,617.96 403.34,617.59 404.34,617.19 405.35,618.12 406.35,617.62 407.35,616.93 408.35,617.03 409.35,617.74 410.35,617.27 411.35,617.41 412.35,617.58 413.35,617.92 414.35,618.41 415.35,617.25 416.35,618.44 417.35,617.76 418.35,617.61 419.35,617.59 420.35,617.7 421.35,617.8 422.35,617.78 423.35,618.41 424.35,617.71 425.35,617.58 426.35,618.55 427.35,618.34 428.35,617.3 429.35,618.04 430.35,618.14 431.35,617.48 432.35,617.74 433.35,617.53 434.35,617.4 435.35,618 436.35,617.39 437.36,617.93 438.36,617.96 439.36,618.12 440.36,618.49 441.36,617.33 442.36,617.54 443.36,618.23 444.36,617.89 445.36,617.55 446.36,617.56 447.36,617.56 448.36,618.58 449.36,617.83 450.36,618.1 451.36,618.1 452.36,618.35 453.36,617.97 454.36,617.84 455.36,618.3 456.36,617.75 457.36,617.44 458.36,618.7 459.36,618.6 460.36,617.94 461.36,618.31 462.36,618.44 463.36,617.83 464.36,617.55 465.36,617.52 466.36,618.53 467.36,618.69 468.36,617.93 469.37,618.67 470.37,617.96 471.37,617.93 472.37,617.68 473.37,618.09 474.37,617.85 475.37,618.51 476.37,618.63 477.37,618.3 478.37,617.91 479.37,617.81 480.37,618.66 481.37,618.25 482.37,618.18 483.37,617.3 484.37,618.68 485.37,617.77 486.37,618 487.37,617.53 488.37,618.65 489.37,618.54 490.37,617.85 491.37,618.42 492.37,618.7 493.37,618.52 494.37,617.44 495.37,617.41 496.37,617.78 497.37,617.98 498.37,617.63 499.37,617.52 500.37,617.62 501.37,618.64 502.38,618.43 503.38,617.52 504.38,617.9 505.38,618.48 506.38,617.68 507.38,618.03 508.38,617.7 509.38,618.6 510.38,618.02 511.38,617.73 512.38,618.33 513.38,617.63 514.38,617.66 515.38,618.6 516.38,618.55 517.38,617.55 518.38,617.44 519.38,618.53 520.38,617.9 521.38,618.38 522.38,617.79 523.38,617.39 524.38,617.47 525.38,617.95 526.38,618.34 527.38,618.58 528.38,617.73 529.38,617.89 530.38,618.3 531.38,618.27 532.38,618.39 533.38,618.35 534.39,618.04 535.39,618.36 536.39,617.93 537.39,618.39 538.39,617.94 539.39,617.46 540.39,618.43 541.39,617.52 542.39,618.06 543.39,618.33 544.39,618.18 545.39,618.09 546.39,618.67 547.39,617.67 548.39,618 549.39,618.34 550.39,618.67 551.39,617.63 552.39,617.35 553.39,618.43 554.39,618.2 555.39,617.93 556.39,618.58 557.39,618.67 558.39,617.82 559.39,617.89 560.39,618.08 561.39,617.84 562.39,617.92 563.39,617.63 564.39,618.47 565.39,617.92 566.4,618.57 567.4,618.45 568.4,618 569.4,617.58 570.4,617.32 571.4,617.69 572.4,618.44 573.4,618.08 574.4,618.38 575.4,617.44 576.4,618.36 577.4,618.68 578.4,617.34 579.4,617.49 580.4,618.5 581.4,617.83 582.4,617.75 582.4,635.71 581.4,636.13 580.4,636.96 579.4,636.32 578.4,635.76 577.4,636.6 576.4,637.04 575.4,636.95 574.4,636.62 573.4,636.14 572.4,635.85 571.4,637.03 570.4,636.06 569.4,635.78 568.4,635.8 567.4,636.51 566.4,636.35 565.39,636.95 564.39,636.63 563.39,635.96 562.39,636.51 561.39,636.79 560.39,636.21 559.39,636.58 558.39,636.96 557.39,636.38 556.39,636.66 555.39,636.35 554.39,636.31 553.39,636.28 552.39,636.65 551.39,636.82 550.39,635.85 549.39,636.53 548.39,636.57 547.39,635.98 546.39,636.12 545.39,635.73 544.39,636.29 543.39,636.94 542.39,636.68 541.39,636.94 540.39,636.21 539.39,636.31 538.39,637.03 537.39,637.03 536.39,636.3 535.39,636.29 534.39,636 533.38,636.16 532.38,635.98 531.38,635.76 530.38,636.05 529.38,637.05 528.38,636.73 527.38,636.47 526.38,636.25 525.38,635.95 524.38,636.7 523.38,635.72 522.38,636.55 521.38,637.05 520.38,635.8 519.38,635.97 518.38,636.42 517.38,636.05 516.38,636.05 515.38,635.85 514.38,636.1 513.38,636.8 512.38,636.69 511.38,636.13 510.38,636.13 509.38,637.09 508.38,636.79 507.38,636.48 506.38,635.75 505.38,636.05 504.38,636.67 503.38,636.55 502.38,635.92 501.37,635.7 500.37,636.87 499.37,635.93 498.37,636.22 497.37,637.05 496.37,636.57 495.37,636.82 494.37,636.12 493.37,636.49 492.37,636.83 491.37,636.73 490.37,636.66 489.37,636.2 488.37,636.26 487.37,636.22 486.37,636.7 485.37,636.78 484.37,636.9 483.37,636.22 482.37,636.37 481.37,636.49 480.37,636.22 479.37,636.68 478.37,637 477.37,637.07 476.37,636.24 475.37,636.26 474.37,636.03 473.37,636.01 472.37,635.79 471.37,636.42 470.37,636.37 469.37,636.39 468.36,636.41 467.36,636.62 466.36,636.04 465.36,636.95 464.36,636.9 463.36,635.76 462.36,636.02 461.36,636.39 460.36,636.8 459.36,636.99 458.36,637.02 457.36,635.77 456.36,636 455.36,636.82 454.36,636.4 453.36,636.99 452.36,636.41 451.36,636.14 450.36,636.93 449.36,635.98 448.36,636.93 447.36,636.55 446.36,636.95 445.36,636.84 444.36,635.88 443.36,636.54 442.36,636.01 441.36,636.24 440.36,637.05 439.36,637.08 438.36,636.66 437.36,635.79 436.35,635.98 435.35,636.34 434.35,635.71 433.35,636.73 432.35,636.82 431.35,636.9 430.35,636.96 429.35,637.01 428.35,635.87 427.35,636.61 426.35,636.22 425.35,636.75 424.35,635.68 423.35,636.61 422.35,635.88 421.35,636.64 420.35,636.3 419.35,636.25 418.35,636.44 417.35,636.37 416.35,636.05 415.35,636.35 414.35,635.74 413.35,636.73 412.35,635.62 411.35,635.5 410.35,636.72 409.35,635.74 408.35,636.4 407.35,635.6 406.35,636.42 405.35,635.51 404.34,635.98 403.34,636.02 402.34,636.25 401.34,635.39 400.34,635.19 399.34,634.77 398.34,635.49 397.34,635.14 396.34,634.73 395.34,635.27 394.34,634.62 393.34,633.84 392.34,634.28 391.34,633.56 390.34,634.3 389.34,633.82 388.34,633.41ZM600.5,613.86 601.52,614.64 602.53,615.67 603.55,616.41 604.56,615.51 605.58,616.32 606.59,616.82 607.61,617.05 608.62,616.74 609.64,617.1 610.65,617.71 611.67,618 612.68,617.39 613.7,617.82 614.71,617.79 615.73,617.68 616.74,617.64 617.76,618.16 617.76,636.1 616.74,636.13 615.73,636.31 614.71,635.31 613.7,635.91 612.68,636.1 611.67,635.47 610.65,635.89 609.64,635.53 608.62,635.73 607.61,635.42 606.59,634.31 605.58,634.6 604.56,634.35 603.55,633.55 602.53,633.99 601.52,633.83 600.5,633.18ZM635.86,614.69 636.88,615.12 637.89,614.96 638.91,615.09 639.92,616.64 640.94,616.78 641.95,616.46 642.97,616.17 643.98,616.96 645,616.98 646.01,617.42 647.03,616.99 648.04,617.18 649.06,617.68 650.07,617.87 651.09,617.22 652.1,617.52 653.12,618.09 653.12,636.11 652.1,636.72 651.09,635.33 650.07,636.43 649.06,635.25 648.04,636.21 647.03,635.84 646.01,635.02 645,635.92 643.98,634.74 642.97,634.91 641.95,635.31 640.94,635.33 639.92,633.83 638.91,634.43 637.89,633.59 636.88,632.93 635.86,633.12ZM671.22,613.93 672.24,615.49 673.25,615.12 674.27,615.72 675.28,616.19 676.3,615.65 677.31,617.23 678.33,616.33 679.34,617.26 680.36,617.57 681.37,616.66 682.39,617.54 683.4,617.29 684.42,617.19 685.43,617.36 686.45,617.77 687.46,618.01 688.48,618.32 688.48,636.35 687.46,635.73 686.45,636.06 685.43,635.8 684.42,636.4 683.4,636.15 682.39,635.07 681.37,635 680.36,635.63 679.34,635.02 678.33,634.66 677.31,635 676.3,634.18 675.28,634.29 674.27,633.72 673.25,633.85 672.24,633.58 671.22,632.67ZM706.58,614.5 707.6,615.06 708.61,615.49 709.63,615.92 710.64,616.58 711.66,615.94 712.67,617.22 713.69,616.66 714.7,617.42 715.72,617.36 716.73,617.43 717.75,616.87 718.76,617.91 719.78,616.91 720.79,617.29 721.81,617.06 722.82,617.36 723.84,618.19 723.84,636 722.82,636.65 721.81,635.95 720.79,636.27 719.78,635.29 718.76,636.4 717.75,636.32 716.73,636.13 715.72,635.93 714.7,635.12 713.69,635.29 712.67,634.89 711.66,635.35 710.64,634.68 709.63,634.2 708.61,633.35 707.6,633.87 706.58,633.44ZM741.94,614.25 742.94,614.25 743.94,614.76 744.94,614.85 745.94,615.39 746.94,616.23 747.94,616.02 748.94,615.72 749.94,616.34 750.94,616.5 751.94,616.53 752.94,617.31 753.94,616.58 754.94,617.25 755.94,616.6 756.94,617.29 757.94,617.79 758.95,617.24 759.95,616.97 760.95,617.66 761.95,618.29 762.95,617.97 763.95,617.65 764.95,617.85 765.95,617.54 766.95,617.64 767.95,618.26 768.95,618.36 769.95,617.9 770.95,618.21 771.95,618.34 772.95,618.04 773.95,618.49 774.95,618.04 775.95,617.98 776.95,618.25 777.95,618.1 778.95,618.49 779.95,618.35 780.95,618.01 781.95,618.24 782.95,618.51 783.95,617.86 784.95,617.74 785.95,618.45 786.95,617.41 787.95,618.01 788.95,617.35 789.95,618.28 790.96,618.58 791.96,618.63 792.96,617.81 793.96,618.48 794.96,618.2 795.96,617.61 796.96,617.37 797.96,618.13 798.96,617.78 799.96,618.52 800.96,618.6 801.96,618.09 802.96,618.15 803.96,617.48 804.96,617.77 805.96,618.43 806.96,617.99 807.96,617.74 808.96,618.04 809.96,618 810.96,617.95 811.96,617.95 812.96,618.07 813.96,618.62 814.96,618.52 815.96,618.05 816.96,617.36 817.96,618.52 818.96,618.19 819.96,617.47 820.96,618.53 821.96,618.03 822.97,617.62 823.97,618.42 824.97,617.68 825.97,618.46 826.97,618.16 827.97,617.76 828.97,617.74 829.97,617.68 830.97,617.51 831.97,617.64 832.97,617.79 833.97,617.69 834.97,617.89 835.97,617.76 836.97,618.46 837.97,618.06 838.97,617.54 839.97,618.07 840.97,617.66 841.97,618.32 842.97,617.93 843.97,618.62 844.97,617.42 845.97,617.53 846.97,618.3 847.97,617.62 848.97,617.37 849.97,618.07 850.97,618.57 851.97,617.94 852.97,618.01 853.97,617.3 854.97,618.41 855.98,618.69 856.98,617.35 857.98,617.56 858.98,617.56 859.98,618.46 860.98,618.67 861.98,618.62 862.98,617.6 863.98,617.77 864.98,618.26 865.98,617.65 866.98,618.58 867.98,617.85 868.98,617.64 869.98,617.55 870.98,618.65 871.98,617.5 872.98,618.67 873.98,617.44 874.98,618.44 875.98,617.74 876.98,618.59 877.98,618.6 878.98,618.6 879.98,617.68 880.98,617.39 881.98,618.67 882.98,618.14 883.98,617.6 884.98,617.97 885.98,618.58 886.98,617.42 887.99,618.14 888.99,617.33 889.99,617.85 890.99,618.24 891.99,617.87 892.99,618.34 893.99,617.9 894.99,618.08 895.99,617.84 896.99,617.98 897.99,617.88 898.99,617.64 899.99,617.5 900.99,618.26 901.99,617.57 902.99,617.34 903.99,618.65 904.99,617.53 905.99,617.44 906.99,618.12 907.99,617.87 908.99,618.32 909.99,618.09 910.99,618.1 911.99,618.23 912.99,617.53 913.99,618.37 914.99,617.86 915.99,618.31 916.99,618.05 917.99,617.44 918.99,617.63 920,617.86 921,617.3 922,618.06 923,617.41 924,618.03 925,618.68 926,618.57 927,618.2 928,617.39 929,617.89 930,617.76 931,617.58 932,618.5 933,617.8 934,617.67 935,618.37 936,617.55 936,637.06 935,635.81 934,636 933,636.56 932,636.22 931,635.99 930,635.86 929,636.5 928,636.78 927,636.97 926,636.49 925,636.19 924,636.98 923,636.67 922,635.73 921,636.42 920,636.35 918.99,635.86 917.99,636.1 916.99,636.98 915.99,636.35 914.99,636.39 913.99,636.06 912.99,635.76 911.99,636.06 910.99,636.04 909.99,637.09 908.99,636.17 907.99,636.99 906.99,636.53 905.99,635.86 904.99,637.01 903.99,636.41 902.99,636.05 901.99,636.52 900.99,636.73 899.99,635.87 898.99,635.95 897.99,636.71 896.99,636.88 895.99,636.93 894.99,636.7 893.99,635.78 892.99,635.99 891.99,636.47 890.99,636.58 889.99,636.02 888.99,636.01 887.99,635.74 886.98,636.36 885.98,636.72 884.98,636.84 883.98,636.44 882.98,636.75 881.98,635.76 880.98,636.57 879.98,636.12 878.98,635.79 877.98,636.36 876.98,636 875.98,635.87 874.98,636.57 873.98,636.83 872.98,636.17 871.98,635.76 870.98,636.62 869.98,636.86 868.98,635.93 867.98,637.03 866.98,635.89 865.98,636.26 864.98,636.71 863.98,635.83 862.98,636.04 861.98,636.54 860.98,636.97 859.98,636.13 858.98,635.72 857.98,636.27 856.98,636.19 855.98,635.74 854.97,636.74 853.97,635.92 852.97,636.49 851.97,636.98 850.97,636.01 849.97,636.52 848.97,636.78 847.97,636.42 846.97,636.21 845.97,636.35 844.97,637.02 843.97,636.03 842.97,636.83 841.97,635.87 840.97,636.1 839.97,636.26 838.97,636.25 837.97,637.03 836.97,637.03 835.97,635.76 834.97,636.16 833.97,635.85 832.97,636.09 831.97,635.91 830.97,635.91 829.97,636.25 828.97,636.73 827.97,636.96 826.97,636.07 825.97,636 824.97,636.44 823.97,636.62 822.97,636.88 821.96,636.78 820.96,637.04 819.96,636.98 818.96,636.09 817.96,636.05 816.96,637.03 815.96,635.77 814.96,636.28 813.96,636.99 812.96,636.47 811.96,637.09 810.96,635.82 809.96,636.76 808.96,637.03 807.96,636.45 806.96,636.78 805.96,635.83 804.96,636.92 803.96,636.44 802.96,635.9 801.96,635.93 800.96,636.54 799.96,636.73 798.96,636.02 797.96,636.53 796.96,636.2 795.96,635.88 794.96,636.03 793.96,637.08 792.96,636.83 791.96,636.99 790.96,637.01 789.95,636.26 788.95,636.78 787.95,636.09 786.95,636.38 785.95,636.2 784.95,636.06 783.95,635.87 782.95,636.15 781.95,636.78 780.95,636.13 779.95,636.64 778.95,636.98 777.95,636.43 776.95,636.31 775.95,636.99 774.95,636.55 773.95,636.09 772.95,635.99 771.95,635.76 770.95,636.75 769.95,635.85 768.95,635.54 767.95,636.62 766.95,635.91 765.95,635.66 764.95,635.89 763.95,635.49 762.95,636.09 761.95,636.24 760.95,635.62 759.95,636.12 758.95,635.45 757.94,636.01 756.94,636.15 755.94,635.64 754.94,636.19 753.94,634.96 752.94,635.42 751.94,635.11 750.94,635.81 749.94,634.33 748.94,634.22 747.94,635.17 746.94,634 745.94,634.71 744.94,633.78 743.94,633.74 742.94,633.01 741.94,633.18ZM954.1,614 955.12,614.85 956.13,615.25 957.15,616.12 958.16,615.41 959.18,615.95 960.19,616.01 961.21,616.33 962.22,617.26 963.24,617.02 964.25,617.29 965.27,617.69 966.28,616.88 967.3,617.08 968.31,617.56 969.33,617.32 970.34,617.31 971.36,618.33 971.36,635.6 970.34,635.38 969.33,636.48 968.31,635.69 967.3,636.03 966.28,635.18 965.27,636 964.25,635.56 963.24,635.83 962.22,635.38 961.21,635.74 960.19,635.07 959.18,634.29 958.16,633.79 957.15,633.92 956.13,634.13 955.12,633.99 954.1,632.59ZM989.46,615.22 990.48,614.47 991.49,615.29 992.51,616.46 993.52,615.57 994.54,616.44 995.55,617.19 996.57,616.5 997.58,616.57 998.6,616.38 999.61,616.53 1000.63,617.9 1001.64,617.33 1002.66,617.14 1003.67,617 1004.69,617.95 1005.7,618.06 1006.72,618.35 1006.72,635.86 1005.7,635.61 1004.69,636.23 1003.67,636.21 1002.66,636.16 1001.64,635.91 1000.63,635.68 999.61,634.92 998.6,635.42 997.58,635.77 996.57,635.13 995.55,635.65 994.54,634.04 993.52,634.09 992.51,633.59 991.49,633.14 990.48,633.26 989.46,632.59ZM1024.82,614.52 1025.84,615.24 1026.85,616.11 1027.87,615.09 1028.88,616.25 1029.9,616.87 1030.91,616.12 1031.93,617.22 1032.94,617.54 1033.96,617.22 1034.97,617.76 1035.99,616.81 1037,616.73 1038.02,617.58 1039.03,617.61 1040.05,618.08 1041.06,617.85 1042.08,617.04 1042.08,636.19 1041.06,635.57 1040.05,635.39 1039.03,636.33 1038.02,636.48 1037,636.36 1035.99,635.65 1034.97,634.97 1033.96,635.37 1032.94,634.91 1031.93,634.87 1030.91,635.2 1029.9,635.42 1028.88,634.87 1027.87,634.77 1026.85,633.6 1025.84,633.27 1024.82,632.36ZM1060.18,614.82 1061.2,615.58 1062.21,614.82 1063.23,615.54 1064.24,616.63 1065.26,616.92 1066.27,615.86 1067.29,616.1 1068.3,617.55 1069.32,617.6 1070.33,617.72 1071.35,617.52 1072.36,616.82 1073.38,618.1 1074.39,617.83 1075.41,617.74 1076.42,617.6 1077.44,618.03 1077.44,635.76 1076.42,636.49 1075.41,636.49 1074.39,635.49 1073.38,635.96 1072.36,635.54 1071.35,635.99 1070.33,634.95 1069.32,635.45 1068.3,635.22 1067.29,634.52 1066.27,635.02 1065.26,635.19 1064.24,634.07 1063.23,634.59 1062.21,634.33 1061.2,633.49 1060.18,632.99ZM1095.54,614.94 1096.54,615.27 1097.54,615.63 1098.54,615.96 1099.54,615.13 1100.54,616.03 1101.54,616.48 1102.54,615.72 1103.54,616.35 1104.54,616.55 1105.54,617.36 1106.54,616.64 1107.54,616.53 1108.54,617.18 1109.54,617.71 1110.54,616.75 1111.54,617.07 1112.55,617.8 1113.55,617.26 1114.55,617.26 1115.55,618.32 1116.55,617.33 1117.55,617.62 1118.55,617.1 1119.55,617.54 1120.55,617.62 1121.55,618.14 1122.55,618.4 1123.55,617.19 1124.55,618.56 1125.55,617.31 1126.55,618.41 1127.55,618.4 1128.55,618.22 1129.55,618.27 1130.55,617.94 1131.55,617.74 1132.55,617.28 1133.55,618.08 1134.55,618.4 1135.55,617.88 1136.55,617.27 1137.55,618.19 1138.55,617.56 1139.55,618.56 1140.55,617.67 1141.55,618.19 1142.55,618.34 1143.55,618.54 1144.56,618.36 1145.56,618.52 1146.56,617.35 1147.56,618.36 1148.56,618.02 1149.56,617.92 1150.56,617.7 1151.56,617.38 1152.56,617.29 1153.56,618.26 1154.56,617.48 1155.56,618.32 1156.56,617.38 1157.56,618.04 1158.56,618.3 1159.56,617.75 1160.56,618.52 1161.56,618.67 1162.56,617.66 1163.56,617.36 1164.56,617.48 1165.56,617.58 1166.56,617.72 1167.56,618.65 1168.56,618.62 1169.56,617.79 1170.56,618.27 1171.56,618.27 1172.56,617.32 1173.56,618.2 1174.56,617.96 1175.56,617.55 1176.57,617.46 1177.57,618.08 1178.57,618.67 1179.57,617.49 1180.57,617.9 1181.57,617.32 1182.57,617.72 1183.57,618.5 1184.57,618.19 1185.57,617.73 1186.57,617.51 1187.57,618.53 1188.57,618.59 1189.57,617.92 1190.57,618.36 1191.57,618.18 1192.57,618.06 1193.57,617.95 1194.57,617.41 1195.57,617.36 1196.57,617.66 1197.57,617.82 1198.57,617.93 1199.57,617.31 1200.57,618.13 1201.57,617.37 1202.57,617.65 1203.57,618.18 1204.57,618.4 1205.57,618.57 1206.57,617.67 1207.57,618.52 1208.57,617.42 1209.58,617.62 1210.58,617.85 1211.58,617.57 1212.58,617.64 1213.58,617.41 1214.58,617.31 1215.58,618.32 1216.58,617.7 1217.58,617.64 1218.58,617.72 1219.58,618.62 1220.58,618.24 1221.58,618.06 1222.58,618.37 1223.58,617.79 1224.58,617.68 1225.58,617.7 1226.58,618.43 1227.58,618.54 1228.58,618.68 1229.58,618.3 1230.58,618.07 1231.58,617.82 1232.58,617.82 1233.58,617.88 1234.58,617.32 1235.58,617.71 1236.58,618.16 1237.58,617.75 1238.58,618.59 1239.58,617.95 1240.58,617.65 1241.59,618.31 1242.59,618.08 1243.59,618.42 1244.59,617.61 1245.59,618.22 1246.59,617.72 1247.59,618.4 1248.59,618.02 1249.59,617.78 1250.59,617.74 1251.59,618.13 1252.59,617.88 1253.59,617.7 1254.59,617.92 1255.59,618.5 1256.59,617.31 1257.59,618.39 1258.59,617.65 1259.59,618.34 1260.59,618.51 1261.59,617.94 1262.59,617.54 1263.59,617.9 1264.59,617.87 1265.59,618.45 1266.59,618.3 1267.59,617.68 1268.59,617.96 1269.59,617.79 1270.59,617.5 1271.59,617.86 1272.59,618.33 1273.6,617.81 1274.6,617.76 1275.6,618.45 1276.6,617.39 1277.6,617.71 1278.6,617.54 1279.6,618.28 1280.6,617.96 1281.6,617.79 1282.6,617.94 1283.6,617.7 1284.6,618.37 1285.6,618.69 1286.6,618.17 1287.6,617.66 1288.6,617.55 1289.6,618.24 1289.6,636.91 1288.6,636.12 1287.6,636.04 1286.6,636.98 1285.6,636.17 1284.6,636.81 1283.6,636.83 1282.6,635.89 1281.6,636.23 1280.6,636.31 1279.6,637.03 1278.6,636.35 1277.6,636.72 1276.6,636.29 1275.6,636.9 1274.6,636.83 1273.6,636.02 1272.59,636.15 1271.59,637.01 1270.59,636.08 1269.59,636.46 1268.59,636.85 1267.59,635.96 1266.59,636.85 1265.59,636.43 1264.59,635.75 1263.59,636.23 1262.59,637.02 1261.59,636.43 1260.59,636.94 1259.59,635.89 1258.59,636.11 1257.59,636.15 1256.59,636.16 1255.59,636.41 1254.59,636.6 1253.59,636.07 1252.59,636.1 1251.59,636.25 1250.59,637.02 1249.59,636.27 1248.59,636.83 1247.59,636.92 1246.59,636.76 1245.59,636.91 1244.59,635.93 1243.59,635.86 1242.59,636.61 1241.59,636.17 1240.58,636.8 1239.58,635.83 1238.58,636.09 1237.58,636.29 1236.58,636.05 1235.58,637.06 1234.58,636.88 1233.58,636.51 1232.58,635.89 1231.58,637.09 1230.58,635.95 1229.58,636.99 1228.58,636.62 1227.58,636.12 1226.58,636.52 1225.58,636.65 1224.58,637.03 1223.58,636.72 1222.58,636.71 1221.58,636.75 1220.58,636.66 1219.58,637.08 1218.58,637.06 1217.58,636.03 1216.58,636.27 1215.58,635.92 1214.58,636.18 1213.58,637.04 1212.58,637.03 1211.58,636.34 1210.58,635.94 1209.58,636.04 1208.57,637.02 1207.57,636.13 1206.57,636.74 1205.57,636.14 1204.57,635.8 1203.57,636.16 1202.57,636.47 1201.57,636.74 1200.57,636.02 1199.57,635.84 1198.57,636.48 1197.57,636.4 1196.57,635.89 1195.57,636.41 1194.57,636.47 1193.57,636.56 1192.57,636.4 1191.57,635.78 1190.57,636.59 1189.57,636.94 1188.57,635.88 1187.57,636.74 1186.57,635.74 1185.57,636.67 1184.57,636.75 1183.57,636.66 1182.57,635.87 1181.57,637.03 1180.57,636.93 1179.57,636.34 1178.57,636.64 1177.57,635.78 1176.57,636.46 1175.56,636.82 1174.56,636.75 1173.56,636.05 1172.56,637.03 1171.56,636.39 1170.56,636.77 1169.56,636.84 1168.56,636.82 1167.56,635.81 1166.56,636.49 1165.56,636.13 1164.56,636.93 1163.56,636.06 1162.56,637.01 1161.56,636.42 1160.56,635.99 1159.56,636.57 1158.56,635.87 1157.56,636.93 1156.56,636.08 1155.56,636.18 1154.56,636.62 1153.56,635.85 1152.56,636.12 1151.56,636.2 1150.56,635.81 1149.56,636.09 1148.56,635.98 1147.56,636.45 1146.56,635.77 1145.56,635.89 1144.56,635.88 1143.55,636.56 1142.55,635.92 1141.55,635.77 1140.55,636.63 1139.55,635.9 1138.55,636.38 1137.55,636.34 1136.55,635.78 1135.55,636.35 1134.55,636.55 1133.55,636.25 1132.55,637.02 1131.55,636.34 1130.55,636.91 1129.55,635.77 1128.55,635.62 1127.55,636.77 1126.55,635.72 1125.55,635.71 1124.55,636.1 1123.55,636.03 1122.55,636.32 1121.55,636.41 1120.55,636.23 1119.55,636.11 1118.55,635.53 1117.55,635.82 1116.55,635.45 1115.55,636.42 1114.55,636.51 1113.55,635.43 1112.55,635.43 1111.54,636.12 1110.54,635.85 1109.54,636.01 1108.54,635.85 1107.54,635.65 1106.54,635.61 1105.54,635 1104.54,635.36 1103.54,634.88 1102.54,634.48 1101.54,634.2 1100.54,634.16 1099.54,634.18 1098.54,633.38 1097.54,634.11 1096.54,632.87 1095.54,633.56ZM1307.7,614.06 1308.72,614.52 1309.73,615.7 1310.75,616.02 1311.76,616.53 1312.78,615.98 1313.79,616.29 1314.81,616.19 1315.82,617.5 1316.84,617.33 1317.85,617.43 1318.87,617.22 1319.88,616.7 1320.9,618.07 1321.91,617.62 1322.93,618.3 1323.94,617.33 1324.96,618.14 1324.96,635.9 1323.94,635.83 1322.93,636.49 1321.91,636.13 1320.9,636.3 1319.88,635.63 1318.87,635.28 1317.85,635.99 1316.84,634.95 1315.82,634.93 1314.81,635.79 1313.79,635.47 1312.78,635.38 1311.76,634.2 1310.75,633.84 1309.73,633.75 1308.72,633.44 1307.7,632.8ZM1343.06,614.96 1344.08,614.85 1345.09,615.84 1346.11,615.55 1347.12,615.99 1348.14,616.95 1349.15,616.9 1350.17,617.16 1351.18,617.61 1352.2,616.93 1353.21,616.59 1354.23,617.51 1355.24,617.23 1356.26,618.02 1357.27,618.21 1358.29,617.61 1359.3,618.34 1360.32,617.62 1360.32,636.3 1359.3,636.15 1358.29,635.54 1357.27,635.61 1356.26,636.06 1355.24,635.62 1354.23,636.16 1353.21,635.93 1352.2,635.4 1351.18,635.19 1350.17,634.66 1349.15,634.53 1348.14,634.93 1347.12,635.16 1346.11,634.22 1345.09,634.23 1344.08,633.9 1343.06,633.4ZM1378.42,615.25 1379.44,615.54 1380.45,615.33 1381.47,616.28 1382.48,616.03 1383.5,616.29 1384.51,615.99 1385.53,616.79 1386.54,617.17 1387.56,616.76 1388.57,616.51 1389.59,616.6 1390.6,618.05 1391.62,617.14 1392.63,618.09 1393.65,617.45 1394.66,617.41 1395.68,618.21 1395.68,635.6 1394.66,635.46 1393.65,635.74 1392.63,635.71 1391.62,636.17 1390.6,636.2 1389.59,636.32 1388.57,635.99 1387.56,634.79 1386.54,635.17 1385.53,634.98 1384.51,634.37 1383.5,635.04 1382.48,634.63 1381.47,634.83 1380.45,633.66 1379.44,633.45 1378.42,632.46ZM1413.78,614.09 1414.8,615.21 1415.81,614.96 1416.83,616.42 1417.84,615.58 1418.86,616.05 1419.87,615.97 1420.89,616.07 1421.9,617.09 1422.92,617.14 1423.93,617.4 1424.95,617.24 1425.96,616.77 1426.98,617.73 1427.99,617.74 1429.01,617.72 1430.02,617.12 1431.04,617.31 1431.04,636.25 1430.02,635.7 1429.01,635.64 1427.99,635.98 1426.98,635.83 1425.96,636.04 1424.95,635.83 1423.93,634.95 1422.92,634.87 1421.9,636 1420.89,634.71 1419.87,634.63 1418.86,635.37 1417.84,634.97 1416.83,634.06 1415.81,633.81 1414.8,633.66 1413.78,633.06ZM1449.14,614.71 1450.14,614.35 1451.14,615.42 1452.14,615.91 1453.14,616.12 1454.14,616.06 1455.14,616.18 1456.14,615.99 1457.14,615.96 1458.14,617.23 1459.14,616.26 1460.14,616.47 1461.14,616.48 1462.14,617.5 1463.14,616.64 1464.14,617.05 1465.14,617 1466.15,617.26 1467.15,617.39 1468.15,617.07 1469.15,618.1 1470.15,618.05 1471.15,617.56 1472.15,617.78 1473.15,617.43 1474.15,617.53 1475.15,618.45 1476.15,618.1 1477.15,618.33 1478.15,617.67 1479.15,617.23 1480.15,617.29 1481.15,618.09 1482.15,617.28 1483.15,618.32 1484.15,618.39 1485.15,618.35 1486.15,617.85 1487.15,618.34 1488.15,618.24 1489.15,618.4 1490.15,618.48 1491.15,617.74 1492.15,617.88 1493.15,617.75 1494.15,617.81 1495.15,618.66 1496.15,617.39 1497.15,617.57 1498.16,617.98 1499.16,617.52 1500.16,617.73 1501.16,617.3 1502.16,618 1503.16,618.19 1504.16,618.29 1505.16,617.42 1506.16,618.63 1507.16,618.67 1508.16,617.66 1509.16,617.5 1510.16,618.62 1511.16,618.02 1512.16,618.38 1513.16,618.12 1514.16,617.78 1515.16,617.95 1516.16,618.25 1517.16,617.95 1518.16,618.41 1519.16,617.56 1520.16,618.54 1521.16,617.63 1522.16,617.51 1523.16,618.03 1524.16,617.67 1525.16,618.6 1526.16,618.12 1527.16,618.66 1528.16,617.94 1529.16,618.06 1530.17,618.14 1531.17,618.62 1532.17,617.71 1533.17,618.46 1534.17,618.01 1535.17,618.45 1536.17,617.79 1537.17,617.78 1538.17,617.31 1539.17,617.88 1540.17,618.02 1541.17,618.67 1542.17,618.29 1543.17,617.54 1544.17,618.4 1545.17,618 1546.17,617.43 1547.17,618.15 1548.17,618.02 1549.17,617.42 1550.17,618.05 1551.17,618.64 1552.17,617.85 1553.17,617.81 1554.17,618.69 1555.17,617.33 1556.17,617.64 1557.17,617.87 1558.17,617.46 1559.17,617.85 1560.17,617.8 1561.17,618.51 1562.17,617.71 1563.18,617.67 1564.18,617.65 1565.18,617.46 1566.18,617.95 1567.18,618.46 1568.18,617.43 1569.18,617.55 1570.18,618.63 1571.18,617.55 1572.18,617.73 1573.18,618.66 1574.18,618.54 1575.18,617.92 1576.18,618.31 1577.18,618.04 1578.18,618.43 1579.18,617.88 1580.18,618.22 1581.18,617.39 1582.18,617.43 1583.18,617.83 1584.18,618.01 1585.18,618.18 1586.18,618.38 1587.18,617.31 1588.18,618.32 1589.18,618.24 1590.18,617.96 1591.18,618.02 1592.18,618.04 1593.18,618.01 1594.18,618.37 1595.19,617.35 1596.19,618.44 1597.19,618.1 1598.19,618.69 1599.19,617.7 1600.19,617.84 1601.19,617.81 1602.19,618.11 1603.19,618.66 1604.19,617.3 1605.19,618.33 1606.19,617.96 1607.19,617.56 1608.19,618.13 1609.19,618.32 1610.19,617.79 1611.19,617.8 1612.19,617.53 1613.19,617.98 1614.19,617.57 1615.19,618.42 1616.19,617.75 1617.19,618.58 1618.19,617.38 1619.19,617.35 1620.19,617.34 1621.19,617.79 1622.19,617.52 1623.19,618.05 1624.19,617.9 1625.19,617.9 1626.19,618.46 1627.2,618.62 1628.2,618.22 1629.2,617.78 1630.2,618.15 1631.2,618.15 1632.2,617.94 1633.2,618.21 1634.2,618.41 1635.2,617.37 1636.2,617.51 1637.2,618.58 1638.2,618.03 1639.2,618.33 1640.2,618.33 1641.2,618.02 1642.2,617.47 1643.2,618.4 1643.2,636.41 1642.2,636.5 1641.2,635.82 1640.2,635.72 1639.2,636.68 1638.2,636.48 1637.2,635.91 1636.2,636.53 1635.2,636.58 1634.2,636.84 1633.2,635.92 1632.2,635.72 1631.2,636.52 1630.2,636.51 1629.2,636.8 1628.2,636.52 1627.2,637.09 1626.19,636.03 1625.19,636.01 1624.19,636.17 1623.19,636.93 1622.19,636.86 1621.19,636.14 1620.19,636.7 1619.19,636 1618.19,636.02 1617.19,635.73 1616.19,636.3 1615.19,636.84 1614.19,636.58 1613.19,636.57 1612.19,636.75 1611.19,636.66 1610.19,636.22 1609.19,636.88 1608.19,636.19 1607.19,636.67 1606.19,636.89 1605.19,635.94 1604.19,635.83 1603.19,635.95 1602.19,635.93 1601.19,636.7 1600.19,636.35 1599.19,636.15 1598.19,635.73 1597.19,636.4 1596.19,636.88 1595.19,636.59 1594.18,636.24 1593.18,636.66 1592.18,636.75 1591.18,636.19 1590.18,636.21 1589.18,636.19 1588.18,636.08 1587.18,636.79 1586.18,636.79 1585.18,637.02 1584.18,636.46 1583.18,636.22 1582.18,636.66 1581.18,635.7 1580.18,636.24 1579.18,635.75 1578.18,635.73 1577.18,635.88 1576.18,636.3 1575.18,635.84 1574.18,635.96 1573.18,636.73 1572.18,636.99 1571.18,636.65 1570.18,636.13 1569.18,636.2 1568.18,636.39 1567.18,636.85 1566.18,636.35 1565.18,636.8 1564.18,636.96 1563.18,636.08 1562.17,636.19 1561.17,636.19 1560.17,636.11 1559.17,637.02 1558.17,635.84 1557.17,635.84 1556.17,636.11 1555.17,636.48 1554.17,636.16 1553.17,636.35 1552.17,636.49 1551.17,635.78 1550.17,636.65 1549.17,636.22 1548.17,636.5 1547.17,635.79 1546.17,636.71 1545.17,637.06 1544.17,636.91 1543.17,637.08 1542.17,636.48 1541.17,636.71 1540.17,636.27 1539.17,635.81 1538.17,636.63 1537.17,636.63 1536.17,636.53 1535.17,636.46 1534.17,635.85 1533.17,636.81 1532.17,636.44 1531.17,636.87 1530.17,637.04 1529.16,636.54 1528.16,636.75 1527.16,636.77 1526.16,636.98 1525.16,635.85 1524.16,636.77 1523.16,636.12 1522.16,636.66 1521.16,636.38 1520.16,636.82 1519.16,636.71 1518.16,636.64 1517.16,636.21 1516.16,635.8 1515.16,636.07 1514.16,637.02 1513.16,636.44 1512.16,636.83 1511.16,636.41 1510.16,636.83 1509.16,636.49 1508.16,636.25 1507.16,636.19 1506.16,636.18 1505.16,635.98 1504.16,636.86 1503.16,636.73 1502.16,636.49 1501.16,636.55 1500.16,636.23 1499.16,636.95 1498.16,636.08 1497.15,636.31 1496.15,636.13 1495.15,636.3 1494.15,635.86 1493.15,637.03 1492.15,636.38 1491.15,636.67 1490.15,635.85 1489.15,636.88 1488.15,635.87 1487.15,635.68 1486.15,636.58 1485.15,636.89 1484.15,636.19 1483.15,636.55 1482.15,636.09 1481.15,636.27 1480.15,635.68 1479.15,636.88 1478.15,636.69 1477.15,636.21 1476.15,635.79 1475.15,636.4 1474.15,636.65 1473.15,635.86 1472.15,636.02 1471.15,635.47 1470.15,635.51 1469.15,636.15 1468.15,635.32 1467.15,635.99 1466.15,635.4 1465.14,636.06 1464.14,636.16 1463.14,635.91 1462.14,636.16 1461.14,635.92 1460.14,635.97 1459.14,634.76 1458.14,634.91 1457.14,634.34 1456.14,634.22 1455.14,634.09 1454.14,634.3 1453.14,633.66 1452.14,634.48 1451.14,633.06 1450.14,632.74 1449.14,633.43Z" stroke="none" fill="#219a04" stroke-width="1"/>
<path d="M-106.7,622.28 -105.68,622.35 -104.67,622.46 -103.65,622.9 -102.64,623.48 -101.62,623.95 -100.61,623.81 -99.59,624.04 -98.58,624.5 -97.56,624.01 -96.55,624.9 -95.53,624.57 -94.52,624.54 -93.5,625.03 -92.49,624.63 -91.47,624.59 -90.46,624.74 -89.44,625.16 -89.44,628.95 -90.46,629.15 -91.47,628.75 -92.49,629.01 -93.5,628.96 -94.52,628.75 -95.53,628.1 -96.55,628.61 -97.56,628.35 -98.58,627.99 -99.59,627.79 -100.61,628.14 -101.62,627.78 -102.64,626.94 -103.65,627.01 -104.67,626.38 -105.68,626.17 -106.7,625.39ZM-71.34,621.66 -70.32,622.18 -69.31,623.07 -68.29,623.52 -67.28,623.01 -66.26,623.88 -65.25,623.91 -64.23,623.6 -63.22,624.32 -62.2,624.17 -61.19,624.36 -60.17,625.02 -59.16,624.91 -58.14,624.38 -57.13,625.01 -56.11,624.47 -55.1,625.31 -54.08,625.09 -54.08,629.16 -55.1,628.52 -56.11,628.82 -57.13,629.09 -58.14,628.37 -59.16,628.86 -60.17,628.29 -61.19,628.8 -62.2,628.27 -63.22,627.78 -64.23,627.86 -65.25,627.56 -66.26,627.82 -67.28,627.16 -68.29,626.99 -69.31,626.24 -70.32,625.78 -71.34,625.87ZM-35.98,621.89 -34.96,622.44 -33.95,623.04 -32.93,622.81 -31.92,623.71 -30.9,623.7 -29.89,623.74 -28.87,623.9 -27.86,624.65 -26.84,624.77 -25.83,624.53 -24.81,624.46 -23.8,625.12 -22.78,624.34 -21.77,624.44 -20.75,624.9 -19.74,625.04 -18.72,624.56 -18.72,629.26 -19.74,629.09 -20.75,628.94 -21.77,628.3 -22.78,628.55 -23.8,628.85 -24.81,628.64 -25.83,628.05 -26.84,628.18 -27.86,628.37 -28.87,627.62 -29.89,627.64 -30.9,627.2 -31.92,626.93 -32.93,626.68 -33.95,626.39 -34.96,625.84 -35.98,625.47ZM-0.62,622 0.4,622.5 1.41,622.9 2.43,623.24 3.44,623.53 4.46,623.87 5.47,623.75 6.49,624.46 7.5,624.2 8.52,624.16 9.53,624.93 10.55,624.4 11.56,624.64 12.58,624.95 13.59,625.12 14.61,624.74 15.62,624.54 16.64,625.08 16.64,629.15 15.62,629.25 14.61,628.64 13.59,628.41 12.58,628.92 11.56,628.86 10.55,628.65 9.53,628.14 8.52,628.59 7.5,628.17 6.49,628.11 5.47,627.99 4.46,627.86 3.44,627.52 2.43,627.26 1.41,626.4 0.4,626.42 -0.62,625.83ZM34.74,621.41 35.74,622.48 36.74,622.93 37.74,622.77 38.74,622.97 39.74,623.17 40.74,623.61 41.74,623.4 42.74,623.54 43.74,624.46 44.74,624.16 45.74,624.29 46.74,624.2 47.74,624.07 48.74,624.17 49.74,624.25 50.74,624.89 51.75,625.03 52.75,625.24 53.75,625.31 54.75,624.61 55.75,624.53 56.75,625.16 57.75,624.84 58.75,625.44 59.75,625.07 60.75,625.05 61.75,625.06 62.75,624.97 63.75,625.22 64.75,624.89 65.75,625.62 66.75,625.48 67.75,625.53 68.75,625.62 69.75,625.39 70.75,625.6 71.75,625.46 72.75,625.23 73.75,624.82 74.75,625.27 75.75,625.3 76.75,625.48 77.75,625.6 78.75,625.39 79.75,624.91 80.75,624.91 81.75,625.62 82.75,625.63 83.76,625.2 84.76,624.9 85.76,624.93 86.76,624.94 87.76,625.66 88.76,625.21 89.76,625.26 90.76,625.58 91.76,625.06 92.76,625.32 93.76,625.37 94.76,625.22 95.76,624.95 96.76,625.23 97.76,624.95 98.76,625.13 99.76,625.21 100.76,625.02 101.76,625.75 102.76,625.47 103.76,625.69 104.76,625.69 105.76,625.11 106.76,624.98 107.76,625.74 108.76,625.31 109.76,625.46 110.76,625.63 111.76,625.16 112.76,625.38 113.76,625.12 114.76,625.04 115.77,624.88 116.77,625.06 117.77,625.07 118.77,625.52 119.77,625.31 120.77,625.55 121.77,625.11 122.77,625.04 123.77,625.37 124.77,625.09 125.77,625.53 126.77,625.19 127.77,625.1 128.77,625.53 129.77,625.02 130.77,625.5 131.77,625.2 132.77,624.93 133.77,625.41 134.77,625.4 135.77,624.94 136.77,625.26 137.77,625.27 138.77,625.49 139.77,625.03 140.77,625.35 141.77,625.74 142.77,624.86 143.77,625.49 144.77,625.16 145.77,625.29 146.77,625.1 147.77,625.26 148.78,625.3 149.78,625.68 150.78,625.64 151.78,625.69 152.78,625.72 153.78,625.21 154.78,625.55 155.78,625.65 156.78,624.96 157.78,625.5 158.78,625.37 159.78,625.03 160.78,625.42 161.78,625.47 162.78,625.44 163.78,624.86 164.78,625.68 165.78,625.17 166.78,625.57 167.78,624.99 168.78,625.39 169.78,624.9 170.78,625.35 171.78,625.43 172.78,625.2 173.78,625.5 174.78,625.28 175.78,624.9 176.78,624.89 177.78,624.9 178.78,625.16 179.78,625.69 180.79,625.15 181.79,625.58 182.79,625.43 183.79,625.48 184.79,625.44 185.79,625.03 186.79,625.63 187.79,625.23 188.79,625.69 189.79,624.86 190.79,624.95 191.79,624.97 192.79,625.5 193.79,624.95 194.79,625.24 195.79,625.31 196.79,625.31 197.79,625.12 198.79,625.64 199.79,625.26 200.79,625.01 201.79,625.35 202.79,624.95 203.79,625.45 204.79,625.01 205.79,625.65 206.79,624.92 207.79,625.13 208.79,625.04 209.79,625.36 210.79,625.21 211.79,625.26 212.8,625.25 213.8,625.4 214.8,625.09 215.8,625.14 216.8,625.08 217.8,624.98 218.8,625.41 219.8,625.69 220.8,625.67 221.8,625.72 222.8,624.95 223.8,625.49 224.8,624.92 225.8,625.58 226.8,625.61 227.8,625.28 228.8,625.74 228.8,629.25 227.8,629.01 226.8,628.87 225.8,628.99 224.8,629.16 223.8,628.98 222.8,629.27 221.8,629.26 220.8,629.62 219.8,628.98 218.8,628.8 217.8,629.44 216.8,629.43 215.8,629.11 214.8,628.94 213.8,629.42 212.8,628.93 211.79,629.63 210.79,629.48 209.79,629.15 208.79,628.86 207.79,629.62 206.79,629.38 205.79,629.51 204.79,629.46 203.79,629.03 202.79,629.12 201.79,629.54 200.79,628.98 199.79,629.02 198.79,629.1 197.79,629.12 196.79,628.85 195.79,628.88 194.79,629.41 193.79,629.04 192.79,629.03 191.79,629.5 190.79,629.22 189.79,629.2 188.79,629.41 187.79,628.92 186.79,629.59 185.79,629.13 184.79,628.78 183.79,629.02 182.79,628.8 181.79,629.49 180.79,629.58 179.78,629.31 178.78,628.8 177.78,628.94 176.78,629.17 175.78,628.81 174.78,628.79 173.78,629.03 172.78,628.82 171.78,629.49 170.78,629.62 169.78,629.35 168.78,629.31 167.78,628.75 166.78,629.12 165.78,629.32 164.78,629 163.78,629.26 162.78,629.42 161.78,629.54 160.78,628.91 159.78,629.01 158.78,629.12 157.78,629.15 156.78,628.85 155.78,629.35 154.78,629.22 153.78,629.46 152.78,628.95 151.78,629.13 150.78,629.6 149.78,628.78 148.78,628.83 147.77,629.21 146.77,629 145.77,629.41 144.77,629.54 143.77,629.63 142.77,628.89 141.77,629.11 140.77,629.41 139.77,629.12 138.77,629.31 137.77,629.52 136.77,629.04 135.77,628.85 134.77,629.58 133.77,628.91 132.77,629.31 131.77,628.78 130.77,628.98 129.77,628.84 128.77,628.92 127.77,629.2 126.77,629.28 125.77,629.36 124.77,629.34 123.77,629.64 122.77,628.86 121.77,629.32 120.77,629.09 119.77,628.99 118.77,629.6 117.77,629.4 116.77,629.53 115.77,629.39 114.76,628.9 113.76,629.53 112.76,628.84 111.76,629.01 110.76,629.48 109.76,628.96 108.76,629.25 107.76,628.96 106.76,629.17 105.76,629.38 104.76,628.96 103.76,629.44 102.76,629.64 101.76,629.19 100.76,629.07 99.76,629.26 98.76,628.96 97.76,629.64 96.76,628.81 95.76,629.16 94.76,629.29 93.76,628.88 92.76,629.4 91.76,629.58 90.76,628.82 89.76,628.85 88.76,628.91 87.76,628.92 86.76,629.08 85.76,629.61 84.76,628.98 83.76,629.44 82.75,629.07 81.75,629.59 80.75,629.2 79.75,628.84 78.75,628.77 77.75,628.79 76.75,628.72 75.75,629.27 74.75,629.44 73.75,629.22 72.75,628.77 71.75,629.38 70.75,628.86 69.75,629.19 68.75,629.09 67.75,628.74 66.75,629 65.75,628.76 64.75,628.77 63.75,628.69 62.75,629.01 61.75,628.74 60.75,629.43 59.75,628.64 58.75,629.04 57.75,628.83 56.75,629.25 55.75,628.48 54.75,628.77 53.75,628.64 52.75,628.3 51.75,628.7 50.74,628.26 49.74,628.28 48.74,628.86 47.74,628.4 46.74,627.86 45.74,627.92 44.74,627.67 43.74,628.04 42.74,627.38 41.74,627.83 40.74,627.34 39.74,627.2 38.74,627.03 37.74,626.99 36.74,626.27 35.74,626.12 34.74,625.69ZM246.9,622.26 247.92,622.3 248.93,622.89 249.95,623.33 250.96,623.6 251.98,623.29 252.99,624.21 254.01,624.28 255.02,624.37 256.04,624.04 257.05,624.89 258.07,624.76 259.08,624.42 260.1,624.85 261.11,624.53 262.13,624.51 263.14,625.15 264.16,625.22 264.16,629.13 263.14,629.19 262.13,628.77 261.11,628.78 260.1,628.34 259.08,628.68 258.07,628.87 257.05,628.08 256.04,628.41 255.02,628.13 254.01,628.2 252.99,627.9 251.98,627.14 250.96,627.02 249.95,626.61 248.93,626.46 247.92,625.9 246.9,625.76ZM282.26,621.48 283.28,622.07 284.29,622.99 285.31,623.3 286.32,623.31 287.34,623.97 288.35,623.55 289.37,624.26 290.38,624.46 291.4,623.98 292.41,624.82 293.43,624.85 294.44,624.66 295.46,624.77 296.47,624.92 297.49,624.89 298.5,624.56 299.52,624.95 299.52,628.99 298.5,628.57 297.49,629.02 296.47,629.04 295.46,628.42 294.44,628.67 293.43,628.33 292.41,628.11 291.4,628.42 290.38,628.23 289.37,627.66 288.35,627.84 287.34,627.25 286.32,627.2 285.31,627.34 284.29,626.39 283.28,626.25 282.26,626.08ZM317.62,621.54 318.64,622.14 319.65,623 320.67,623.42 321.68,623.38 322.7,623.92 323.71,623.59 324.73,623.97 325.74,624.35 326.76,623.94 327.77,624.52 328.79,624.92 329.8,624.43 330.82,624.34 331.83,624.98 332.85,625.05 333.86,624.73 334.88,624.85 334.88,628.6 333.86,628.45 332.85,629.02 331.83,628.97 330.82,628.7 329.8,628.54 328.79,628.57 327.77,628.01 326.76,628.41 325.74,627.8 324.73,628.17 323.71,627.4 322.7,627.67 321.68,627.51 320.67,626.71 319.65,626.84 318.64,625.84 317.62,625.61ZM352.98,621.81 354,622.73 355.01,622.6 356.03,623.32 357.04,623.11 358.06,623.61 359.07,624.03 360.09,623.83 361.1,624.52 362.12,624.76 363.13,624.3 364.15,624.6 365.16,624.26 366.18,624.69 367.19,624.94 368.21,624.6 369.22,625.39 370.24,624.71 370.24,628.9 369.22,628.57 368.21,628.59 367.19,628.84 366.18,628.99 365.16,628.21 364.15,628.27 363.13,628.77 362.12,628.54 361.1,627.81 360.09,627.89 359.07,628.04 358.06,627.85 357.04,627.19 356.03,627.24 355.01,626.44 354,625.78 352.98,625.76ZM388.34,622.2 389.34,622.54 390.34,622.72 391.34,622.51 392.34,623.26 393.34,622.97 394.34,623.29 395.34,623.27 396.34,623.61 397.34,624.37 398.34,624.38 399.34,624.43 400.34,624.47 401.34,624.23 402.34,624.19 403.34,624.42 404.34,625.03 405.35,624.79 406.35,624.44 407.35,624.68 408.35,624.88 409.35,624.67 410.35,624.64 411.35,625.02 412.35,625.4 413.35,624.84 414.35,625.05 415.35,625.39 416.35,625.2 417.35,625.28 418.35,625.37 419.35,625.47 420.35,624.8 421.35,625.27 422.35,624.85 423.35,624.92 424.35,624.83 425.35,624.95 426.35,625.59 427.35,624.96 428.35,624.83 429.35,625.04 430.35,625.51 431.35,625.3 432.35,625.31 433.35,625.42 434.35,625.11 435.35,625.54 436.35,625.28 437.36,625.11 438.36,625.07 439.36,625.72 440.36,625.55 441.36,625.34 442.36,625.3 443.36,625.39 444.36,624.86 445.36,624.92 446.36,625.43 447.36,625.45 448.36,625.65 449.36,625.4 450.36,625.51 451.36,625.36 452.36,625.21 453.36,625.26 454.36,625.71 455.36,625.69 456.36,625.64 457.36,625.36 458.36,625.04 459.36,624.92 460.36,625.67 461.36,624.94 462.36,625.17 463.36,625.58 464.36,625.03 465.36,625.57 466.36,625.06 467.36,625.56 468.36,625.49 469.37,625.11 470.37,625.15 471.37,625.18 472.37,625.37 473.37,625.67 474.37,625.34 475.37,625.22 476.37,625.2 477.37,625.01 478.37,625.45 479.37,625.3 480.37,625.66 481.37,625.31 482.37,625.71 483.37,625.25 484.37,625.31 485.37,625.01 486.37,625.56 487.37,624.88 488.37,625.01 489.37,625.13 490.37,625.61 491.37,625.4 492.37,625.13 493.37,625.67 494.37,625.6 495.37,624.88 496.37,625.07 497.37,625.48 498.37,625.63 499.37,625.52 500.37,625.65 501.37,624.96 502.38,624.86 503.38,625.25 504.38,624.91 505.38,625.45 506.38,625.67 507.38,625.23 508.38,625.37 509.38,625.2 510.38,625 511.38,624.96 512.38,625.49 513.38,625.66 514.38,625.18 515.38,624.97 516.38,625.6 517.38,625.09 518.38,625.54 519.38,625.44 520.38,625.13 521.38,625.31 522.38,625.18 523.38,624.96 524.38,625.05 525.38,625.36 526.38,625.55 527.38,624.93 528.38,625.03 529.38,624.86 530.38,625.74 531.38,624.95 532.38,625.19 533.38,624.9 534.39,625.3 535.39,625.42 536.39,625.32 537.39,625.46 538.39,625.04 539.39,625.67 540.39,625.54 541.39,625.02 542.39,625.26 543.39,624.87 544.39,625.6 545.39,625.66 546.39,625.32 547.39,625.17 548.39,625.57 549.39,625.17 550.39,624.89 551.39,625.45 552.39,625.22 553.39,625.75 554.39,625.31 555.39,624.95 556.39,625.56 557.39,625.71 558.39,624.96 559.39,625.14 560.39,625.29 561.39,625.49 562.39,625.48 563.39,625.41 564.39,625.63 565.39,625.51 566.4,624.87 567.4,625.72 568.4,625.6 569.4,625.46 570.4,625.56 571.4,625.59 572.4,624.89 573.4,625.42 574.4,624.98 575.4,625.08 576.4,625.59 577.4,625.34 578.4,625.12 579.4,625.02 580.4,625.28 581.4,624.95 582.4,625.2 582.4,629.06 581.4,629.61 580.4,629.18 579.4,629.35 578.4,629.43 577.4,628.98 576.4,628.76 575.4,629.35 574.4,629.52 573.4,629 572.4,629.23 571.4,629.59 570.4,629.14 569.4,629.43 568.4,629.31 567.4,629.1 566.4,629.49 565.39,628.97 564.39,629.2 563.39,628.88 562.39,629.29 561.39,629.27 560.39,629.51 559.39,629.44 558.39,629.13 557.39,628.77 556.39,629.22 555.39,628.75 554.39,628.89 553.39,629.24 552.39,629.2 551.39,628.77 550.39,628.91 549.39,629.25 548.39,629.23 547.39,628.85 546.39,629.48 545.39,628.97 544.39,629 543.39,629.21 542.39,629.21 541.39,629.12 540.39,628.83 539.39,629.01 538.39,629.15 537.39,628.79 536.39,629.32 535.39,629.54 534.39,629.6 533.38,628.75 532.38,629.12 531.38,629.51 530.38,629.34 529.38,629 528.38,628.99 527.38,629.31 526.38,629.48 525.38,629.05 524.38,628.84 523.38,629.03 522.38,629.02 521.38,629.49 520.38,629.27 519.38,629.21 518.38,629.47 517.38,628.87 516.38,629.23 515.38,629.36 514.38,629.43 513.38,628.81 512.38,628.76 511.38,628.96 510.38,629.37 509.38,628.89 508.38,629.47 507.38,629.53 506.38,628.99 505.38,628.97 504.38,628.97 503.38,628.91 502.38,629.23 501.37,628.85 500.37,629.32 499.37,629.31 498.37,629.13 497.37,628.82 496.37,628.79 495.37,629.62 494.37,628.96 493.37,629.53 492.37,628.89 491.37,628.93 490.37,628.84 489.37,628.84 488.37,629.41 487.37,629.02 486.37,629.28 485.37,629.42 484.37,629.1 483.37,629.44 482.37,629.57 481.37,629.31 480.37,628.96 479.37,629.59 478.37,629.41 477.37,629.57 476.37,629.2 475.37,629.31 474.37,629.13 473.37,629.18 472.37,629.34 471.37,628.75 470.37,628.95 469.37,629.15 468.36,629.31 467.36,629.21 466.36,629.36 465.36,628.9 464.36,629.1 463.36,629.59 462.36,628.76 461.36,629.31 460.36,629.58 459.36,628.87 458.36,628.87 457.36,628.84 456.36,629.31 455.36,628.88 454.36,629.2 453.36,629.57 452.36,629.35 451.36,628.99 450.36,628.77 449.36,628.89 448.36,629.03 447.36,629.47 446.36,629.25 445.36,629.06 444.36,628.99 443.36,629.4 442.36,629 441.36,628.76 440.36,629.4 439.36,629.22 438.36,628.9 437.36,629.58 436.35,628.88 435.35,628.8 434.35,628.97 433.35,629.62 432.35,628.91 431.35,628.85 430.35,629.47 429.35,629.11 428.35,629.21 427.35,629.36 426.35,629.14 425.35,629.14 424.35,629.52 423.35,629.1 422.35,628.79 421.35,629.24 420.35,629.02 419.35,628.81 418.35,628.82 417.35,628.73 416.35,629.31 415.35,628.7 414.35,628.61 413.35,628.82 412.35,629.29 411.35,629.16 410.35,628.67 409.35,628.5 408.35,629.06 407.35,628.89 406.35,628.74 405.35,628.47 404.34,628.45 403.34,628.14 402.34,628.64 401.34,628.32 400.34,627.83 399.34,628.43 398.34,627.74 397.34,627.48 396.34,628.18 395.34,627.5 394.34,627.34 393.34,627 392.34,626.84 391.34,627.11 390.34,626.43 389.34,625.97 388.34,626.04ZM600.5,621.68 601.52,622.7 602.53,622.53 603.55,623.1 604.56,623 605.58,623.31 606.59,623.6 607.61,624.39 608.62,624.02 609.64,624.72 610.65,624.48 611.67,624.59 612.68,624.45 613.7,624.65 614.71,624.64 615.73,625.09 616.74,624.83 617.76,625.41 617.76,628.72 616.74,628.59 615.73,629.05 614.71,628.88 613.7,629.01 612.68,628.34 611.67,628.17 610.65,628.32 609.64,628.21 608.62,628.51 607.61,628.14 606.59,628.09 605.58,627.6 604.56,626.93 603.55,627.21 602.53,626.64 601.52,625.77 600.5,625.34ZM635.86,621.94 636.88,622.64 637.89,623.16 638.91,622.77 639.92,622.98 640.94,623.97 641.95,623.63 642.97,624.05 643.98,624.49 645,624.65 646.01,624.53 647.03,625.04 648.04,625.09 649.06,624.53 650.07,625.2 651.09,624.95 652.1,624.67 653.12,624.92 653.12,628.77 652.1,628.99 651.09,628.67 650.07,628.91 649.06,628.43 648.04,628.2 647.03,628.34 646.01,628.83 645,628.6 643.98,627.78 642.97,627.78 641.95,627.33 640.94,627.1 639.92,627.15 638.91,626.73 637.89,626.97 636.88,626.54 635.86,625.61ZM671.22,621.49 672.24,622.1 673.25,622.54 674.27,622.86 675.28,623.73 676.3,624 677.31,623.92 678.33,623.67 679.34,624.05 680.36,624.71 681.37,624.55 682.39,624.99 683.4,624.53 684.42,624.91 685.43,624.56 686.45,625.25 687.46,625.38 688.48,625.13 688.48,628.6 687.46,628.48 686.45,629.03 685.43,629.19 684.42,628.79 683.4,628.43 682.39,628.49 681.37,628.49 680.36,628.53 679.34,628.01 678.33,628.2 677.31,627.93 676.3,627.42 675.28,626.89 674.27,627.31 673.25,626.38 672.24,626.6 671.22,625.8ZM706.58,621.49 707.6,622.36 708.61,622.34 709.63,622.88 710.64,623.81 711.66,624.07 712.67,624.04 713.69,624.03 714.7,623.77 715.72,624.21 716.73,624.3 717.75,624.65 718.76,624.73 719.78,624.95 720.79,625.02 721.81,625.01 722.82,625.1 723.84,624.66 723.84,629.27 722.82,629.13 721.81,629.08 720.79,628.71 719.78,628.94 718.76,628.63 717.75,628.82 716.73,628.67 715.72,628.15 714.7,628.12 713.69,628.02 712.67,628.05 711.66,627.76 710.64,627.42 709.63,626.55 708.61,626.76 707.6,626.05 706.58,625.35ZM741.94,622.1 742.94,622.33 743.94,622.71 744.94,623.12 745.94,623.41 746.94,622.98 747.94,623.28 748.94,624.13 749.94,623.8 750.94,623.69 751.94,624.32 752.94,624.25 753.94,624.18 754.94,624.34 755.94,624.76 756.94,624.45 757.94,625.07 758.95,624.47 759.95,625.1 760.95,624.64 761.95,625.34 762.95,624.53 763.95,624.72 764.95,624.61 765.95,625.35 766.95,624.94 767.95,625.04 768.95,624.9 769.95,624.99 770.95,625.54 771.95,625.36 772.95,625.07 773.95,624.78 774.95,624.85 775.95,625.1 776.95,625.03 777.95,625.37 778.95,625.33 779.95,624.95 780.95,625.25 781.95,625.51 782.95,624.86 783.95,625.13 784.95,625.07 785.95,625.56 786.95,625.25 787.95,625.49 788.95,625.48 789.95,625.59 790.96,625.08 791.96,625.52 792.96,625.51 793.96,624.86 794.96,625.27 795.96,625.44 796.96,625.4 797.96,625.66 798.96,625.06 799.96,625.45 800.96,625.41 801.96,625.3 802.96,625.51 803.96,625.15 804.96,625.45 805.96,625.27 806.96,625.17 807.96,625.05 808.96,625.36 809.96,625.65 810.96,625.02 811.96,625.64 812.96,624.92 813.96,625.74 814.96,625.27 815.96,625.23 816.96,625.62 817.96,624.96 818.96,624.91 819.96,625.6 820.96,625.04 821.96,625.18 822.97,625.6 823.97,625.42 824.97,625.52 825.97,625.74 826.97,625.05 827.97,625.27 828.97,624.87 829.97,625.65 830.97,625.65 831.97,625.53 832.97,625.04 833.97,625.47 834.97,625.31 835.97,625.27 836.97,625.24 837.97,624.86 838.97,625 839.97,624.89 840.97,625.51 841.97,625.67 842.97,624.98 843.97,625.58 844.97,625.03 845.97,624.96 846.97,625.13 847.97,625.57 848.97,624.92 849.97,625.01 850.97,625.59 851.97,624.92 852.97,625.62 853.97,625.65 854.97,625.4 855.98,625.13 856.98,625.41 857.98,625.49 858.98,624.98 859.98,624.92 860.98,625.21 861.98,625.36 862.98,625.71 863.98,625.61 864.98,625.46 865.98,625.62 866.98,625.19 867.98,625.66 868.98,625.55 869.98,625.14 870.98,625.4 871.98,625.2 872.98,625.16 873.98,625.7 874.98,625.53 875.98,625.36 876.98,625.67 877.98,625.68 878.98,624.95 879.98,624.94 880.98,625.72 881.98,625.01 882.98,625.15 883.98,625.34 884.98,625.08 885.98,625.73 886.98,625.28 887.99,625.41 888.99,625.64 889.99,625.22 890.99,625.57 891.99,625.74 892.99,625.54 893.99,625.37 894.99,625.54 895.99,624.88 896.99,625.7 897.99,625.44 898.99,624.91 899.99,625.25 900.99,625.39 901.99,625.07 902.99,624.98 903.99,625.46 904.99,625.72 905.99,625.28 906.99,625.49 907.99,625.07 908.99,625.6 909.99,625.74 910.99,625.44 911.99,625.25 912.99,624.97 913.99,625.67 914.99,625.16 915.99,625.62 916.99,624.88 917.99,625.21 918.99,625.57 920,624.98 921,624.91 922,625.12 923,625.49 924,625.22 925,625.4 926,625.48 927,624.92 928,625 929,625.2 930,625.04 931,625.48 932,625.12 933,625.42 934,625.49 935,625.53 936,625.6 936,629.3 935,629.2 934,629.55 933,628.9 932,629.04 931,629.26 930,629.08 929,628.86 928,629.37 927,629.64 926,629.15 925,629.53 924,628.84 923,629.35 922,628.98 921,628.82 920,629.55 918.99,629.33 917.99,629.6 916.99,629.1 915.99,629.24 914.99,629.58 913.99,629.09 912.99,629.35 911.99,629.16 910.99,629.06 909.99,629.51 908.99,629.23 907.99,629.32 906.99,629.14 905.99,629.46 904.99,629.57 903.99,629.04 902.99,629.25 901.99,629.24 900.99,629.1 899.99,629.26 898.99,629.41 897.99,629.09 896.99,629.15 895.99,629.27 894.99,629.62 893.99,628.83 892.99,629.56 891.99,628.85 890.99,629.14 889.99,628.82 888.99,629.5 887.99,629.03 886.98,628.82 885.98,629.26 884.98,629.58 883.98,628.84 882.98,629.03 881.98,629.57 880.98,629.64 879.98,629.27 878.98,628.95 877.98,629.1 876.98,629.3 875.98,629.42 874.98,629.19 873.98,629.21 872.98,629.64 871.98,629.57 870.98,628.88 869.98,629.46 868.98,629.65 867.98,628.84 866.98,629.12 865.98,629.2 864.98,629.37 863.98,628.92 862.98,629.25 861.98,629.25 860.98,629.02 859.98,629.06 858.98,629.42 857.98,628.99 856.98,629.44 855.98,628.95 854.97,629.53 853.97,629.17 852.97,629.44 851.97,628.81 850.97,629.55 849.97,629.02 848.97,629.4 847.97,628.82 846.97,629.28 845.97,629.62 844.97,629.29 843.97,629.28 842.97,629.31 841.97,629.42 840.97,629.31 839.97,629.11 838.97,628.88 837.97,629.35 836.97,629.33 835.97,629.14 834.97,629.18 833.97,629.23 832.97,628.87 831.97,629.57 830.97,629.48 829.97,628.84 828.97,629.33 827.97,629.57 826.97,628.87 825.97,628.76 824.97,629.29 823.97,628.87 822.97,628.82 821.96,629.41 820.96,628.93 819.96,629.02 818.96,629.24 817.96,629.59 816.96,629.15 815.96,628.84 814.96,629.28 813.96,628.88 812.96,628.92 811.96,629.22 810.96,629.5 809.96,629.56 808.96,629.34 807.96,628.84 806.96,629.31 805.96,629.63 804.96,629.49 803.96,628.98 802.96,629.39 801.96,629.31 800.96,629.5 799.96,628.77 798.96,629.58 797.96,629.58 796.96,629.18 795.96,629.29 794.96,629.31 793.96,628.82 792.96,629.14 791.96,629.52 790.96,629.11 789.95,628.76 788.95,628.97 787.95,629.4 786.95,629.23 785.95,629.16 784.95,628.8 783.95,628.75 782.95,629.44 781.95,629.38 780.95,629.59 779.95,629.39 778.95,628.74 777.95,629.42 776.95,628.92 775.95,628.81 774.95,629.29 773.95,628.94 772.95,629.48 771.95,629.4 770.95,628.82 769.95,629.37 768.95,629.13 767.95,628.8 766.95,628.65 765.95,628.85 764.95,628.59 763.95,628.5 762.95,629.28 761.95,628.38 760.95,629.18 759.95,629 758.95,628.45 757.94,628.67 756.94,628.85 755.94,628.03 754.94,628.8 753.94,628.18 752.94,628.17 751.94,627.78 750.94,627.59 749.94,627.43 748.94,627.32 747.94,626.99 746.94,627.63 745.94,627.15 744.94,626.53 743.94,625.99 742.94,625.95 741.94,625.86ZM954.1,622.2 955.12,622.03 956.13,622.85 957.15,623.48 958.16,623.48 959.18,623.59 960.19,623.79 961.21,624.37 962.22,623.79 963.24,624.74 964.25,624.63 965.27,624.94 966.28,624.88 967.3,624.73 968.31,625.05 969.33,625.18 970.34,624.52 971.36,624.87 971.36,629.02 970.34,628.49 969.33,629.26 968.31,628.48 967.3,628.78 966.28,628.72 965.27,628.24 964.25,628.36 963.24,627.89 962.22,628.53 961.21,628.32 960.19,628 959.18,627.98 958.16,626.92 957.15,627.33 956.13,626.74 955.12,626.45 954.1,626.05ZM989.46,621.78 990.48,622.38 991.49,623.15 992.51,622.75 993.52,623.58 994.54,623.56 995.55,624.12 996.57,623.81 997.58,624.31 998.6,624.33 999.61,624.9 1000.63,624.3 1001.64,625.05 1002.66,624.41 1003.67,625.23 1004.69,624.87 1005.7,625.08 1006.72,624.78 1006.72,628.67 1005.7,628.46 1004.69,628.73 1003.67,628.93 1002.66,629.06 1001.64,628.42 1000.63,628.12 999.61,628.69 998.6,628.16 997.58,627.84 996.57,628.2 995.55,627.44 994.54,627.91 993.52,627.15 992.51,627.28 991.49,626.41 990.48,626.64 989.46,626.16ZM1024.82,621.63 1025.84,622.26 1026.85,622.74 1027.87,622.79 1028.88,623.59 1029.9,623.55 1030.91,624.19 1031.93,624.38 1032.94,624.3 1033.96,623.98 1034.97,624.62 1035.99,624.48 1037,624.44 1038.02,624.78 1039.03,624.43 1040.05,624.53 1041.06,624.71 1042.08,625.39 1042.08,629.08 1041.06,628.89 1040.05,628.64 1039.03,628.4 1038.02,628.26 1037,628.52 1035.99,628.16 1034.97,628.49 1033.96,627.93 1032.94,627.85 1031.93,628.28 1030.91,627.51 1029.9,627.27 1028.88,627.5 1027.87,627.07 1026.85,626.67 1025.84,626.39 1024.82,625.37ZM1060.18,621.62 1061.2,622.12 1062.21,622.98 1063.23,623.41 1064.24,623.11 1065.26,623.39 1066.27,624.02 1067.29,623.7 1068.3,624.6 1069.32,624.8 1070.33,624.81 1071.35,624.77 1072.36,624.25 1073.38,624.4 1074.39,624.48 1075.41,624.87 1076.42,625.03 1077.44,625.03 1077.44,628.63 1076.42,629.26 1075.41,629.21 1074.39,628.44 1073.38,628.57 1072.36,628.4 1071.35,628.81 1070.33,628 1069.32,627.97 1068.3,627.77 1067.29,627.8 1066.27,627.34 1065.26,627.18 1064.24,626.95 1063.23,627.35 1062.21,626.56 1061.2,626.37 1060.18,625.65ZM1095.54,621.55 1096.54,622.37 1097.54,622.67 1098.54,622.63 1099.54,622.72 1100.54,623.69 1101.54,623.64 1102.54,623.93 1103.54,623.71 1104.54,623.66 1105.54,623.94 1106.54,624.06 1107.54,623.98 1108.54,624.62 1109.54,624.42 1110.54,624.76 1111.54,624.43 1112.55,624.66 1113.55,624.43 1114.55,625.27 1115.55,625.03 1116.55,624.89 1117.55,625.06 1118.55,625.26 1119.55,625.35 1120.55,625.34 1121.55,625.06 1122.55,625.13 1123.55,625.18 1124.55,625.04 1125.55,625.21 1126.55,625.14 1127.55,625.33 1128.55,625.56 1129.55,625.56 1130.55,625.41 1131.55,625.41 1132.55,625.18 1133.55,625.5 1134.55,625.67 1135.55,624.91 1136.55,625.16 1137.55,625.68 1138.55,624.83 1139.55,625.29 1140.55,625.48 1141.55,625.58 1142.55,625.36 1143.55,624.95 1144.56,624.92 1145.56,625.28 1146.56,625.43 1147.56,624.91 1148.56,625.03 1149.56,625.01 1150.56,625.31 1151.56,625.53 1152.56,625.3 1153.56,625.06 1154.56,625.69 1155.56,625.05 1156.56,625.09 1157.56,625.68 1158.56,625.7 1159.56,625.21 1160.56,625.18 1161.56,625.16 1162.56,624.85 1163.56,624.89 1164.56,624.94 1165.56,625.3 1166.56,625 1167.56,624.86 1168.56,625.43 1169.56,625.14 1170.56,625.32 1171.56,625.58 1172.56,625.39 1173.56,625.08 1174.56,625.54 1175.56,625.11 1176.57,625.6 1177.57,625.14 1178.57,625.17 1179.57,625.24 1180.57,625.05 1181.57,625.68 1182.57,625.63 1183.57,625.12 1184.57,625.36 1185.57,625.36 1186.57,625.19 1187.57,625.4 1188.57,625.26 1189.57,625.04 1190.57,625.37 1191.57,625.51 1192.57,625.49 1193.57,625.27 1194.57,625.09 1195.57,624.91 1196.57,625.63 1197.57,625.18 1198.57,625.41 1199.57,624.96 1200.57,624.92 1201.57,625.56 1202.57,625.63 1203.57,625.37 1204.57,625.4 1205.57,625.74 1206.57,624.92 1207.57,625.05 1208.57,625.23 1209.58,625.68 1210.58,624.95 1211.58,625.39 1212.58,624.88 1213.58,624.87 1214.58,625.26 1215.58,625.49 1216.58,625.15 1217.58,624.97 1218.58,625.12 1219.58,625.54 1220.58,625.68 1221.58,625.62 1222.58,625.29 1223.58,625.38 1224.58,624.97 1225.58,625.16 1226.58,625.6 1227.58,625.7 1228.58,625.38 1229.58,625.31 1230.58,625.72 1231.58,625.15 1232.58,625.09 1233.58,624.86 1234.58,625.32 1235.58,624.95 1236.58,625.09 1237.58,625.37 1238.58,625.11 1239.58,625.46 1240.58,625.19 1241.59,625.32 1242.59,625.36 1243.59,624.95 1244.59,625.65 1245.59,624.99 1246.59,625.53 1247.59,625.17 1248.59,624.98 1249.59,625.09 1250.59,624.86 1251.59,625.31 1252.59,625.65 1253.59,625.39 1254.59,625.12 1255.59,625.61 1256.59,625.11 1257.59,624.91 1258.59,625.3 1259.59,625.62 1260.59,625.1 1261.59,625.73 1262.59,625.11 1263.59,625.55 1264.59,625.19 1265.59,624.97 1266.59,625.73 1267.59,625.51 1268.59,625.19 1269.59,625.16 1270.59,625.13 1271.59,625.52 1272.59,625.39 1273.6,625.65 1274.6,625.17 1275.6,625.09 1276.6,625.11 1277.6,625.45 1278.6,625.3 1279.6,625.07 1280.6,625.26 1281.6,625 1282.6,625.7 1283.6,625.3 1284.6,625.2 1285.6,625.09 1286.6,625.64 1287.6,625.7 1288.6,624.92 1289.6,624.92 1289.6,628.91 1288.6,629.41 1287.6,628.87 1286.6,628.85 1285.6,628.95 1284.6,628.89 1283.6,629.13 1282.6,629.34 1281.6,629.54 1280.6,629.57 1279.6,628.93 1278.6,629.29 1277.6,628.89 1276.6,628.95 1275.6,629.63 1274.6,628.78 1273.6,629.12 1272.59,629.18 1271.59,629.26 1270.59,629.47 1269.59,629.09 1268.59,629.37 1267.59,628.87 1266.59,629.43 1265.59,629.36 1264.59,629.29 1263.59,629.21 1262.59,629.44 1261.59,628.76 1260.59,629.58 1259.59,628.85 1258.59,629.57 1257.59,629.41 1256.59,629.61 1255.59,629.61 1254.59,629.48 1253.59,629.36 1252.59,629.04 1251.59,629 1250.59,629.35 1249.59,629.13 1248.59,629.21 1247.59,629.45 1246.59,628.84 1245.59,628.78 1244.59,629.26 1243.59,629.53 1242.59,629.59 1241.59,628.75 1240.58,629.62 1239.58,629.35 1238.58,629.13 1237.58,629.07 1236.58,629.14 1235.58,629.41 1234.58,629.48 1233.58,629.02 1232.58,629.41 1231.58,629.41 1230.58,629.12 1229.58,628.95 1228.58,629.24 1227.58,628.91 1226.58,629.26 1225.58,629.54 1224.58,629.56 1223.58,629.49 1222.58,629.02 1221.58,629.3 1220.58,628.97 1219.58,628.87 1218.58,629.61 1217.58,629.55 1216.58,629.3 1215.58,628.85 1214.58,629.21 1213.58,629.55 1212.58,629.15 1211.58,628.77 1210.58,629.16 1209.58,629.57 1208.57,628.77 1207.57,628.89 1206.57,629.24 1205.57,629.63 1204.57,628.99 1203.57,629.14 1202.57,629.45 1201.57,628.91 1200.57,629.13 1199.57,629.59 1198.57,629.59 1197.57,628.86 1196.57,628.92 1195.57,629.33 1194.57,629.57 1193.57,629.47 1192.57,629.49 1191.57,629.1 1190.57,629.58 1189.57,629.17 1188.57,629.19 1187.57,629.06 1186.57,629.56 1185.57,629.24 1184.57,628.97 1183.57,629.6 1182.57,629.03 1181.57,629.6 1180.57,628.77 1179.57,629.12 1178.57,628.92 1177.57,629.16 1176.57,629 1175.56,629.35 1174.56,629.02 1173.56,629.11 1172.56,629.15 1171.56,629.64 1170.56,629.13 1169.56,629.28 1168.56,629.36 1167.56,629.33 1166.56,629.58 1165.56,629.05 1164.56,628.76 1163.56,629.26 1162.56,629.04 1161.56,629.33 1160.56,629.39 1159.56,628.84 1158.56,629.52 1157.56,629.45 1156.56,628.93 1155.56,628.85 1154.56,629.36 1153.56,629.09 1152.56,629.44 1151.56,629.14 1150.56,628.94 1149.56,629.14 1148.56,629.3 1147.56,629.05 1146.56,629.44 1145.56,629.12 1144.56,628.97 1143.55,629.44 1142.55,629.31 1141.55,629.2 1140.55,628.74 1139.55,629.54 1138.55,628.85 1137.55,628.94 1136.55,629.33 1135.55,629.06 1134.55,628.93 1133.55,629.01 1132.55,628.85 1131.55,628.9 1130.55,629.3 1129.55,629.41 1128.55,629.48 1127.55,629.24 1126.55,629.08 1125.55,628.96 1124.55,628.88 1123.55,628.61 1122.55,629.33 1121.55,628.75 1120.55,629.36 1119.55,629 1118.55,629.37 1117.55,629.1 1116.55,628.84 1115.55,628.61 1114.55,628.72 1113.55,628.59 1112.55,629.08 1111.54,628.42 1110.54,628.18 1109.54,628.29 1108.54,628.1 1107.54,628.36 1106.54,628.44 1105.54,628.04 1104.54,627.85 1103.54,627.66 1102.54,627.58 1101.54,627.73 1100.54,627.18 1099.54,626.74 1098.54,626.6 1097.54,626.69 1096.54,626.19 1095.54,625.79ZM1307.7,622.18 1308.72,622.34 1309.73,622.6 1310.75,623.02 1311.76,623.56 1312.78,623.79 1313.79,623.58 1314.81,624.48 1315.82,624.54 1316.84,624.3 1317.85,624.12 1318.87,624.95 1319.88,624.65 1320.9,624.9 1321.91,624.55 1322.93,624.61 1323.94,624.79 1324.96,625.23 1324.96,628.48 1323.94,628.57 1322.93,628.93 1321.91,628.42 1320.9,629.07 1319.88,628.43 1318.87,628.23 1317.85,628.75 1316.84,628.48 1315.82,628.42 1314.81,627.78 1313.79,628.04 1312.78,627.22 1311.76,627.43 1310.75,627.15 1309.73,626.81 1308.72,626.15 1307.7,626.03ZM1343.06,621.96 1344.08,621.88 1345.09,623.12 1346.11,623.3 1347.12,623.75 1348.14,624.08 1349.15,623.54 1350.17,624.16 1351.18,623.9 1352.2,624.48 1353.21,624.88 1354.23,624.68 1355.24,624.34 1356.26,624.95 1357.27,625.24 1358.29,625.23 1359.3,625.36 1360.32,624.64 1360.32,628.59 1359.3,629.14 1358.29,629.18 1357.27,628.4 1356.26,629.03 1355.24,628.63 1354.23,628.78 1353.21,628.57 1352.2,627.97 1351.18,627.81 1350.17,627.51 1349.15,627.82 1348.14,627.34 1347.12,626.89 1346.11,626.87 1345.09,626.35 1344.08,626.11 1343.06,626.11ZM1378.42,621.56 1379.44,622.38 1380.45,622.52 1381.47,623.05 1382.48,622.93 1383.5,623.9 1384.51,623.41 1385.53,624.24 1386.54,623.9 1387.56,624.12 1388.57,624.16 1389.59,624.42 1390.6,625.02 1391.62,624.94 1392.63,624.66 1393.65,625.26 1394.66,624.62 1395.68,624.83 1395.68,629.05 1394.66,628.59 1393.65,628.66 1392.63,628.53 1391.62,629.09 1390.6,628.71 1389.59,628.79 1388.57,628.81 1387.56,627.91 1386.54,627.96 1385.53,628.03 1384.51,628.14 1383.5,627.18 1382.48,627.56 1381.47,626.68 1380.45,626.29 1379.44,625.85 1378.42,625.64ZM1413.78,622.17 1414.8,621.94 1415.81,622.55 1416.83,622.9 1417.84,623.14 1418.86,623.8 1419.87,623.58 1420.89,624.16 1421.9,624.31 1422.92,624.09 1423.93,624.28 1424.95,624.72 1425.96,624.76 1426.98,624.44 1427.99,624.66 1429.01,624.75 1430.02,625.03 1431.04,624.69 1431.04,629.15 1430.02,629.02 1429.01,628.94 1427.99,628.7 1426.98,629.06 1425.96,629 1424.95,628.62 1423.93,628.11 1422.92,627.84 1421.9,627.83 1420.89,627.82 1419.87,627.39 1418.86,627.67 1417.84,627.38 1416.83,627.34 1415.81,626.89 1414.8,626.18 1413.78,625.77ZM1449.14,621.62 1450.14,622.31 1451.14,622.92 1452.14,623.06 1453.14,623.42 1454.14,622.97 1455.14,623.45 1456.14,623.73 1457.14,624.12 1458.14,624.32 1459.14,623.82 1460.14,624.09 1461.14,624.11 1462.14,624.04 1463.14,624.63 1464.14,624.64 1465.14,624.54 1466.15,624.53 1467.15,624.42 1468.15,624.74 1469.15,624.97 1470.15,625.15 1471.15,625.37 1472.15,625 1473.15,624.96 1474.15,625.5 1475.15,625.51 1476.15,625.42 1477.15,625.04 1478.15,624.73 1479.15,624.74 1480.15,625.12 1481.15,625.48 1482.15,625.22 1483.15,624.78 1484.15,625.51 1485.15,624.85 1486.15,624.94 1487.15,624.81 1488.15,624.83 1489.15,625.38 1490.15,624.98 1491.15,625.27 1492.15,625.65 1493.15,625.58 1494.15,625.29 1495.15,625.04 1496.15,624.85 1497.15,625.64 1498.16,625.12 1499.16,625.45 1500.16,625.65 1501.16,625.63 1502.16,625.4 1503.16,625.19 1504.16,625.46 1505.16,625.16 1506.16,625.56 1507.16,625.42 1508.16,624.94 1509.16,625.07 1510.16,625.33 1511.16,625.25 1512.16,625.5 1513.16,625.49 1514.16,625.61 1515.16,625.4 1516.16,625.68 1517.16,625.47 1518.16,625.69 1519.16,625.6 1520.16,625.24 1521.16,625.7 1522.16,625.55 1523.16,625.67 1524.16,625.51 1525.16,624.91 1526.16,625.74 1527.16,625 1528.16,625.04 1529.16,625.02 1530.17,625.36 1531.17,625.25 1532.17,625.54 1533.17,625.48 1534.17,625.74 1535.17,624.93 1536.17,625.09 1537.17,625.68 1538.17,625.44 1539.17,625.09 1540.17,625.59 1541.17,625.28 1542.17,624.95 1543.17,624.93 1544.17,625.58 1545.17,624.9 1546.17,625.27 1547.17,625.16 1548.17,625.49 1549.17,625.53 1550.17,625.12 1551.17,625.15 1552.17,624.89 1553.17,625.07 1554.17,625.15 1555.17,624.94 1556.17,624.93 1557.17,625.11 1558.17,625.22 1559.17,625.45 1560.17,625.64 1561.17,625.3 1562.17,625.48 1563.18,625.59 1564.18,625.17 1565.18,625.6 1566.18,625.17 1567.18,625.7 1568.18,625.54 1569.18,625.1 1570.18,625.25 1571.18,625.01 1572.18,624.98 1573.18,625.07 1574.18,625.63 1575.18,625.6 1576.18,625.61 1577.18,624.9 1578.18,625.59 1579.18,625.07 1580.18,625.12 1581.18,625.1 1582.18,625.21 1583.18,625.69 1584.18,625.37 1585.18,624.93 1586.18,625.13 1587.18,625.45 1588.18,625.05 1589.18,624.85 1590.18,625.48 1591.18,625.2 1592.18,625.35 1593.18,625.35 1594.18,625.37 1595.19,625.32 1596.19,624.88 1597.19,625.69 1598.19,625.47 1599.19,625.63 1600.19,625.05 1601.19,625.39 1602.19,625.32 1603.19,624.89 1604.19,625.27 1605.19,625.3 1606.19,625.65 1607.19,624.86 1608.19,625.46 1609.19,625.55 1610.19,625.67 1611.19,625.6 1612.19,624.86 1613.19,624.97 1614.19,625.04 1615.19,624.98 1616.19,625.1 1617.19,625.48 1618.19,625.26 1619.19,624.91 1620.19,625.28 1621.19,625.5 1622.19,625.14 1623.19,625.43 1624.19,624.91 1625.19,625.24 1626.19,625.25 1627.2,625.07 1628.2,625.34 1629.2,625.66 1630.2,625.4 1631.2,624.89 1632.2,624.95 1633.2,625.11 1634.2,624.99 1635.2,624.97 1636.2,625.1 1637.2,624.99 1638.2,625.02 1639.2,625.42 1640.2,624.87 1641.2,625.57 1642.2,625.6 1643.2,624.91 1643.2,629.29 1642.2,629.07 1641.2,629.09 1640.2,629.47 1639.2,629.49 1638.2,629.61 1637.2,629.25 1636.2,629.08 1635.2,629.2 1634.2,629.43 1633.2,628.77 1632.2,629.45 1631.2,628.83 1630.2,629.08 1629.2,629.61 1628.2,629.03 1627.2,629.42 1626.19,629.36 1625.19,629.57 1624.19,629.43 1623.19,629.39 1622.19,629.2 1621.19,629.11 1620.19,629.5 1619.19,629.49 1618.19,629.5 1617.19,629.37 1616.19,629.01 1615.19,629.35 1614.19,628.84 1613.19,629.41 1612.19,629.13 1611.19,628.92 1610.19,629.51 1609.19,629.47 1608.19,629.08 1607.19,629.65 1606.19,628.79 1605.19,628.91 1604.19,628.91 1603.19,629.39 1602.19,628.88 1601.19,628.81 1600.19,628.79 1599.19,628.83 1598.19,629.52 1597.19,629.07 1596.19,629.28 1595.19,629.06 1594.18,629.27 1593.18,629.32 1592.18,629.33 1591.18,629.6 1590.18,628.99 1589.18,629.16 1588.18,629.62 1587.18,628.93 1586.18,628.81 1585.18,628.79 1584.18,629.04 1583.18,629.26 1582.18,629.07 1581.18,629.07 1580.18,629.45 1579.18,628.92 1578.18,629.52 1577.18,629.59 1576.18,629.25 1575.18,629.63 1574.18,629.32 1573.18,629.57 1572.18,629.4 1571.18,629.5 1570.18,628.96 1569.18,629.02 1568.18,629.34 1567.18,628.98 1566.18,629.24 1565.18,628.98 1564.18,629.17 1563.18,629.5 1562.17,629.33 1561.17,629.23 1560.17,629.37 1559.17,629.03 1558.17,629.2 1557.17,629.08 1556.17,629.35 1555.17,629.36 1554.17,629 1553.17,629.02 1552.17,629.11 1551.17,629.6 1550.17,629.23 1549.17,629.41 1548.17,629.27 1547.17,629.42 1546.17,628.98 1545.17,629.11 1544.17,628.88 1543.17,629.48 1542.17,629.42 1541.17,629.48 1540.17,629.64 1539.17,629.33 1538.17,629.47 1537.17,629.17 1536.17,629.35 1535.17,629.17 1534.17,628.93 1533.17,629.31 1532.17,629.33 1531.17,629.39 1530.17,629.65 1529.16,629.3 1528.16,629.44 1527.16,629.06 1526.16,629.27 1525.16,628.95 1524.16,629.11 1523.16,629.17 1522.16,629.62 1521.16,629.44 1520.16,629.43 1519.16,629.56 1518.16,629.13 1517.16,628.8 1516.16,629.6 1515.16,629.2 1514.16,628.92 1513.16,629.48 1512.16,629.05 1511.16,628.85 1510.16,628.92 1509.16,628.78 1508.16,628.99 1507.16,628.92 1506.16,629.43 1505.16,629.09 1504.16,628.89 1503.16,628.76 1502.16,629.44 1501.16,629.34 1500.16,628.84 1499.16,629.4 1498.16,629.55 1497.15,629.14 1496.15,628.77 1495.15,628.75 1494.15,629.08 1493.15,629.29 1492.15,628.86 1491.15,629.4 1490.15,629.37 1489.15,629.45 1488.15,628.83 1487.15,629.36 1486.15,629.02 1485.15,629.02 1484.15,629.5 1483.15,628.93 1482.15,629.44 1481.15,628.69 1480.15,629.42 1479.15,628.88 1478.15,628.91 1477.15,629.28 1476.15,628.94 1475.15,628.63 1474.15,628.87 1473.15,628.72 1472.15,628.56 1471.15,628.54 1470.15,629.11 1469.15,628.88 1468.15,628.58 1467.15,628.79 1466.15,628.28 1465.14,628.75 1464.14,628.27 1463.14,628.79 1462.14,628.17 1461.14,628.36 1460.14,628.27 1459.14,628.43 1458.14,628.06 1457.14,627.8 1456.14,627.57 1455.14,627.58 1454.14,626.8 1453.14,627.2 1452.14,627.14 1451.14,626.61 1450.14,626.39 1449.14,625.75Z" stroke="none" fill="#38f40c" stroke-width="1"/>
<path d="M-124.6,651V241M-107,214.29V642M-89.24,651V241M-71.64,214.65V642M-53.88,651V241M-36.28,215V642M-18.52,651V241M-0.92,215.36V642M16.84,651V241M34.44,215.71V642M229,651V241M246.6,214.29V642M264.36,651V241M281.96,214.65V642M299.72,651V241M317.32,215V642M335.08,651V241M352.68,215.36V642M370.44,651V241M388.04,215.71V642M582.6,651V241M600.2,214.29V642M617.96,651V241M635.56,214.65V642M653.32,651V241M670.92,215V642M688.68,651V241M706.28,215.36V642M724.04,651V241M741.64,215.71V642M936.2,651V241M953.8,214.29V642M971.56,651V241M989.16,214.65V642M1006.92,651V241M1024.52,215V642M1042.28,651V241M1059.88,215.36V642M1077.64,651V241M1095.24,215.71V642M1289.8,651V241M1307.4,214.29V642M1325.16,651V241M1342.76,214.65V642M1360.52,651V241M1378.12,215V642M1395.88,651V241M1413.48,215.36V642M1431.24,651V241M1448.84,215.71V642" stroke="#186200" fill="none" stroke-width="1.2"/>
<path d="M-124.4,243.78 -123.51,243.77 -122.62,243.15 -121.73,243.23 -120.84,242.44 -119.95,242.95 -119.06,242.22 -118.17,241.6 -117.28,241.56 -116.39,241.85 -115.5,241.47 -114.61,240.82 -113.72,240.39 -112.83,240.16 -111.94,240.62 -111.05,239.31 -110.16,239.97 -109.27,239.67 -108.38,238.64 -107.49,238.52 -106.6,238.52 -106.6,248.78 -107.49,248.45 -108.38,248.55 -109.27,248.76 -110.16,249.8 -111.05,249.03 -111.94,250.39 -112.83,250.61 -113.72,250.9 -114.61,251.14 -115.5,251.41 -116.39,251.35 -117.28,250.97 -118.17,251.9 -119.06,252.04 -119.95,252.23 -120.84,252.14 -121.73,252.51 -122.62,253.63 -123.51,253.85 -124.4,253.94ZM-89.04,244.42 -88.15,244.02 -87.26,243.76 -86.37,242.75 -85.48,242.59 -84.59,242.15 -83.7,241.97 -82.81,241.71 -81.92,242.48 -81.03,242.13 -80.14,241.03 -79.25,240.83 -78.36,241.41 -77.47,240.67 -76.58,240.16 -75.69,240.01 -74.8,239.51 -73.91,239.62 -73.02,239.52 -72.13,239 -71.24,239.1 -71.24,249.07 -72.13,248.61 -73.02,248.83 -73.91,248.77 -74.8,249.56 -75.69,249.84 -76.58,249.98 -77.47,249.94 -78.36,251.1 -79.25,250.34 -80.14,251.67 -81.03,251.43 -81.92,251.71 -82.81,252.55 -83.7,252.06 -84.59,252.68 -85.48,252.78 -86.37,252.64 -87.26,253.91 -88.15,253.72 -89.04,253.39ZM-53.68,244.83 -52.79,244 -51.9,243.36 -51.01,243.27 -50.12,242.68 -49.23,242.44 -48.34,242.66 -47.45,242.49 -46.56,241.91 -45.67,241.79 -44.78,241.2 -43.89,241.6 -43,241.01 -42.11,240.46 -41.22,240.6 -40.33,239.99 -39.44,239.82 -38.55,239.35 -37.66,239.87 -36.77,239 -35.88,239.55 -35.88,249.35 -36.77,249.34 -37.66,249.11 -38.55,249.24 -39.44,249.89 -40.33,250.08 -41.22,250.83 -42.11,250.91 -43,251.38 -43.89,250.9 -44.78,251.62 -45.67,251.68 -46.56,251.77 -47.45,252.7 -48.34,252.89 -49.23,252.36 -50.12,253.53 -51.01,253.62 -51.9,253.85 -52.79,253.46 -53.68,254.03ZM-18.32,244.2 -17.43,244.07 -16.54,243.96 -15.65,243.29 -14.76,243.81 -13.87,242.77 -12.98,242.49 -12.09,243.27 -11.2,242.86 -10.31,241.93 -9.42,241.76 -8.53,242.08 -7.64,241.56 -6.75,240.87 -5.86,240.83 -4.97,241.05 -4.08,239.75 -3.19,240.68 -2.3,239.9 -1.41,239.17 -0.52,239.64 -0.52,249.39 -1.41,249.3 -2.3,249.52 -3.19,249.75 -4.08,250.05 -4.97,250.22 -5.86,250.23 -6.75,251.41 -7.64,251.6 -8.53,251.54 -9.42,251.38 -10.31,252.11 -11.2,251.76 -12.09,252.14 -12.98,252.42 -13.87,253.33 -14.76,253.82 -15.65,253.32 -16.54,253.98 -17.43,254.05 -18.32,253.92ZM17.04,244.69 17.93,245.17 18.82,244.06 19.71,244.39 20.6,243.34 21.49,243.61 22.38,243.5 23.27,242.69 24.16,242.56 25.05,242.57 25.94,242.35 26.83,241.56 27.72,241.6 28.61,242.04 29.5,240.96 30.39,241.24 31.28,240.28 32.17,240.32 33.06,240.12 33.95,239.95 34.84,239.83 34.84,249.75 33.95,249.73 33.06,249.36 32.17,249.76 31.28,250.62 30.39,250.79 29.5,250.84 28.61,250.69 27.72,251.61 26.83,251.26 25.94,252.2 25.05,252.62 24.16,252.18 23.27,252.55 22.38,253.13 21.49,253.77 20.6,253.43 19.71,254.37 18.82,254.54 17.93,254.68 17.04,255.06ZM229.2,243.82 230.09,243.74 230.98,243.26 231.87,242.46 232.76,242.82 233.65,242.7 234.54,241.79 235.43,241.89 236.32,242.2 237.21,241.77 238.1,241.05 238.99,240.55 239.88,240.16 240.77,239.76 241.66,239.72 242.55,239.76 243.44,239.5 244.33,238.84 245.22,238.92 246.11,238.63 247,238.81 247,248.58 246.11,247.99 245.22,248.64 244.33,249.02 243.44,249.1 242.55,249.54 241.66,249.41 240.77,250.35 239.88,250.57 238.99,250.75 238.1,250.89 237.21,251.35 236.32,251.66 235.43,251.83 234.54,251.46 233.65,251.76 232.76,252.65 231.87,253.2 230.98,253.03 230.09,253.86 229.2,254.08ZM264.56,243.83 265.45,243.22 266.34,243.67 267.23,243.76 268.12,242.4 269.01,242.28 269.9,242.1 270.79,242.52 271.68,241.77 272.57,241.29 273.46,241.24 274.35,240.83 275.24,240.56 276.13,240.67 277.02,240.53 277.91,239.75 278.8,239.85 279.69,238.96 280.58,239.82 281.47,238.51 282.36,238.79 282.36,248.38 281.47,249.19 280.58,248.87 279.69,249 278.8,249.15 277.91,250.05 277.02,250.12 276.13,250.57 275.24,250.29 274.35,251.44 273.46,251.39 272.57,251.14 271.68,251.93 270.79,252.38 269.9,252.34 269.01,252.24 268.12,252.75 267.23,253.34 266.34,253.07 265.45,253.38 264.56,254.46ZM299.92,244.68 300.81,243.87 301.7,243.76 302.59,243.9 303.48,243.44 304.37,242.96 305.26,242.49 306.15,242.78 307.04,242.16 307.93,241.63 308.82,241.54 309.71,241.76 310.6,240.61 311.49,240.66 312.38,240.88 313.27,240.47 314.16,240 315.05,239.39 315.94,238.99 316.83,239.15 317.72,239.23 317.72,248.74 316.83,248.94 315.94,249.65 315.05,249.65 314.16,249.38 313.27,250.61 312.38,250.38 311.49,250.31 310.6,250.47 309.71,251.69 308.82,251.47 307.93,252.31 307.04,251.41 306.15,252.11 305.26,253.01 304.37,252.57 303.48,253.38 302.59,253.29 301.7,253.75 300.81,254.36 299.92,253.86ZM335.28,244.77 336.17,244.54 337.06,244.02 337.95,244.17 338.84,243.1 339.73,243.43 340.62,242.88 341.51,243.18 342.4,242.36 343.29,241.85 344.18,241.77 345.07,241.72 345.96,240.92 346.85,241.59 347.74,241.07 348.63,240.39 349.52,240.48 350.41,240.67 351.3,239.94 352.19,239.44 353.08,239.5 353.08,248.88 352.19,249.49 351.3,250.16 350.41,249.61 349.52,250.09 348.63,250.05 347.74,250.14 346.85,251.49 345.96,251.74 345.07,251.37 344.18,251.53 343.29,251.49 342.4,252.7 341.51,252.06 340.62,253.22 339.73,253.01 338.84,253.14 337.95,253.05 337.06,253.54 336.17,254.38 335.28,254.73ZM370.64,245.32 371.53,244.63 372.42,244.91 373.31,244.33 374.2,243.54 375.09,244.13 375.98,243.39 376.87,242.83 377.76,242.69 378.65,242.14 379.54,242.33 380.43,242.05 381.32,241.3 382.21,241.33 383.1,240.89 383.99,241.38 384.88,240.27 385.77,240.5 386.66,240.27 387.55,239.96 388.44,239.42 388.44,248.99 387.55,249.94 386.66,249.46 385.77,249.74 384.88,250.92 383.99,250.56 383.1,250.65 382.21,251.07 381.32,251.59 380.43,251.57 379.54,251.92 378.65,252.9 377.76,252.48 376.87,252.32 375.98,252.86 375.09,253.41 374.2,253.37 373.31,254.28 372.42,253.82 371.53,253.85 370.64,254.4ZM582.8,243.33 583.69,244.02 584.58,243.02 585.47,243.18 586.36,242.69 587.25,242.85 588.14,241.97 589.03,242.32 589.92,242.13 590.81,241.78 591.7,240.9 592.59,240.6 593.48,240.49 594.37,240.65 595.26,240.22 596.15,239.48 597.04,239.46 597.93,238.92 598.82,239.34 599.71,239.14 600.6,238.25 600.6,248.3 599.71,248.27 598.82,248.67 597.93,248.68 597.04,248.81 596.15,250.13 595.26,250.02 594.37,250.13 593.48,250.68 592.59,251.17 591.7,250.95 590.81,251.52 589.92,250.88 589.03,252.22 588.14,252.24 587.25,252.67 586.36,252.31 585.47,252.22 584.58,252.92 583.69,253.32 582.8,254.12ZM618.16,243.62 619.05,243.97 619.94,242.94 620.83,243.85 621.72,242.64 622.61,242.62 623.5,242.39 624.39,241.96 625.28,242.34 626.17,242.25 627.06,240.99 627.95,240.66 628.84,240.54 629.73,240.43 630.62,239.72 631.51,239.89 632.4,239.88 633.29,239.14 634.18,238.98 635.07,238.9 635.96,238.65 635.96,248.84 635.07,249.16 634.18,249.41 633.29,249.38 632.4,249.64 631.51,250.16 630.62,249.98 629.73,249.9 628.84,250.41 627.95,250.39 627.06,251.03 626.17,251.73 625.28,252.2 624.39,251.92 623.5,252.8 622.61,252.52 621.72,253.39 620.83,253.29 619.94,253.38 619.05,253.15 618.16,253.93ZM653.52,244.58 654.41,243.85 655.3,243.85 656.19,243.36 657.08,243.11 657.97,243.06 658.86,243.11 659.75,242.25 660.64,241.75 661.53,242.42 662.42,241.44 663.31,241.06 664.2,241.55 665.09,240.82 665.98,241.01 666.87,240.92 667.76,239.67 668.65,240.07 669.54,239.4 670.43,239.15 671.32,238.84 671.32,249.25 670.43,248.53 669.54,248.79 668.65,249.87 667.76,249.41 666.87,250.03 665.98,250.13 665.09,250.73 664.2,250.34 663.31,251.16 662.42,251.12 661.53,251.73 660.64,251.83 659.75,252.78 658.86,252.02 657.97,252.38 657.08,252.72 656.19,253.22 655.3,253.2 654.41,254.16 653.52,254.16ZM688.88,244.55 689.77,244.27 690.66,243.54 691.55,243.34 692.44,243.95 693.33,243.24 694.22,242.42 695.11,243.09 696,242.58 696.89,242.45 697.78,242.26 698.67,241.26 699.56,241.38 700.45,240.83 701.34,240.86 702.23,240.22 703.12,240.82 704.01,240.48 704.9,239.93 705.79,239.62 706.68,239.83 706.68,248.97 705.79,249.68 704.9,249.18 704.01,250.05 703.12,250.14 702.23,250.51 701.34,250.27 700.45,250.49 699.56,251.6 698.67,251 697.78,252.07 696.89,251.95 696,252.75 695.11,252.77 694.22,253.38 693.33,253.48 692.44,253.58 691.55,253.79 690.66,253.67 689.77,254.06 688.88,254.64ZM724.24,244.99 725.13,244.78 726.02,244.89 726.91,244.27 727.8,243.48 728.69,243.74 729.58,243.08 730.47,243.37 731.36,242.82 732.25,243.03 733.14,242.51 734.03,242.14 734.92,241.28 735.81,242.02 736.7,240.79 737.59,241.26 738.48,241.07 739.37,240.04 740.26,239.59 741.15,239.32 742.04,239.2 742.04,249.15 741.15,249.84 740.26,250.35 739.37,249.63 738.48,249.89 737.59,250.1 736.7,251.46 735.81,251.4 734.92,251.89 734.03,251.53 733.14,251.82 732.25,252.39 731.36,252.59 730.47,252.33 729.58,253.46 728.69,252.97 727.8,253.41 726.91,253.39 726.02,254.69 725.13,254.02 724.24,254.31ZM936.4,243.54 937.29,243.8 938.18,243.47 939.07,243.23 939.96,243.03 940.85,242.48 941.74,242.32 942.63,241.43 943.52,241.14 944.41,241.27 945.3,241.64 946.19,240.57 947.08,240.22 947.97,240.82 948.86,239.44 949.75,239.87 950.64,238.92 951.53,238.94 952.42,239.4 953.31,238.34 954.2,238.88 954.2,248.02 953.31,248.25 952.42,248.68 951.53,249.15 950.64,249.22 949.75,249.83 948.86,250.3 947.97,250.61 947.08,250.1 946.19,251.08 945.3,250.76 944.41,250.59 943.52,251.08 942.63,251.55 941.74,251.97 940.85,252.06 939.96,252.41 939.07,252.25 938.18,252.52 937.29,253.22 936.4,253.86ZM971.76,243.88 972.65,243.39 973.54,243.25 974.43,243.19 975.32,242.89 976.21,243.15 977.1,242.23 977.99,242.16 978.88,242.45 979.77,241.53 980.66,241.66 981.55,241.52 982.44,240.33 983.33,240.34 984.22,240.86 985.11,240.15 986,239.39 986.89,239.11 987.78,238.85 988.67,239.5 989.56,238.3 989.56,248.01 988.67,249.03 987.78,248.89 986.89,249.54 986,249.75 985.11,249.3 984.22,249.91 983.33,250.05 982.44,250.29 981.55,250.72 980.66,251.78 979.77,251.85 978.88,251.94 977.99,251.62 977.1,252.81 976.21,252.13 975.32,252.63 974.43,253.29 973.54,253.9 972.65,253.75 971.76,254.24ZM1007.12,243.92 1008.01,244.47 1008.9,243.84 1009.79,243.01 1010.68,243.38 1011.57,243.34 1012.46,242.37 1013.35,242.68 1014.24,241.91 1015.13,241.81 1016.02,242.19 1016.91,241.92 1017.8,241.71 1018.69,240.62 1019.58,240.92 1020.47,240.62 1021.36,240.54 1022.25,240.03 1023.14,240 1024.03,239.79 1024.92,238.65 1024.92,249.23 1024.03,248.51 1023.14,249.62 1022.25,249.12 1021.36,250.13 1020.47,250.32 1019.58,250.36 1018.69,250.9 1017.8,251.07 1016.91,251.35 1016.02,250.96 1015.13,252.27 1014.24,252.24 1013.35,252.4 1012.46,252.28 1011.57,252.61 1010.68,253.21 1009.79,253.57 1008.9,253.99 1008.01,253.7 1007.12,253.75ZM1042.48,245.2 1043.37,244.45 1044.26,243.5 1045.15,244.3 1046.04,243.35 1046.93,243.81 1047.82,242.94 1048.71,242.89 1049.6,242.21 1050.49,242.39 1051.38,242.11 1052.27,241.38 1053.16,241 1054.05,240.92 1054.94,241.01 1055.83,240.62 1056.72,240.88 1057.61,240.53 1058.5,239.56 1059.39,239.1 1060.28,239.11 1060.28,249.53 1059.39,249.36 1058.5,249.49 1057.61,249.42 1056.72,250.54 1055.83,250.68 1054.94,250.5 1054.05,251.19 1053.16,251.51 1052.27,252.07 1051.38,252.22 1050.49,251.86 1049.6,251.93 1048.71,252.52 1047.82,252.58 1046.93,252.59 1046.04,253.24 1045.15,254.08 1044.26,253.98 1043.37,254.11 1042.48,254.77ZM1077.84,244.83 1078.73,244.88 1079.62,244.27 1080.51,244.15 1081.4,243.66 1082.29,243.57 1083.18,242.99 1084.07,242.83 1084.96,242.76 1085.85,242.16 1086.74,242.72 1087.63,241.52 1088.52,241.48 1089.41,241.23 1090.3,240.78 1091.19,241.44 1092.08,240.37 1092.97,239.98 1093.86,239.71 1094.75,240.2 1095.64,239.37 1095.64,249.92 1094.75,250.15 1093.86,249.43 1092.97,249.89 1092.08,249.87 1091.19,250.55 1090.3,251.1 1089.41,251.49 1088.52,251.67 1087.63,251.74 1086.74,251.63 1085.85,251.71 1084.96,252.95 1084.07,253 1083.18,253.41 1082.29,252.99 1081.4,253.28 1080.51,253.4 1079.62,254.68 1078.73,254.66 1077.84,254.6ZM1290,243.84 1290.89,243.1 1291.78,243.69 1292.67,242.46 1293.56,243.15 1294.45,242.72 1295.34,242.54 1296.23,241.52 1297.12,242.13 1298.01,241.27 1298.9,241.61 1299.79,241.03 1300.68,241.14 1301.57,240.82 1302.46,239.45 1303.35,239.77 1304.24,239.63 1305.13,239.83 1306.02,239.45 1306.91,238.83 1307.8,238.95 1307.8,248.42 1306.91,248.83 1306.02,248.92 1305.13,248.76 1304.24,248.82 1303.35,249.02 1302.46,249.37 1301.57,249.56 1300.68,250.32 1299.79,250.6 1298.9,250.32 1298.01,251.15 1297.12,251.19 1296.23,251.53 1295.34,252.1 1294.45,252.21 1293.56,252.38 1292.67,252.18 1291.78,252.62 1290.89,253.68 1290,254.12ZM1325.36,243.71 1326.25,243.42 1327.14,243.94 1328.03,243.67 1328.92,243.08 1329.81,243.31 1330.7,243.02 1331.59,242.44 1332.48,242.2 1333.37,241.93 1334.26,241.6 1335.15,240.59 1336.04,241.27 1336.93,240.86 1337.82,240.05 1338.71,240.53 1339.6,239.97 1340.49,238.96 1341.38,238.87 1342.27,239.18 1343.16,238.55 1343.16,248.79 1342.27,249.1 1341.38,249.17 1340.49,249.58 1339.6,249.54 1338.71,249.87 1337.82,250.24 1336.93,250.97 1336.04,250.66 1335.15,250.38 1334.26,251.75 1333.37,250.98 1332.48,251.78 1331.59,251.78 1330.7,252.03 1329.81,252.08 1328.92,253.36 1328.03,253.45 1327.14,253.42 1326.25,253.06 1325.36,253.43ZM1360.72,244.28 1361.61,244.57 1362.5,244.18 1363.39,243.2 1364.28,243.04 1365.17,243.44 1366.06,242.77 1366.95,242.53 1367.84,242.3 1368.73,242.25 1369.62,241.13 1370.51,241.08 1371.4,240.72 1372.29,241.05 1373.18,240.76 1374.07,239.77 1374.96,239.71 1375.85,239.29 1376.74,240.1 1377.63,238.82 1378.52,238.72 1378.52,249.21 1377.63,248.53 1376.74,249.34 1375.85,249.46 1374.96,249.98 1374.07,249.6 1373.18,250.46 1372.29,251.14 1371.4,250.47 1370.51,251.59 1369.62,251.87 1368.73,252.2 1367.84,251.43 1366.95,252.08 1366.06,252.11 1365.17,252.31 1364.28,252.87 1363.39,253.64 1362.5,253.26 1361.61,254.42 1360.72,254.55ZM1396.08,244.18 1396.97,244.36 1397.86,243.6 1398.75,244.35 1399.64,243.32 1400.53,242.69 1401.42,243.23 1402.31,242.26 1403.2,242.6 1404.09,242.65 1404.98,242.33 1405.87,241.21 1406.76,240.88 1407.65,240.93 1408.54,240.76 1409.43,240.87 1410.32,240.69 1411.21,239.65 1412.1,239.66 1412.99,239.67 1413.88,239.55 1413.88,249.39 1412.99,249.02 1412.1,249.13 1411.21,249.59 1410.32,250.05 1409.43,250.09 1408.54,251.21 1407.65,250.6 1406.76,250.77 1405.87,251.97 1404.98,251.28 1404.09,251.76 1403.2,252.11 1402.31,253.05 1401.42,252.91 1400.53,252.7 1399.64,252.84 1398.75,253.52 1397.86,253.92 1396.97,253.92 1396.08,254.64ZM1431.44,244.72 1432.33,244.29 1433.22,244.9 1434.11,243.7 1435,243.35 1435.89,243.36 1436.78,243.22 1437.67,243.01 1438.56,243.02 1439.45,242.47 1440.34,242.36 1441.23,242.15 1442.12,242.13 1443.01,241.1 1443.9,240.82 1444.79,240.51 1445.68,241.09 1446.57,240.44 1447.46,239.56 1448.35,240.19 1449.24,239.16 1449.24,249.3 1448.35,249.77 1447.46,250.46 1446.57,250.61 1445.68,250.58 1444.79,251.01 1443.9,251.1 1443.01,251.18 1442.12,251.95 1441.23,252.32 1440.34,251.59 1439.45,252.45 1438.56,252.07 1437.67,252.64 1436.78,253.41 1435.89,253.57 1435,253.89 1434.11,254.2 1433.22,254.16 1432.33,254.09 1431.44,254.4Z" stroke="none" fill="#34ee0a" stroke-width="1"/>
</g>
<rect x="107.6" y="135.1" width="1104.7" height="608.6" fill="none" stroke="#4a4a4a" stroke-width="1.5"/>
<polygon points="545.8,134.5 557.8,134.5 551.8,140.8" fill="#f58a00"/>
<polygon points="545.8,744.2 557.8,744.2 551.8,737.7" fill="#f58a00"/>
<polygon points="1216,439.4 1222.9,433.6 1222.9,445.2" fill="#f4f400"/>
<path d="M1222,439.4H1227.6V450.4" stroke="#f4f400" fill="none" stroke-width="1.6" opacity="0.8"/>
<path d="M1223.6,450.5H1232.4" stroke="#f4f400" fill="none" stroke-width="1.5"/>
<path d="M1224.8,453.1H1231.2" stroke="#f4f400" fill="none" stroke-width="1.5" opacity="0.8"/>
<path d="M1225.9,455.5H1230" stroke="#f4f400" fill="none" stroke-width="1.4" opacity="0.8"/>
<text x="1230" y="448.8" font-family="'Liberation Sans',sans-serif" font-size="15.8" fill="#f4f400" font-weight="bold" xml:space="preserve">1</text>
<rect x="1229.6" y="446.7" width="3.95" height="2.9" fill="#000"/>
<rect x="1236.25" y="446.7" width="3.75" height="2.9" fill="#000"/>
<text x="1237.9" y="442.9" font-family="'Liberation Sans',sans-serif" font-size="15.8" fill="#f4f400" font-weight="bold" textLength="8.3" lengthAdjust="spacingAndGlyphs" xml:space="preserve">T</text>
<polygon points="1216,532.6 1222.9,526.8 1222.9,538.4" fill="#fa0040"/>
<path d="M1222,532.6H1227.6V543.6" stroke="#fa0040" fill="none" stroke-width="1.6" opacity="0.8"/>
<path d="M1223.6,543.7H1232.4" stroke="#fa0040" fill="none" stroke-width="1.5"/>
<path d="M1224.8,546.3H1231.2" stroke="#fa0040" fill="none" stroke-width="1.5" opacity="0.8"/>
<path d="M1225.9,548.7H1230" stroke="#fa0040" fill="none" stroke-width="1.4" opacity="0.8"/>
<text x="1229.9" y="542" font-family="'Liberation Sans',sans-serif" font-size="15.8" fill="#fa0040" font-weight="bold" textLength="8.2" lengthAdjust="spacingAndGlyphs" xml:space="preserve">4</text>
<path d="M1227.6,721V740" stroke="#22e000" fill="none" stroke-width="1.4"/>
<polygon points="1222,737.2 1233.6,737.2 1227.8,743.6" fill="#22e000"/>
<text x="1230.3" y="734.2" font-family="'Liberation Sans',sans-serif" font-size="14.5" fill="#22e000" font-weight="bold" xml:space="preserve">2</text>
<g transform="translate(579.2,229.3) scale(1.2)"><path d="M0,0 L0,16.2 L3.7,12.7 L6.6,19.4 L9.3,18.2 L6.4,11.8 L11.4,11.8 Z" fill="#fff" stroke="#000" stroke-width="0.9" stroke-linejoin="round"/></g>
</g>
<g id="controls">
<rect x="103.4" y="759" width="18.4" height="21.6" fill="#d4d0c8"/>
<rect x="103.4" y="759" width="18.4" height="1.2" fill="#808080"/>
<rect x="103.4" y="759" width="1.2" height="21.6" fill="#808080"/>
<rect x="104.6" y="779.4" width="17.2" height="1.2" fill="#fbfaf7"/>
<rect x="120.6" y="760.2" width="1.2" height="20.4" fill="#fbfaf7"/>
<path d="M112.5,764.4V777" stroke="#000" fill="none" stroke-width="1.5"/>
<polygon points="112.5,763.4 109.3,768 115.7,768" fill="#000"/>
<rect x="128.8" y="757" width="33" height="17.2" fill="#d4d0c8"/>
<rect x="128.8" y="757" width="31.75" height="1.25" fill="#ffffff"/>
<rect x="128.8" y="757" width="1.25" height="15.95" fill="#ffffff"/>
<rect x="128.8" y="772.95" width="33" height="1.25" fill="#404040"/>
<rect x="160.55" y="757" width="1.25" height="17.2" fill="#404040"/>
<rect x="130.05" y="771.7" width="30.5" height="1.25" fill="#808080"/>
<rect x="159.3" y="758.25" width="1.25" height="14.7" fill="#808080"/>
<rect x="128.8" y="774.6" width="33" height="17" fill="#d4d0c8"/>
<rect x="128.8" y="774.6" width="31.75" height="1.25" fill="#ffffff"/>
<rect x="128.8" y="774.6" width="1.25" height="15.75" fill="#ffffff"/>
<rect x="128.8" y="790.35" width="33" height="1.25" fill="#404040"/>
<rect x="160.55" y="774.6" width="1.25" height="17" fill="#404040"/>
<rect x="130.05" y="789.1" width="30.5" height="1.25" fill="#808080"/>
<rect x="159.3" y="775.85" width="1.25" height="14.5" fill="#808080"/>
<path d="M141,766.1 L145.4,761.9 L149.8,766.1" stroke="#5a5a5a" fill="none" stroke-width="1.5"/>
<path d="M141,768.9 L145.4,764.7 L149.8,768.9" stroke="#5a5a5a" fill="none" stroke-width="1.5"/>
<path d="M141,782.5 L145.4,786.7 L149.8,782.5" stroke="#5a5a5a" fill="none" stroke-width="1.5"/>
<path d="M141,779.7 L145.4,783.9 L149.8,779.7" stroke="#5a5a5a" fill="none" stroke-width="1.5"/>
<rect x="163.7" y="757" width="24.2" height="34.6" fill="#d4d0c8"/>
<rect x="163.7" y="757" width="22.95" height="1.25" fill="#ffffff"/>
<rect x="163.7" y="757" width="1.25" height="33.35" fill="#ffffff"/>
<rect x="163.7" y="790.35" width="24.2" height="1.25" fill="#404040"/>
<rect x="186.65" y="757" width="1.25" height="34.6" fill="#404040"/>
<rect x="164.95" y="789.1" width="21.7" height="1.25" fill="#808080"/>
<rect x="185.4" y="758.25" width="1.25" height="32.1" fill="#808080"/>
<path d="M171,766.1 L175.4,761.9 L179.8,766.1" stroke="#5a5a5a" fill="none" stroke-width="1.5"/>
<path d="M171,768.9 L175.4,764.7 L179.8,768.9" stroke="#5a5a5a" fill="none" stroke-width="1.5"/>
<path d="M171,782.5 L175.4,786.7 L179.8,782.5" stroke="#5a5a5a" fill="none" stroke-width="1.5"/>
<path d="M171,779.7 L175.4,783.9 L179.8,779.7" stroke="#5a5a5a" fill="none" stroke-width="1.5"/>
<rect x="207.5" y="757" width="32.8" height="34.6" fill="#d4d0c8"/>
<rect x="207.5" y="757" width="32.8" height="1.3" fill="#404040"/>
<rect x="207.5" y="757" width="1.3" height="34.6" fill="#404040"/>
<rect x="208.8" y="758.3" width="31.5" height="1.2" fill="#808080"/>
<rect x="208.8" y="758.3" width="1.2" height="33.3" fill="#808080"/>
<rect x="208.8" y="790.3" width="31.5" height="1.3" fill="#fbfaf7"/>
<rect x="239" y="758.3" width="1.3" height="33.3" fill="#fbfaf7"/>
<polygon points="234.13,778.87 228.67,784.33 220.93,784.33 215.47,778.87 215.47,771.13 220.93,765.67 228.67,765.67 234.13,771.13" fill="#00b0b0" stroke="#003c3c" stroke-width="1.1"/>
<rect x="240.3" y="757" width="33.3" height="34.6" fill="#d4d0c8"/>
<rect x="240.3" y="757" width="32.05" height="1.25" fill="#ffffff"/>
<rect x="240.3" y="757" width="1.25" height="33.35" fill="#ffffff"/>
<rect x="240.3" y="790.35" width="33.3" height="1.25" fill="#404040"/>
<rect x="272.35" y="757" width="1.25" height="34.6" fill="#404040"/>
<rect x="241.55" y="789.1" width="30.8" height="1.25" fill="#808080"/>
<rect x="271.1" y="758.25" width="1.25" height="32.1" fill="#808080"/>
<polygon points="266.13,777.67 260.67,783.13 252.93,783.13 247.47,777.67 247.47,769.93 252.93,764.47 260.67,764.47 266.13,769.93" fill="#ff0000" stroke="#5a0000" stroke-width="1.1"/>
<rect x="273.6" y="757" width="33.4" height="34.6" fill="#d4d0c8"/>
<rect x="273.6" y="757" width="32.15" height="1.25" fill="#ffffff"/>
<rect x="273.6" y="757" width="1.25" height="33.35" fill="#ffffff"/>
<rect x="273.6" y="790.35" width="33.4" height="1.25" fill="#404040"/>
<rect x="305.75" y="757" width="1.25" height="34.6" fill="#404040"/>
<rect x="274.85" y="789.1" width="30.9" height="1.25" fill="#808080"/>
<rect x="304.5" y="758.25" width="1.25" height="32.1" fill="#808080"/>
<polygon points="299.33,777.67 293.87,783.13 286.13,783.13 280.67,777.67 280.67,769.93 286.13,764.47 293.87,764.47 299.33,769.93" fill="#ffff00" stroke="#5a5a00" stroke-width="1.1"/>
<rect x="322" y="757" width="32.4" height="34.6" fill="#d4d0c8"/>
<rect x="322" y="757" width="31.15" height="1.25" fill="#ffffff"/>
<rect x="322" y="757" width="1.25" height="33.35" fill="#ffffff"/>
<rect x="322" y="790.35" width="32.4" height="1.25" fill="#404040"/>
<rect x="353.15" y="757" width="1.25" height="34.6" fill="#404040"/>
<rect x="323.25" y="789.1" width="29.9" height="1.25" fill="#808080"/>
<rect x="351.9" y="758.25" width="1.25" height="32.1" fill="#808080"/>
<rect x="326.1" y="763.2" width="23.4" height="21.6" rx="2.4" fill="#fff" stroke="#1a1a1a" stroke-width="1.3"/>
<polygon points="349,771.4 349,784.2 337.6,784.2" fill="#808080"/>
<path d="M329.2,770.6 C331,765 339.5,764.8 343.2,771.6" stroke="#111" fill="none" stroke-width="1.5"/>
<polygon points="345.8,769.2 345.2,775.6 339.4,773.2" fill="#111"/>
<rect x="354.4" y="757" width="33.2" height="34.6" fill="#d4d0c8"/>
<rect x="354.4" y="757" width="31.95" height="1.25" fill="#ffffff"/>
<rect x="354.4" y="757" width="1.25" height="33.35" fill="#ffffff"/>
<rect x="354.4" y="790.35" width="33.2" height="1.25" fill="#404040"/>
<rect x="386.35" y="757" width="1.25" height="34.6" fill="#404040"/>
<rect x="355.65" y="789.1" width="30.7" height="1.25" fill="#808080"/>
<rect x="385.1" y="758.25" width="1.25" height="32.1" fill="#808080"/>
<polygon points="360.4,778.4 370.9,782.8 383.1,775.8 383.1,779.8 371.2,786.3 360.8,781.8" fill="#262626"/>
<path d="M361,780.3 L371,784.5 L383,777.9" stroke="#8c8c8c" fill="none" stroke-width="0.9"/>
<polygon points="360,775.7 370.8,779.7 370.8,782.4 360,778.2" fill="#9a9a9a"/>
<polygon points="370.8,779.7 383.1,772.8 383.1,775.6 370.8,782.4" fill="#6c6c6c"/>
<polygon points="360,775.7 373.1,766.3 383.1,772.8 370.8,779.7" fill="#b6b6b6"/>
<polygon points="360,775.7 366.5,771 372,774.8 366,778" fill="#cfcfcf"/>
<polygon points="376.6,772.7 380.6,767.9 381.5,770.2 378.1,773.6" fill="#383838"/>
<polygon points="371.4,769.1 374.8,765.2 380.5,767.6 376.6,772.7" fill="#fbfbfb" stroke="#fbfbfb" stroke-width="1" stroke-linejoin="round"/>
<path d="M380.2,767.9 H383.3" stroke="#111" fill="none" stroke-width="1.4"/>
<ellipse cx="367.1" cy="773.1" rx="1.5" ry="1" fill="#22d422"/>
<ellipse cx="369.8" cy="774.4" rx="1.4" ry="1" fill="#ee2a2a"/>
<rect x="387.6" y="757" width="33.3" height="34.6" fill="#d4d0c8"/>
<rect x="387.6" y="757" width="32.05" height="1.25" fill="#ffffff"/>
<rect x="387.6" y="757" width="1.25" height="33.35" fill="#ffffff"/>
<rect x="387.6" y="790.35" width="33.3" height="1.25" fill="#404040"/>
<rect x="419.65" y="757" width="1.25" height="34.6" fill="#404040"/>
<rect x="388.85" y="789.1" width="30.8" height="1.25" fill="#808080"/>
<rect x="418.4" y="758.25" width="1.25" height="32.1" fill="#808080"/>
<path d="M411.5,774.4L416.5,774.4" stroke="#505050" fill="none" stroke-width="1.4"/>
<path d="M410.37,780.27L414.61,784.51" stroke="#505050" fill="none" stroke-width="1.4"/>
<path d="M404.5,781.4L404.5,786.4" stroke="#505050" fill="none" stroke-width="1.4"/>
<path d="M398.63,780.27L394.39,784.51" stroke="#505050" fill="none" stroke-width="1.4"/>
<path d="M397.5,774.4L392.5,774.4" stroke="#505050" fill="none" stroke-width="1.4"/>
<path d="M398.63,768.53L394.39,764.29" stroke="#505050" fill="none" stroke-width="1.4"/>
<path d="M404.5,767.4L404.5,762.4" stroke="#505050" fill="none" stroke-width="1.4"/>
<path d="M410.37,768.53L414.61,764.29" stroke="#505050" fill="none" stroke-width="1.4"/>
<polygon points="409.4,776.43 406.53,779.3 402.47,779.3 399.6,776.43 399.6,772.37 402.47,769.5 406.53,769.5 409.4,772.37" fill="#ffff00" stroke="#181808" stroke-width="1.1"/>
<rect x="436" y="757" width="31.6" height="34.7" fill="#d4d0c8"/>
<rect x="436" y="757" width="30.35" height="1.25" fill="#ffffff"/>
<rect x="436" y="757" width="1.25" height="33.45" fill="#ffffff"/>
<rect x="436" y="790.45" width="31.6" height="1.25" fill="#404040"/>
<rect x="466.35" y="757" width="1.25" height="34.7" fill="#404040"/>
<rect x="437.25" y="789.2" width="29.1" height="1.25" fill="#808080"/>
<rect x="465.1" y="758.25" width="1.25" height="32.2" fill="#808080"/>
<rect x="441" y="761.7" width="22" height="24" fill="#000"/>
<text x="451.9" y="782.5" font-family="'Liberation Sans',sans-serif" font-size="24" fill="#fff" text-anchor="middle" textLength="18.6" lengthAdjust="spacingAndGlyphs" stroke="#fff" stroke-width="0.5" xml:space="preserve">H</text>
<rect x="468.9" y="755.6" width="124.6" height="39.4" fill="#fbfaf7"/>
<rect x="468.9" y="755.6" width="123.2" height="1.3" fill="#808080"/>
<rect x="468.9" y="755.6" width="1.3" height="38" fill="#808080"/>
<rect x="470.2" y="756.9" width="121.5" height="36.1" fill="#000"/>
<rect x="470.2" y="756.9" width="1.2" height="36.1" fill="#2c2c2c"/>
<text x="478.2" y="778.8" font-family="'DejaVu Sans Condensed','Liberation Sans',sans-serif" font-size="19.7" fill="#f2f2f2" xml:space="preserve">100 ns/</text>
<rect x="593.2" y="755.6" width="25.9" height="38.6" fill="#d4d0c8"/>
<rect x="593.2" y="755.6" width="24.65" height="1.25" fill="#ffffff"/>
<rect x="593.2" y="755.6" width="1.25" height="37.35" fill="#ffffff"/>
<rect x="593.2" y="792.95" width="25.9" height="1.25" fill="#404040"/>
<rect x="617.85" y="755.6" width="1.25" height="38.6" fill="#404040"/>
<rect x="594.45" y="791.7" width="23.4" height="1.25" fill="#808080"/>
<rect x="616.6" y="756.85" width="1.25" height="36.1" fill="#808080"/>
<rect x="619.1" y="755.6" width="26.4" height="38.6" fill="#d4d0c8"/>
<rect x="619.1" y="755.6" width="25.15" height="1.25" fill="#ffffff"/>
<rect x="619.1" y="755.6" width="1.25" height="37.35" fill="#ffffff"/>
<rect x="619.1" y="792.95" width="26.4" height="1.25" fill="#404040"/>
<rect x="644.25" y="755.6" width="1.25" height="38.6" fill="#404040"/>
<rect x="620.35" y="791.7" width="23.9" height="1.25" fill="#808080"/>
<rect x="643" y="756.85" width="1.25" height="36.1" fill="#808080"/>
<path d="M602.8,774.9 L603.23,773.11 L603.66,771.49 L604.09,770.21 L604.52,769.38 L604.95,769.1 L605.38,769.38 L605.81,770.21 L606.24,771.49 L606.67,773.11 L607.1,774.9 L607.53,776.69 L607.96,778.31 L608.39,779.59 L608.82,780.42 L609.25,780.7 L609.68,780.42 L610.11,779.59 L610.54,778.31 L610.97,776.69 L611.4,774.9" stroke="#1c1c1c" fill="none" stroke-width="1.4"/>
<path d="M624.8,774.9 L625.46,773.37 L626.12,771.95 L626.77,770.73 L627.43,769.79 L628.09,769.2 L628.75,769 L629.41,769.2 L630.07,769.79 L630.72,770.73 L631.38,771.95 L632.04,773.37 L632.7,774.9 L633.36,776.43 L634.02,777.85 L634.67,779.07 L635.33,780.01 L635.99,780.6 L636.65,780.8 L637.31,780.6 L637.97,780.01 L638.62,779.07 L639.28,777.85 L639.94,776.43 L640.6,774.9" stroke="#1c1c1c" fill="none" stroke-width="1.5"/>
<rect x="650.9" y="759.1" width="17.8" height="21.7" fill="#f58a00"/>
<rect x="650.9" y="759.1" width="17.8" height="1.2" fill="#808080"/>
<rect x="650.9" y="759.1" width="1.2" height="21.7" fill="#808080"/>
<rect x="652.1" y="779.6" width="16.6" height="1.2" fill="#fbfaf7"/>
<rect x="667.5" y="760.3" width="1.2" height="20.5" fill="#fbfaf7"/>
<path d="M659.9,764.2V777" stroke="#000" fill="none" stroke-width="1.5"/>
<polygon points="659.9,763.2 656.7,767.8 663.1,767.8" fill="#000"/>
<rect x="673.1" y="755.6" width="185.3" height="39.4" fill="#fbfaf7"/>
<rect x="673.1" y="755.6" width="183.9" height="1.3" fill="#808080"/>
<rect x="673.1" y="755.6" width="1.3" height="38" fill="#808080"/>
<rect x="674.4" y="756.9" width="182.2" height="36.1" fill="#000"/>
<rect x="674.4" y="756.9" width="1.2" height="36.1" fill="#2c2c2c"/>
<text x="682.4" y="778.8" font-family="'DejaVu Sans Condensed','Liberation Sans',sans-serif" font-size="19.7" fill="#f2f2f2" xml:space="preserve">97.1667 ns</text>
<rect x="859.2" y="755.6" width="25.3" height="38.6" fill="#d4d0c8"/>
<rect x="859.2" y="755.6" width="24.05" height="1.25" fill="#ffffff"/>
<rect x="859.2" y="755.6" width="1.25" height="37.35" fill="#ffffff"/>
<rect x="859.2" y="792.95" width="25.3" height="1.25" fill="#404040"/>
<rect x="883.25" y="755.6" width="1.25" height="38.6" fill="#404040"/>
<rect x="860.45" y="791.7" width="22.8" height="1.25" fill="#808080"/>
<rect x="882" y="756.85" width="1.25" height="36.1" fill="#808080"/>
<rect x="884.5" y="755.6" width="25.3" height="38.6" fill="#d4d0c8"/>
<rect x="884.5" y="755.6" width="24.05" height="1.25" fill="#ffffff"/>
<rect x="884.5" y="755.6" width="1.25" height="37.35" fill="#ffffff"/>
<rect x="884.5" y="792.95" width="25.3" height="1.25" fill="#404040"/>
<rect x="908.55" y="755.6" width="1.25" height="38.6" fill="#404040"/>
<rect x="885.75" y="791.7" width="22.8" height="1.25" fill="#808080"/>
<rect x="907.3" y="756.85" width="1.25" height="36.1" fill="#808080"/>
<rect x="909.8" y="755.6" width="26.2" height="38.6" fill="#d4d0c8"/>
<rect x="909.8" y="755.6" width="24.95" height="1.25" fill="#ffffff"/>
<rect x="909.8" y="755.6" width="1.25" height="37.35" fill="#ffffff"/>
<rect x="909.8" y="792.95" width="26.2" height="1.25" fill="#404040"/>
<rect x="934.75" y="755.6" width="1.25" height="38.6" fill="#404040"/>
<rect x="911.05" y="791.7" width="23.7" height="1.25" fill="#808080"/>
<rect x="933.5" y="756.85" width="1.25" height="36.1" fill="#808080"/>
<polygon points="868,774.4 875.2,767.4 875.2,781.4" fill="#000"/>
<polygon points="926.6,774.4 919.4,767.4 919.4,781.4" fill="#000"/>
<text x="897.7" y="781" font-family="'DejaVu Sans Condensed','Liberation Sans',sans-serif" font-size="18" fill="#000" text-anchor="middle" xml:space="preserve">0</text>
<rect x="1016.5" y="757.1" width="31.6" height="34.6" fill="#d4d0c8"/>
<rect x="1016.5" y="757.1" width="30.35" height="1.25" fill="#ffffff"/>
<rect x="1016.5" y="757.1" width="1.25" height="33.35" fill="#ffffff"/>
<rect x="1016.5" y="790.45" width="31.6" height="1.25" fill="#404040"/>
<rect x="1046.85" y="757.1" width="1.25" height="34.6" fill="#404040"/>
<rect x="1017.75" y="789.2" width="29.1" height="1.25" fill="#808080"/>
<rect x="1045.6" y="758.35" width="1.25" height="32.1" fill="#808080"/>
<rect x="1021.3" y="761.7" width="21.7" height="24" fill="#000"/>
<text x="1032.4" y="782.5" font-family="'Liberation Sans',sans-serif" font-size="24" fill="#ffff00" text-anchor="middle" textLength="15.6" lengthAdjust="spacingAndGlyphs" stroke="#ffff00" stroke-width="0.5" xml:space="preserve">T</text>
<rect x="1048.8" y="755.6" width="109" height="39.4" fill="#fbfaf7"/>
<rect x="1048.8" y="755.6" width="107.6" height="1.3" fill="#808080"/>
<rect x="1048.8" y="755.6" width="1.3" height="38" fill="#808080"/>
<rect x="1050.1" y="756.9" width="105.9" height="36.1" fill="#000"/>
<rect x="1050.1" y="756.9" width="1.2" height="36.1" fill="#2c2c2c"/>
<text x="1057.2" y="778.8" font-family="'DejaVu Sans Condensed','Liberation Sans',sans-serif" font-size="19.7" fill="#f4f400" textLength="48.2" lengthAdjust="spacingAndGlyphs" stroke="#f4f400" stroke-width="0.25" xml:space="preserve">0.0 V</text>
<rect x="1158.4" y="755" width="34.4" height="19.4" fill="#d4d0c8"/>
<rect x="1158.4" y="755" width="33.15" height="1.25" fill="#ffffff"/>
<rect x="1158.4" y="755" width="1.25" height="18.15" fill="#ffffff"/>
<rect x="1158.4" y="773.15" width="34.4" height="1.25" fill="#404040"/>
<rect x="1191.55" y="755" width="1.25" height="19.4" fill="#404040"/>
<rect x="1159.65" y="771.9" width="31.9" height="1.25" fill="#808080"/>
<rect x="1190.3" y="756.25" width="1.25" height="16.9" fill="#808080"/>
<rect x="1158.4" y="774.4" width="34.4" height="19.6" fill="#d4d0c8"/>
<rect x="1158.4" y="774.4" width="33.15" height="1.25" fill="#ffffff"/>
<rect x="1158.4" y="774.4" width="1.25" height="18.35" fill="#ffffff"/>
<rect x="1158.4" y="792.75" width="34.4" height="1.25" fill="#404040"/>
<rect x="1191.55" y="774.4" width="1.25" height="19.6" fill="#404040"/>
<rect x="1159.65" y="791.5" width="31.9" height="1.25" fill="#808080"/>
<rect x="1190.3" y="775.65" width="1.25" height="17.1" fill="#808080"/>
<polygon points="1175.4,761.6 1168.4,768.8 1182.4,768.8" fill="#000"/>
<polygon points="1175.4,787.6 1168.4,780.4 1182.4,780.4" fill="#000"/>
<rect x="1202" y="759" width="18.6" height="21.6" fill="#d4d0c8"/>
<rect x="1202" y="759" width="18.6" height="1.2" fill="#808080"/>
<rect x="1202" y="759" width="1.2" height="21.6" fill="#808080"/>
<rect x="1203.2" y="779.4" width="17.4" height="1.2" fill="#fbfaf7"/>
<rect x="1219.4" y="760.2" width="1.2" height="20.4" fill="#fbfaf7"/>
<path d="M1211.2,764.4V777" stroke="#000" fill="none" stroke-width="1.5"/>
<polygon points="1211.2,763.4 1208,768 1214.4,768" fill="#000"/>
</g>
<g id="tabs">
<rect x="175" y="802.3" width="65.4" height="27.9" fill="#d4d0c8"/>
<rect x="175.8" y="802.3" width="63.2" height="1.3" fill="#fbfaf7"/>
<rect x="175" y="803.4" width="1.3" height="26.8" fill="#fbfaf7"/>
<rect x="239" y="803.2" width="1.4" height="27" fill="#404040"/>
<rect x="237.8" y="803.6" width="1.2" height="26.6" fill="#808080"/>
<rect x="105.4" y="800.6" width="69.2" height="30.4" fill="#fbfaf7"/>
<rect x="106.9" y="802" width="67.7" height="29" fill="#404040"/>
<rect x="106.9" y="802" width="66.5" height="29" fill="#313131"/>
<text x="112.6" y="823.6" font-family="'DejaVu Sans Condensed','Liberation Sans',sans-serif" font-size="19.7" fill="#f4f4f4" textLength="54.4" lengthAdjust="spacingAndGlyphs" xml:space="preserve">Status</text>
<text x="179.9" y="823.4" font-family="'DejaVu Sans Condensed','Liberation Sans',sans-serif" font-size="19.7" fill="#101010" textLength="54.4" lengthAdjust="spacingAndGlyphs" xml:space="preserve">Scales</text>
</g>
<g id="status">
<rect x="93.6" y="830.2" width="1164.2" height="112.5" fill="#313131"/>
<text x="104.2" y="849.9" font-family="'DejaVu Sans Mono','Liberation Mono',monospace" font-size="18.3" fill="#ea8600" xml:space="preserve">Acquisition:</text>
<text x="104.2" y="871.6" font-family="'DejaVu Sans Mono','Liberation Mono',monospace" font-size="18.3" fill="#ececec" xml:space="preserve">Sampling Mode  Real Time</text>
<text x="104.2" y="893.5" font-family="'DejaVu Sans Mono','Liberation Mono',monospace" font-size="18.3" fill="#ececec" xml:space="preserve">Capture Time   1.00 µs</text>
<text x="104.2" y="915.6" font-family="'DejaVu Sans Mono','Liberation Mono',monospace" font-size="18.3" fill="#ececec" xml:space="preserve">Effective Res  1.56 ps/pt</text>
<text x="104.2" y="937.7" font-family="'DejaVu Sans Mono','Liberation Mono',monospace" font-size="18.3" fill="#ececec" xml:space="preserve">Bits Of Res    8 bits</text>
<text x="800" y="849.9" font-family="'DejaVu Sans Mono','Liberation Mono',monospace" font-size="18.3" fill="#ea8600" xml:space="preserve">Trigger:</text>
<text x="800" y="871.9" font-family="'DejaVu Sans Mono','Liberation Mono',monospace" font-size="18.3" fill="#ececec" xml:space="preserve">Mode         Edge (</text>
<text x="1015.9" y="872.4" font-family="'DejaVu Sans','Liberation Sans',sans-serif" font-size="17" fill="#ececec" text-anchor="middle" font-weight="bold" xml:space="preserve">↑</text>
<text x="1020.33" y="871.9" font-family="'DejaVu Sans Mono','Liberation Mono',monospace" font-size="18.3" fill="#ececec" xml:space="preserve">)</text>
<text x="800" y="915.7" font-family="'DejaVu Sans Mono','Liberation Mono',monospace" font-size="18.3" fill="#ececec" xml:space="preserve">InfiniiScan  NA</text>
</g>
</svg>
</body></html>
